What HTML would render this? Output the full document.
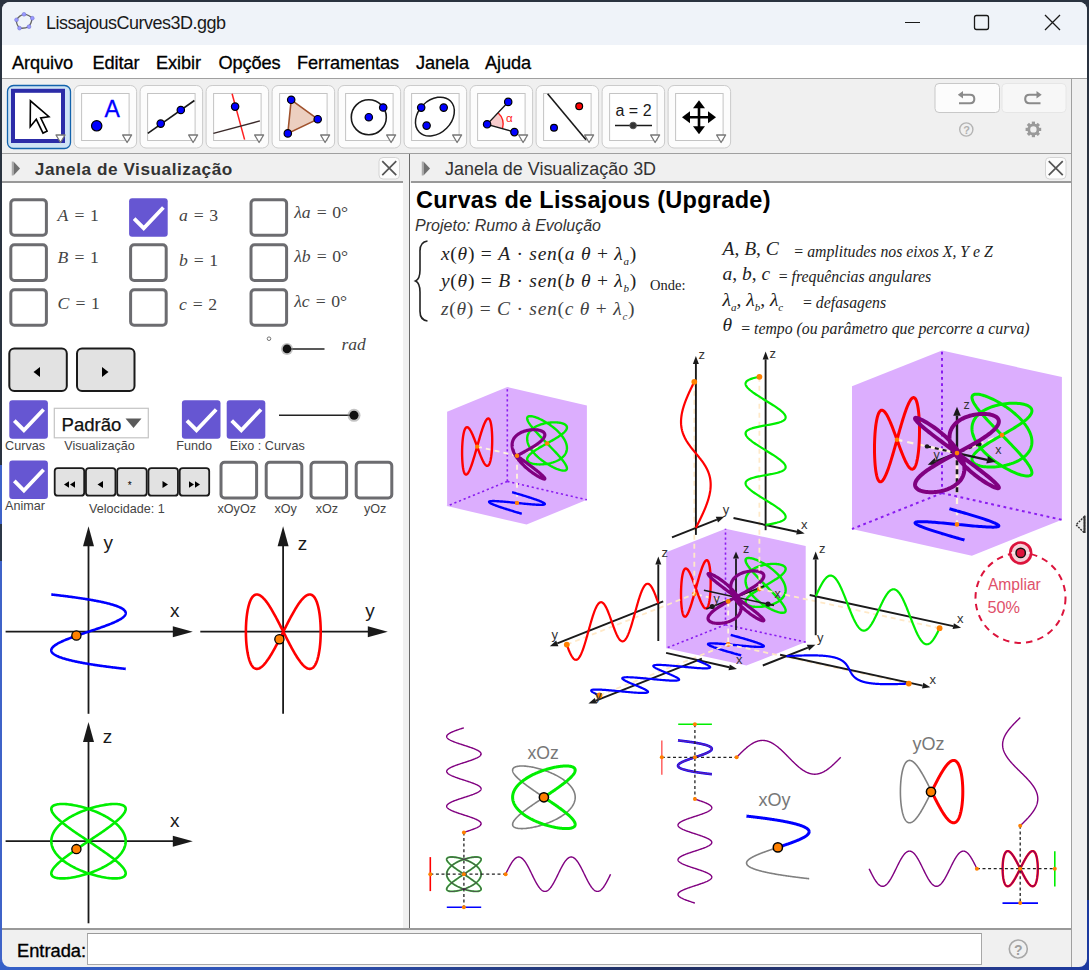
<!DOCTYPE html><html><head><meta charset="utf-8"><style>
*{margin:0;padding:0;box-sizing:border-box}
html,body{width:1089px;height:970px;overflow:hidden;background:#2a3340;font-family:"Liberation Sans",sans-serif}
.a{position:absolute}
#win{position:absolute;left:2px;top:2px;width:1085px;height:965px;background:#f0f0f0;border-radius:8px;overflow:hidden}
.t{position:absolute;white-space:nowrap;line-height:1}
</style></head><body>
<div class="a" style="left:0;top:465px;width:3px;height:505px;background:#3f63c8"></div>
<div class="a" style="left:0;top:524px;width:3px;height:37px;background:#2c3848"></div>
<div class="a" style="left:0;top:962px;width:1089px;height:8px;background:linear-gradient(90deg,#3560c8,#2d4fb0 30%,#1f2e60 60%,#2a3a80 85%,#1c3aa0)"></div>
<div class="a" style="left:1080px;top:900px;width:9px;height:70px;background:#1c3aa0"></div>
<div id="win">
<div class="a" style="left:-2px;top:-2px;width:1089px;height:970px">
<div class="a" style="left:0;top:0;width:1089px;height:45px;background:#eff3f9"></div>
<div class="a" style="left:0;top:45px;width:1089px;height:33px;background:#fff"></div>
<div class="a" style="left:0;top:78px;width:1089px;height:1px;background:#a0a0a0"></div>
<div class="a" style="left:0;top:153px;width:1072px;height:1px;background:#a0a0a0"></div>
<div class="a" style="left:1071px;top:79px;width:1px;height:890px;background:#a0a0a0"></div>
<div class="a" style="left:0;top:181px;width:403px;height:2px;background:#999"></div>
<div class="a" style="left:0;top:183px;width:403px;height:745px;background:#fff"></div>
<div class="a" style="left:409px;top:154px;width:1px;height:775px;background:#6a6a6a"></div>
<div class="a" style="left:411px;top:181px;width:660px;height:2px;background:#999"></div>
<div class="a" style="left:410px;top:183px;width:661px;height:745px;background:#fff"></div>
<div class="a" style="left:0;top:928px;width:1071px;height:2px;background:#999"></div>
<svg class="a" style="left:0;top:0" width="1089" height="45">
<path d="M24 14.3 Q29 14.5 32.3 18.2 Q31.5 23 29 26.7 Q24.5 28.8 19.5 28.1 Q16 24 16.5 19.8 Q19.5 15 24 14.3 Z" fill="none" stroke="#666" stroke-width="1.3"/>
<g fill="#9999ff" stroke="#6a6acc" stroke-width="0.5">
<circle cx="24" cy="14.3" r="1.9"/><circle cx="32.3" cy="18.2" r="1.9"/><circle cx="29" cy="26.7" r="1.9"/><circle cx="19.5" cy="28.1" r="1.9"/><circle cx="16.5" cy="19.8" r="1.9"/></g>
<line x1="905" y1="22.5" x2="920" y2="22.5" stroke="#1a1a1a" stroke-width="1.2"/>
<rect x="974.5" y="15.5" width="14" height="14" rx="2" fill="none" stroke="#1a1a1a" stroke-width="1.3"/>
<path d="M1045 15 L1060 30 M1060 15 L1045 30" stroke="#1a1a1a" stroke-width="1.3"/>
</svg>
<div class="t" style="left:46.0px;top:14.1px;font-size:18px;color:#1a1a1a;font-family:'Liberation Sans',sans-serif;letter-spacing:-0.5px">LissajousCurves3D.ggb</div>
<div class="t" style="left:12.0px;top:53.8px;font-size:18.2px;color:#000;font-family:'Liberation Sans',sans-serif;letter-spacing:-0.1px;-webkit-text-stroke:0.3px #000">Arquivo</div>
<div class="t" style="left:92.5px;top:53.8px;font-size:18.2px;color:#000;font-family:'Liberation Sans',sans-serif;letter-spacing:-0.1px;-webkit-text-stroke:0.3px #000">Editar</div>
<div class="t" style="left:156.0px;top:53.8px;font-size:18.2px;color:#000;font-family:'Liberation Sans',sans-serif;letter-spacing:-0.1px;-webkit-text-stroke:0.3px #000">Exibir</div>
<div class="t" style="left:218.5px;top:53.8px;font-size:18.2px;color:#000;font-family:'Liberation Sans',sans-serif;letter-spacing:-0.1px;-webkit-text-stroke:0.3px #000">Opções</div>
<div class="t" style="left:297.0px;top:53.8px;font-size:18.2px;color:#000;font-family:'Liberation Sans',sans-serif;letter-spacing:-0.1px;-webkit-text-stroke:0.3px #000">Ferramentas</div>
<div class="t" style="left:416.0px;top:53.8px;font-size:18.2px;color:#000;font-family:'Liberation Sans',sans-serif;letter-spacing:-0.1px;-webkit-text-stroke:0.3px #000">Janela</div>
<div class="t" style="left:485.0px;top:53.8px;font-size:18.2px;color:#000;font-family:'Liberation Sans',sans-serif;letter-spacing:-0.1px;-webkit-text-stroke:0.3px #000">Ajuda</div>
<svg class="a" style="left:0;top:0" width="1089" height="153"><rect x="7.5" y="85.5" width="63" height="63" rx="6" fill="#cfe3f5" stroke="#1363ac" stroke-width="1.3"/><rect x="13" y="90.8" width="50" height="50.2" fill="#fff" stroke="#2c2ca8" stroke-width="4"/><path d="M56.0 135 L65.0 135 L60.5 142.5 Z" fill="#fff" stroke="#777" stroke-width="1.3" stroke-linejoin="round"/><rect x="74.1" y="85.5" width="62.5" height="62.5" rx="6" fill="#fcfcfc" stroke="#cbcbcb" stroke-width="1"/><rect x="81.6" y="93.5" width="47.5" height="47" fill="#fff" stroke="#c4c4c4" stroke-width="1"/><path d="M122.6 135 L131.6 135 L127.1 142.5 Z" fill="#fff" stroke="#777" stroke-width="1.3" stroke-linejoin="round"/><rect x="140.1" y="85.5" width="62.5" height="62.5" rx="6" fill="#fcfcfc" stroke="#cbcbcb" stroke-width="1"/><rect x="147.6" y="93.5" width="47.5" height="47" fill="#fff" stroke="#c4c4c4" stroke-width="1"/><path d="M188.6 135 L197.6 135 L193.1 142.5 Z" fill="#fff" stroke="#777" stroke-width="1.3" stroke-linejoin="round"/><rect x="206.1" y="85.5" width="62.5" height="62.5" rx="6" fill="#fcfcfc" stroke="#cbcbcb" stroke-width="1"/><rect x="213.6" y="93.5" width="47.5" height="47" fill="#fff" stroke="#c4c4c4" stroke-width="1"/><path d="M254.6 135 L263.6 135 L259.1 142.5 Z" fill="#fff" stroke="#777" stroke-width="1.3" stroke-linejoin="round"/><rect x="272.1" y="85.5" width="62.5" height="62.5" rx="6" fill="#fcfcfc" stroke="#cbcbcb" stroke-width="1"/><rect x="279.6" y="93.5" width="47.5" height="47" fill="#fff" stroke="#c4c4c4" stroke-width="1"/><path d="M320.6 135 L329.6 135 L325.1 142.5 Z" fill="#fff" stroke="#777" stroke-width="1.3" stroke-linejoin="round"/><rect x="338.1" y="85.5" width="62.5" height="62.5" rx="6" fill="#fcfcfc" stroke="#cbcbcb" stroke-width="1"/><rect x="345.6" y="93.5" width="47.5" height="47" fill="#fff" stroke="#c4c4c4" stroke-width="1"/><path d="M386.6 135 L395.6 135 L391.1 142.5 Z" fill="#fff" stroke="#777" stroke-width="1.3" stroke-linejoin="round"/><rect x="404.1" y="85.5" width="62.5" height="62.5" rx="6" fill="#fcfcfc" stroke="#cbcbcb" stroke-width="1"/><rect x="411.6" y="93.5" width="47.5" height="47" fill="#fff" stroke="#c4c4c4" stroke-width="1"/><path d="M452.6 135 L461.6 135 L457.1 142.5 Z" fill="#fff" stroke="#777" stroke-width="1.3" stroke-linejoin="round"/><rect x="470.1" y="85.5" width="62.5" height="62.5" rx="6" fill="#fcfcfc" stroke="#cbcbcb" stroke-width="1"/><rect x="477.6" y="93.5" width="47.5" height="47" fill="#fff" stroke="#c4c4c4" stroke-width="1"/><path d="M518.6 135 L527.6 135 L523.1 142.5 Z" fill="#fff" stroke="#777" stroke-width="1.3" stroke-linejoin="round"/><rect x="536.1" y="85.5" width="62.5" height="62.5" rx="6" fill="#fcfcfc" stroke="#cbcbcb" stroke-width="1"/><rect x="543.6" y="93.5" width="47.5" height="47" fill="#fff" stroke="#c4c4c4" stroke-width="1"/><path d="M584.6 135 L593.6 135 L589.1 142.5 Z" fill="#fff" stroke="#777" stroke-width="1.3" stroke-linejoin="round"/><rect x="602.1" y="85.5" width="62.5" height="62.5" rx="6" fill="#fcfcfc" stroke="#cbcbcb" stroke-width="1"/><rect x="609.6" y="93.5" width="47.5" height="47" fill="#fff" stroke="#c4c4c4" stroke-width="1"/><path d="M650.6 135 L659.6 135 L655.1 142.5 Z" fill="#fff" stroke="#777" stroke-width="1.3" stroke-linejoin="round"/><rect x="668.1" y="85.5" width="62.5" height="62.5" rx="6" fill="#fcfcfc" stroke="#cbcbcb" stroke-width="1"/><rect x="675.6" y="93.5" width="47.5" height="47" fill="#fff" stroke="#c4c4c4" stroke-width="1"/><path d="M716.6 135 L725.6 135 L721.1 142.5 Z" fill="#fff" stroke="#777" stroke-width="1.3" stroke-linejoin="round"/><path d="M30.4 100.8 L30.2 126.8 L36.3 119.3 L43 133.1 L47.1 131.2 L40.7 117.9 L48.9 116.7 Z" fill="#fff" stroke="#000" stroke-width="1.6" stroke-linejoin="miter"/><circle cx="96.7" cy="125.8" r="5.2" fill="#0000ff" stroke="#000" stroke-width="1.2"/><text x="104.6" y="116.9" font-family="Liberation Sans" font-size="23" fill="#0000ff" stroke="#0000ff" stroke-width="0.3">A</text><line x1="147.8" y1="133.4" x2="194.4" y2="100.5" stroke="#1a1a1a" stroke-width="1.6"/><circle cx="160.7" cy="123.6" r="3.7" fill="#0000ff" stroke="#000" stroke-width="1.2"/><circle cx="180.8" cy="110" r="3.7" fill="#0000ff" stroke="#000" stroke-width="1.2"/><line x1="232.1" y1="93.7" x2="244.6" y2="139.6" stroke="#ff2020" stroke-width="1.5"/><line x1="213.4" y1="133.4" x2="259.9" y2="120.9" stroke="#3a2a2a" stroke-width="1.5"/><circle cx="235.1" cy="106.6" r="3.7" fill="#0000ff" stroke="#000" stroke-width="1.2"/><polygon points="291.2,99.8 317.7,119.2 287.8,133.4" fill="#eccfc0" stroke="#a0522d" stroke-width="1.6"/><circle cx="291.2" cy="99.8" r="3.7" fill="#0000ff" stroke="#000" stroke-width="1.2"/><circle cx="317.7" cy="119.2" r="3.7" fill="#0000ff" stroke="#000" stroke-width="1.2"/><circle cx="287.8" cy="133.4" r="3.7" fill="#0000ff" stroke="#000" stroke-width="1.2"/><circle cx="368.8" cy="117.2" r="17.5" fill="none" stroke="#1a1a1a" stroke-width="1.6"/><circle cx="368.8" cy="117.2" r="3.7" fill="#0000ff" stroke="#000" stroke-width="1.2"/><circle cx="383.2" cy="107.5" r="3.7" fill="#0000ff" stroke="#000" stroke-width="1.2"/><ellipse cx="434.9" cy="116.6" rx="22" ry="16.5" transform="rotate(-45 434.9 116.6)" fill="none" stroke="#1a1a1a" stroke-width="1.5"/><circle cx="421.2" cy="107.6" r="3.7" fill="#0000ff" stroke="#000" stroke-width="1.2"/><circle cx="443.7" cy="107.6" r="3.7" fill="#0000ff" stroke="#000" stroke-width="1.2"/><circle cx="426.6" cy="125.6" r="3.7" fill="#0000ff" stroke="#000" stroke-width="1.2"/><path d="M487.1 124.3 L498 112.8 A15.8 15.8 0 0 1 502.5 128.6 Z" fill="#f8cccc" stroke="none"/><path d="M498 112.8 A15.8 15.8 0 0 1 502.5 128.6" fill="none" stroke="#ff2020" stroke-width="1.4"/><polyline points="508.2,101.9 487.1,124.3 514.4,132.1" fill="none" stroke="#1a1a1a" stroke-width="1.4"/><circle cx="508.2" cy="101.9" r="3.7" fill="#0000ff" stroke="#000" stroke-width="1.2"/><circle cx="487.1" cy="124.3" r="3.7" fill="#0000ff" stroke="#000" stroke-width="1.2"/><circle cx="514.4" cy="132.1" r="3.7" fill="#0000ff" stroke="#000" stroke-width="1.2"/><text x="506" y="121.5" font-family="Liberation Sans" font-size="11.5" fill="#ff2020">α</text><line x1="547.6" y1="93.8" x2="586" y2="139.8" stroke="#1a1a1a" stroke-width="1.6"/><circle cx="579.2" cy="106.2" r="3.4" fill="#ff0000" stroke="#000" stroke-width="1.2"/><circle cx="554" cy="127.7" r="3.4" fill="#0000ff" stroke="#000" stroke-width="1.2"/><text x="615.5" y="116" font-family="Liberation Sans" font-size="16" fill="#1a1a1a">a = 2</text><line x1="615" y1="125.5" x2="652" y2="125.5" stroke="#1a1a1a" stroke-width="1.6"/><circle cx="633.1" cy="125.5" r="3.3" fill="#333" stroke="#555" stroke-width="1"/><g fill="#000" stroke="#000" stroke-width="2.6"><line x1="686" y1="117.2" x2="712" y2="117.2"/><line x1="699" y1="104.2" x2="699" y2="130.2"/></g><g fill="#000"><polygon points="699,100.2 693,108.2 705,108.2"/><polygon points="699,134.2 693,126.2 705,126.2"/><polygon points="682,117.2 690,111.2 690,123.2"/><polygon points="716,117.2 708,111.2 708,123.2"/></g><rect x="935" y="83.5" width="64.5" height="29" rx="4" fill="#fcfcfc" stroke="#c8c8c8" stroke-width="1"/><rect x="1002" y="83.5" width="64" height="29" rx="4" fill="#f7f7f7" stroke="#e6e6e6" stroke-width="1"/><path d="M961 94.8 H970 Q974.3 94.8 974.3 99 Q974.3 103.2 970 103.2 H959" fill="none" stroke="#8a8a8a" stroke-width="2.1"/><path d="M957.8 94.8 L963 91 L963 98.6 Z" fill="#8a8a8a"/><path d="M1038.5 94.8 H1029.5 Q1025.2 94.8 1025.2 99 Q1025.2 103.2 1029.5 103.2 H1040.5" fill="none" stroke="#8a8a8a" stroke-width="2.1"/><path d="M1041.7 94.8 L1036.5 91 L1036.5 98.6 Z" fill="#8a8a8a"/><circle cx="966.3" cy="129.5" r="6.6" fill="none" stroke="#b4b4b4" stroke-width="1.4"/><text x="963.2" y="134" font-family="Liberation Sans" font-size="11" font-weight="bold" fill="#b0b0b0">?</text><g transform="translate(1033.4,129.4)" fill="#9a9a9a"><circle r="4.6" fill="none" stroke="#9a9a9a" stroke-width="2.8"/><rect x="-1.6" y="-7.8" width="3.2" height="3.6" transform="rotate(0)"/><rect x="-1.6" y="-7.8" width="3.2" height="3.6" transform="rotate(45)"/><rect x="-1.6" y="-7.8" width="3.2" height="3.6" transform="rotate(90)"/><rect x="-1.6" y="-7.8" width="3.2" height="3.6" transform="rotate(135)"/><rect x="-1.6" y="-7.8" width="3.2" height="3.6" transform="rotate(180)"/><rect x="-1.6" y="-7.8" width="3.2" height="3.6" transform="rotate(225)"/><rect x="-1.6" y="-7.8" width="3.2" height="3.6" transform="rotate(270)"/><rect x="-1.6" y="-7.8" width="3.2" height="3.6" transform="rotate(315)"/></g></svg>
<svg class="a" style="left:0;top:150px" width="1089" height="35"><path d="M12.5 161.5 V175.5" stroke="#aaa" stroke-width="1.5" transform="translate(0,-150)"/><path d="M13.5 161.5 L20 168.5 L13.5 175.5 Z" fill="#707070" transform="translate(0,-150)"/><path d="M422.5 161.5 V175.5" stroke="#aaa" stroke-width="1.5" transform="translate(0,-150)"/><path d="M423.5 161.5 L430 168.5 L423.5 175.5 Z" fill="#707070" transform="translate(0,-150)"/><rect x="379" y="7.5" width="20.5" height="21.5" rx="4" fill="#fcfcfc" stroke="#d4d4d4" stroke-width="1"/><path d="M382.25 11.2 L396.25 25.2 M396.25 11.2 L382.25 25.2" stroke="#555" stroke-width="1.7"/><rect x="1045.5" y="7.5" width="20.5" height="21.5" rx="4" fill="#fcfcfc" stroke="#d4d4d4" stroke-width="1"/><path d="M1048.75 11.2 L1062.75 25.2 M1062.75 11.2 L1048.75 25.2" stroke="#555" stroke-width="1.7"/></svg>
<div class="t" style="left:34.8px;top:161.0px;font-size:17.2px;color:#333;font-family:'Liberation Sans',sans-serif;font-weight:bold;letter-spacing:0.55px">Janela de Visualização</div>
<div class="t" style="left:445.0px;top:160.6px;font-size:17.95px;color:#333;font-family:'Liberation Sans',sans-serif;">Janela de Visualização 3D</div>
<svg class="a" style="left:0;top:0" width="405" height="930"><rect x="10.8" y="199.7" width="35.6" height="35.6" rx="3.5" fill="#fff" stroke="#6c6c70" stroke-width="3"/><rect x="129.1" y="198.2" width="38.6" height="38.6" rx="3" fill="#6656d2"/><polyline points="134.1,218.6 143.7,228.2 163.39999999999998,207.5" fill="none" stroke="#fff" stroke-width="3.8"/><rect x="251.0" y="199.7" width="35.6" height="35.6" rx="3.5" fill="#fff" stroke="#6c6c70" stroke-width="3"/><rect x="10.8" y="244.8" width="35.6" height="35.6" rx="3.5" fill="#fff" stroke="#6c6c70" stroke-width="3"/><rect x="130.6" y="244.8" width="35.6" height="35.6" rx="3.5" fill="#fff" stroke="#6c6c70" stroke-width="3"/><rect x="251.0" y="244.8" width="35.6" height="35.6" rx="3.5" fill="#fff" stroke="#6c6c70" stroke-width="3"/><rect x="10.8" y="289.7" width="35.6" height="35.6" rx="3.5" fill="#fff" stroke="#6c6c70" stroke-width="3"/><rect x="130.6" y="289.7" width="35.6" height="35.6" rx="3.5" fill="#fff" stroke="#6c6c70" stroke-width="3"/><rect x="251.0" y="289.7" width="35.6" height="35.6" rx="3.5" fill="#fff" stroke="#6c6c70" stroke-width="3"/><rect x="9.3" y="348.5" width="57.5" height="42.5" rx="5" fill="#e2e2e2" stroke="#1a1a1a" stroke-width="2"/><rect x="77" y="348.5" width="57.5" height="42.5" rx="5" fill="#e2e2e2" stroke="#1a1a1a" stroke-width="2"/><polygon points="33.5,372 40,367 40,377" fill="#000"/><polygon points="108.5,372 102,367 102,377" fill="#000"/><circle cx="269" cy="338.7" r="1.8" fill="none" stroke="#666" stroke-width="0.9"/><line x1="287" y1="348.9" x2="324.5" y2="348.9" stroke="#222" stroke-width="1.5"/><circle cx="287" cy="348.9" r="6" fill="#888" fill-opacity="0.5"/><circle cx="287" cy="348.9" r="4.3" fill="#111"/><rect x="9.3" y="400.2" width="38.6" height="38.6" rx="3" fill="#6656d2"/><polyline points="14.3,420.59999999999997 23.9,430.2 43.599999999999994,409.5" fill="none" stroke="#fff" stroke-width="3.8"/><rect x="181.9" y="400.2" width="38.6" height="38.6" rx="3" fill="#6656d2"/><polyline points="186.9,420.59999999999997 196.5,430.2 216.2,409.5" fill="none" stroke="#fff" stroke-width="3.8"/><rect x="226.7" y="400.2" width="38.6" height="38.6" rx="3" fill="#6656d2"/><polyline points="231.7,420.59999999999997 241.29999999999998,430.2 261.0,409.5" fill="none" stroke="#fff" stroke-width="3.8"/><rect x="54.3" y="408.3" width="94" height="29.5" fill="#fff" stroke="#c4c4c4" stroke-width="1.2"/><polygon points="125.5,418.5 141.5,418.5 133.5,428" fill="#5a5a5a"/><line x1="279" y1="415.3" x2="354" y2="415.3" stroke="#222" stroke-width="1.5"/><circle cx="354" cy="415.3" r="6.5" fill="#888" fill-opacity="0.5"/><circle cx="354" cy="415.3" r="4.5" fill="#111"/><rect x="9.3" y="460.5" width="38.6" height="38.6" rx="3" fill="#6656d2"/><polyline points="14.3,480.9 23.9,490.5 43.599999999999994,469.8" fill="none" stroke="#fff" stroke-width="3.8"/><rect x="54.699999999999996" y="468.1" width="29.5" height="27.6" rx="3" fill="#e2e2e2" stroke="#1a1a1a" stroke-width="1.8"/><rect x="85.95" y="468.1" width="29.5" height="27.6" rx="3" fill="#e2e2e2" stroke="#1a1a1a" stroke-width="1.8"/><rect x="117.2" y="468.1" width="29.5" height="27.6" rx="3" fill="#e2e2e2" stroke="#1a1a1a" stroke-width="1.8"/><rect x="148.45000000000002" y="468.1" width="29.5" height="27.6" rx="3" fill="#e2e2e2" stroke="#1a1a1a" stroke-width="1.8"/><rect x="179.70000000000002" y="468.1" width="29.5" height="27.6" rx="3" fill="#e2e2e2" stroke="#1a1a1a" stroke-width="1.8"/><polygon points="64,484.5 69,481.2 69,487.8" fill="#000"/><polygon points="70,484.5 75,481.2 75,487.8" fill="#000"/><polygon points="97.5,484.5 103,481.0 103,488.0" fill="#000"/><text x="127.8" y="489.0" font-family="Liberation Sans" font-size="10" fill="#000">*</text><polygon points="168,484.5 162.5,481.0 162.5,488.0" fill="#000"/><polygon points="194,484.5 189,481.2 189,487.8" fill="#000"/><polygon points="200,484.5 195,481.2 195,487.8" fill="#000"/><rect x="221.0" y="462.3" width="35.6" height="35.6" rx="3.5" fill="#fff" stroke="#6c6c70" stroke-width="3"/><rect x="266.2" y="462.3" width="35.6" height="35.6" rx="3.5" fill="#fff" stroke="#6c6c70" stroke-width="3"/><rect x="311.0" y="462.3" width="35.6" height="35.6" rx="3.5" fill="#fff" stroke="#6c6c70" stroke-width="3"/><rect x="356.2" y="462.3" width="35.6" height="35.6" rx="3.5" fill="#fff" stroke="#6c6c70" stroke-width="3"/></svg>
<div class="t" style="left:57.6px;top:206.6px;font-size:17.7px;color:#444;font-family:'Liberation Serif',serif"><i>A</i><span style="margin:0 5.5px 0 6px">=</span>1</div>
<div class="t" style="left:57.6px;top:249.2px;font-size:17.7px;color:#444;font-family:'Liberation Serif',serif"><i>B</i><span style="margin:0 5.5px 0 6px">=</span>1</div>
<div class="t" style="left:57.6px;top:295.4px;font-size:17.7px;color:#444;font-family:'Liberation Serif',serif"><i>C</i><span style="margin:0 5.5px 0 6px">=</span>1</div>
<div class="t" style="left:179px;top:207.2px;font-size:17.7px;color:#444;font-family:'Liberation Serif',serif"><i>a</i><span style="margin:0 5.5px 0 6px">=</span>3</div>
<div class="t" style="left:179px;top:252.2px;font-size:17.7px;color:#444;font-family:'Liberation Serif',serif"><i>b</i><span style="margin:0 5.5px 0 6px">=</span>1</div>
<div class="t" style="left:179px;top:295.7px;font-size:17.7px;color:#444;font-family:'Liberation Serif',serif"><i>c</i><span style="margin:0 5.5px 0 6px">=</span>2</div>
<div class="t" style="left:294.2px;top:203.7px;font-size:17.7px;color:#444;font-family:'Liberation Serif',serif"><i>λa</i><span style="margin:0 5.5px 0 6px">=</span>0°</div>
<div class="t" style="left:294.2px;top:248.4px;font-size:17.7px;color:#444;font-family:'Liberation Serif',serif"><i>λb</i><span style="margin:0 5.5px 0 6px">=</span>0°</div>
<div class="t" style="left:294.2px;top:293.3px;font-size:17.7px;color:#444;font-family:'Liberation Serif',serif"><i>λc</i><span style="margin:0 5.5px 0 6px">=</span>0°</div>
<div class="t" style="left:341.5px;top:336px;font-size:17.5px;color:#444;font-family:'Liberation Serif',serif"><i>rad</i></div>
<div class="t" style="left:5.1px;top:440.2px;font-size:12.6px;color:#444;font-family:'Liberation Sans',sans-serif;">Curvas</div>
<div class="t" style="left:64.3px;top:440.2px;font-size:12.6px;color:#444;font-family:'Liberation Sans',sans-serif;">Visualização</div>
<div class="t" style="left:176.3px;top:440.4px;font-size:12.6px;color:#444;font-family:'Liberation Sans',sans-serif;">Fundo</div>
<div class="t" style="left:229.8px;top:440.4px;font-size:12.6px;color:#444;font-family:'Liberation Sans',sans-serif;">Eixo : Curvas</div>
<div class="t" style="left:5.1px;top:500.3px;font-size:12.6px;color:#444;font-family:'Liberation Sans',sans-serif;">Animar</div>
<div class="t" style="left:89.1px;top:503.0px;font-size:12.6px;color:#444;font-family:'Liberation Sans',sans-serif;">Velocidade: 1</div>
<div class="t" style="left:217.5px;top:503.1px;font-size:12.6px;color:#444;font-family:'Liberation Sans',sans-serif;">xOyOz</div>
<div class="t" style="left:274.5px;top:503.1px;font-size:12.6px;color:#444;font-family:'Liberation Sans',sans-serif;">xOy</div>
<div class="t" style="left:315.7px;top:503.1px;font-size:12.6px;color:#444;font-family:'Liberation Sans',sans-serif;">xOz</div>
<div class="t" style="left:363.9px;top:503.1px;font-size:12.6px;color:#444;font-family:'Liberation Sans',sans-serif;">yOz</div>
<div class="t" style="left:61.5px;top:415.5px;font-size:18.6px;color:#111;font-family:'Liberation Sans',sans-serif;-webkit-text-stroke:0.25px #111">Padrão</div>
<svg class="a" style="left:0;top:0" width="405" height="930"><line x1="5.6" y1="631.7" x2="180.8" y2="631.7" stroke="#1a1a1a" stroke-width="1.8"/><polygon points="192.8,631.7 172.8,626.2 172.8,637.2" fill="#1a1a1a"/><line x1="88.5" y1="538.3" x2="88.5" y2="713.8" stroke="#1a1a1a" stroke-width="1.8"/><polygon points="88.5,526.3 83.0,546.3 94.0,546.3" fill="#1a1a1a"/><path d="M125.70,668.90 L125.69,668.90 L125.66,668.90 L125.61,668.89 L125.53,668.88 L125.44,668.87 L125.33,668.86 L125.20,668.84 L125.04,668.83 L124.87,668.81 L124.67,668.79 L124.46,668.76 L124.22,668.73 L123.97,668.71 L123.69,668.68 L123.40,668.64 L123.09,668.61 L122.76,668.57 L122.40,668.53 L122.03,668.49 L121.65,668.44 L121.24,668.40 L120.81,668.35 L120.37,668.29 L119.91,668.24 L119.43,668.19 L118.94,668.13 L118.42,668.07 L117.89,668.00 L117.35,667.94 L116.79,667.87 L116.21,667.80 L115.62,667.73 L115.01,667.66 L114.39,667.58 L113.75,667.50 L113.10,667.42 L112.44,667.34 L111.76,667.26 L111.07,667.17 L110.37,667.08 L109.65,666.99 L108.92,666.89 L108.19,666.80 L107.44,666.70 L106.68,666.60 L105.91,666.50 L105.13,666.39 L104.34,666.29 L103.54,666.18 L102.74,666.07 L101.92,665.96 L101.10,665.84 L100.27,665.72 L99.44,665.60 L98.60,665.48 L97.75,665.36 L96.90,665.23 L96.04,665.11 L95.18,664.98 L94.32,664.85 L93.45,664.71 L92.58,664.58 L91.71,664.44 L90.84,664.30 L89.96,664.16 L89.08,664.01 L88.21,663.87 L87.33,663.72 L86.46,663.57 L85.58,663.42 L84.71,663.26 L83.84,663.11 L82.97,662.95 L82.10,662.79 L81.24,662.63 L80.39,662.47 L79.53,662.30 L78.68,662.14 L77.84,661.97 L77.00,661.80 L76.17,661.62 L75.35,661.45 L74.53,661.27 L73.73,661.09 L72.93,660.91 L72.13,660.73 L71.35,660.55 L70.58,660.36 L69.82,660.18 L69.06,659.99 L68.32,659.80 L67.59,659.60 L66.87,659.41 L66.16,659.21 L65.47,659.02 L64.79,658.82 L64.12,658.62 L63.46,658.41 L62.82,658.21 L62.20,658.00 L61.58,657.80 L60.99,657.59 L60.40,657.38 L59.84,657.17 L59.29,656.95 L58.75,656.74 L58.23,656.52 L57.73,656.30 L57.25,656.08 L56.78,655.86 L56.33,655.64 L55.90,655.41 L55.49,655.19 L55.09,654.96 L54.72,654.73 L54.36,654.50 L54.02,654.27 L53.70,654.04 L53.40,653.80 L53.12,653.57 L52.86,653.33 L52.62,653.09 L52.40,652.85 L52.20,652.61 L52.01,652.37 L51.85,652.12 L51.71,651.88 L51.59,651.63 L51.49,651.39 L51.41,651.14 L51.36,650.89 L51.32,650.64 L51.30,650.38 L51.30,650.13 L51.33,649.88 L51.37,649.62 L51.44,649.36 L51.52,649.11 L51.63,648.85 L51.76,648.59 L51.91,648.33 L52.07,648.07 L52.26,647.80 L52.47,647.54 L52.70,647.27 L52.94,647.01 L53.21,646.74 L53.50,646.47 L53.81,646.21 L54.13,645.94 L54.48,645.67 L54.84,645.39 L55.22,645.12 L55.62,644.85 L56.04,644.58 L56.48,644.30 L56.94,644.03 L57.41,643.75 L57.90,643.47 L58.40,643.20 L58.93,642.92 L59.47,642.64 L60.02,642.36 L60.60,642.08 L61.18,641.80 L61.79,641.52 L62.40,641.23 L63.03,640.95 L63.68,640.67 L64.34,640.38 L65.01,640.10 L65.70,639.81 L66.40,639.53 L67.11,639.24 L67.83,638.96 L68.57,638.67 L69.31,638.38 L70.07,638.10 L70.84,637.81 L71.61,637.52 L72.40,637.23 L73.19,636.94 L73.99,636.65 L74.81,636.36 L75.62,636.07 L76.45,635.78 L77.28,635.49 L78.12,635.20 L78.97,634.91 L79.82,634.62 L80.67,634.33 L81.53,634.04 L82.39,633.74 L83.26,633.45 L84.13,633.16 L85.00,632.87 L85.87,632.58 L86.75,632.28 L87.62,631.99 L88.50,631.70 L89.38,631.41 L90.25,631.12 L91.13,630.82 L92.00,630.53 L92.87,630.24 L93.74,629.95 L94.61,629.66 L95.47,629.36 L96.33,629.07 L97.18,628.78 L98.03,628.49 L98.88,628.20 L99.72,627.91 L100.55,627.62 L101.38,627.33 L102.19,627.04 L103.01,626.75 L103.81,626.46 L104.60,626.17 L105.39,625.88 L106.16,625.59 L106.93,625.30 L107.69,625.02 L108.43,624.73 L109.17,624.44 L109.89,624.16 L110.60,623.87 L111.30,623.59 L111.99,623.30 L112.66,623.02 L113.32,622.73 L113.97,622.45 L114.60,622.17 L115.21,621.88 L115.82,621.60 L116.40,621.32 L116.98,621.04 L117.53,620.76 L118.07,620.48 L118.60,620.20 L119.10,619.93 L119.59,619.65 L120.06,619.37 L120.52,619.10 L120.96,618.82 L121.38,618.55 L121.78,618.28 L122.16,618.01 L122.52,617.73 L122.87,617.46 L123.19,617.19 L123.50,616.93 L123.79,616.66 L124.06,616.39 L124.30,616.13 L124.53,615.86 L124.74,615.60 L124.93,615.33 L125.09,615.07 L125.24,614.81 L125.37,614.55 L125.48,614.29 L125.56,614.04 L125.63,613.78 L125.67,613.52 L125.70,613.27 L125.70,613.02 L125.68,612.76 L125.64,612.51 L125.59,612.26 L125.51,612.01 L125.41,611.77 L125.29,611.52 L125.15,611.28 L124.99,611.03 L124.80,610.79 L124.60,610.55 L124.38,610.31 L124.14,610.07 L123.88,609.83 L123.60,609.60 L123.30,609.36 L122.98,609.13 L122.64,608.90 L122.28,608.67 L121.91,608.44 L121.51,608.21 L121.10,607.99 L120.67,607.76 L120.22,607.54 L119.75,607.32 L119.27,607.10 L118.77,606.88 L118.25,606.66 L117.71,606.45 L117.16,606.23 L116.60,606.02 L116.01,605.81 L115.42,605.60 L114.80,605.40 L114.18,605.19 L113.54,604.99 L112.88,604.78 L112.21,604.58 L111.53,604.38 L110.84,604.19 L110.13,603.99 L109.41,603.80 L108.68,603.60 L107.94,603.41 L107.18,603.22 L106.42,603.04 L105.65,602.85 L104.87,602.67 L104.07,602.49 L103.27,602.31 L102.47,602.13 L101.65,601.95 L100.83,601.78 L100.00,601.60 L99.16,601.43 L98.32,601.26 L97.47,601.10 L96.61,600.93 L95.76,600.77 L94.90,600.61 L94.03,600.45 L93.16,600.29 L92.29,600.14 L91.42,599.98 L90.54,599.83 L89.67,599.68 L88.79,599.53 L87.92,599.39 L87.04,599.24 L86.16,599.10 L85.29,598.96 L84.42,598.82 L83.55,598.69 L82.68,598.55 L81.82,598.42 L80.96,598.29 L80.10,598.17 L79.25,598.04 L78.40,597.92 L77.56,597.80 L76.73,597.68 L75.90,597.56 L75.08,597.44 L74.26,597.33 L73.46,597.22 L72.66,597.11 L71.87,597.01 L71.09,596.90 L70.32,596.80 L69.56,596.70 L68.81,596.60 L68.08,596.51 L67.35,596.41 L66.63,596.32 L65.93,596.23 L65.24,596.14 L64.56,596.06 L63.90,595.98 L63.25,595.90 L62.61,595.82 L61.99,595.74 L61.38,595.67 L60.79,595.60 L60.21,595.53 L59.65,595.46 L59.11,595.40 L58.58,595.33 L58.06,595.27 L57.57,595.21 L57.09,595.16 L56.63,595.11 L56.19,595.05 L55.76,595.00 L55.35,594.96 L54.97,594.91 L54.60,594.87 L54.24,594.83 L53.91,594.79 L53.60,594.76 L53.31,594.72 L53.03,594.69 L52.78,594.67 L52.54,594.64 L52.33,594.61 L52.13,594.59 L51.96,594.57 L51.80,594.56 L51.67,594.54 L51.56,594.53 L51.47,594.52 L51.39,594.51 L51.34,594.50 L51.31,594.50 L51.30,594.50" fill="none" stroke="#0000ff" stroke-width="2.6"/><circle cx="76.4" cy="635.5" r="4.6" fill="#ff8000" stroke="#000" stroke-width="1.3"/><line x1="200.3" y1="631.7" x2="375.8" y2="631.7" stroke="#1a1a1a" stroke-width="1.8"/><polygon points="387.8,631.7 367.8,626.2 367.8,637.2" fill="#1a1a1a"/><line x1="283.1" y1="538.3" x2="283.1" y2="713.8" stroke="#1a1a1a" stroke-width="1.8"/><polygon points="283.1,526.3 277.6,546.3 288.6,546.3" fill="#1a1a1a"/><path d="M283.30,631.70 L283.89,630.53 L284.47,629.36 L285.06,628.20 L285.65,627.04 L286.23,625.88 L286.82,624.73 L287.40,623.59 L287.99,622.45 L288.57,621.32 L289.15,620.20 L289.73,619.10 L290.31,618.01 L290.88,616.93 L291.46,615.86 L292.03,614.81 L292.60,613.78 L293.17,612.76 L293.73,611.77 L294.30,610.79 L294.86,609.83 L295.41,608.90 L295.97,607.99 L296.52,607.10 L297.07,606.23 L297.61,605.40 L298.15,604.58 L298.69,603.80 L299.22,603.04 L299.75,602.31 L300.28,601.60 L300.80,600.93 L301.32,600.29 L301.83,599.68 L302.34,599.10 L302.84,598.55 L303.34,598.04 L303.83,597.56 L304.32,597.11 L304.81,596.70 L305.28,596.32 L305.76,595.98 L306.22,595.67 L306.68,595.40 L307.14,595.16 L307.59,594.96 L308.03,594.79 L308.47,594.67 L308.90,594.57 L309.33,594.52 L309.75,594.50 L310.16,594.52 L310.56,594.57 L310.96,594.67 L311.35,594.79 L311.74,594.96 L312.12,595.16 L312.49,595.40 L312.85,595.67 L313.21,595.98 L313.56,596.32 L313.90,596.70 L314.23,597.11 L314.56,597.56 L314.88,598.04 L315.19,598.55 L315.49,599.10 L315.79,599.68 L316.07,600.29 L316.35,600.93 L316.62,601.60 L316.89,602.31 L317.14,603.04 L317.39,603.80 L317.62,604.58 L317.85,605.40 L318.07,606.23 L318.29,607.10 L318.49,607.99 L318.68,608.90 L318.87,609.83 L319.05,610.79 L319.21,611.77 L319.37,612.76 L319.53,613.78 L319.67,614.81 L319.80,615.86 L319.92,616.93 L320.04,618.01 L320.14,619.10 L320.24,620.20 L320.33,621.32 L320.41,622.45 L320.47,623.59 L320.53,624.73 L320.58,625.88 L320.63,627.04 L320.66,628.20 L320.68,629.36 L320.70,630.53 L320.70,631.70 L320.70,632.87 L320.68,634.04 L320.66,635.20 L320.63,636.36 L320.58,637.52 L320.53,638.67 L320.47,639.81 L320.41,640.95 L320.33,642.08 L320.24,643.20 L320.14,644.30 L320.04,645.39 L319.92,646.47 L319.80,647.54 L319.67,648.59 L319.53,649.62 L319.37,650.64 L319.21,651.63 L319.05,652.61 L318.87,653.57 L318.68,654.50 L318.49,655.41 L318.29,656.30 L318.07,657.17 L317.85,658.00 L317.62,658.82 L317.39,659.60 L317.14,660.36 L316.89,661.09 L316.62,661.80 L316.35,662.47 L316.07,663.11 L315.79,663.72 L315.49,664.30 L315.19,664.85 L314.88,665.36 L314.56,665.84 L314.23,666.29 L313.90,666.70 L313.56,667.08 L313.21,667.42 L312.85,667.73 L312.49,668.00 L312.12,668.24 L311.74,668.44 L311.35,668.61 L310.96,668.73 L310.56,668.83 L310.16,668.88 L309.75,668.90 L309.33,668.88 L308.90,668.83 L308.47,668.73 L308.03,668.61 L307.59,668.44 L307.14,668.24 L306.68,668.00 L306.22,667.73 L305.76,667.42 L305.28,667.08 L304.81,666.70 L304.32,666.29 L303.83,665.84 L303.34,665.36 L302.84,664.85 L302.34,664.30 L301.83,663.72 L301.32,663.11 L300.80,662.47 L300.28,661.80 L299.75,661.09 L299.22,660.36 L298.69,659.60 L298.15,658.82 L297.61,658.00 L297.07,657.17 L296.52,656.30 L295.97,655.41 L295.41,654.50 L294.86,653.57 L294.30,652.61 L293.73,651.63 L293.17,650.64 L292.60,649.62 L292.03,648.59 L291.46,647.54 L290.88,646.47 L290.31,645.39 L289.73,644.30 L289.15,643.20 L288.57,642.08 L287.99,640.95 L287.40,639.81 L286.82,638.67 L286.23,637.52 L285.65,636.36 L285.06,635.20 L284.47,634.04 L283.89,632.87 L283.30,631.70 L282.71,630.53 L282.13,629.36 L281.54,628.20 L280.95,627.04 L280.37,625.88 L279.78,624.73 L279.20,623.59 L278.61,622.45 L278.03,621.32 L277.45,620.20 L276.87,619.10 L276.29,618.01 L275.72,616.93 L275.14,615.86 L274.57,614.81 L274.00,613.78 L273.43,612.76 L272.87,611.77 L272.30,610.79 L271.74,609.83 L271.19,608.90 L270.63,607.99 L270.08,607.10 L269.53,606.23 L268.99,605.40 L268.45,604.58 L267.91,603.80 L267.38,603.04 L266.85,602.31 L266.32,601.60 L265.80,600.93 L265.28,600.29 L264.77,599.68 L264.26,599.10 L263.76,598.55 L263.26,598.04 L262.77,597.56 L262.28,597.11 L261.79,596.70 L261.32,596.32 L260.84,595.98 L260.38,595.67 L259.92,595.40 L259.46,595.16 L259.01,594.96 L258.57,594.79 L258.13,594.67 L257.70,594.57 L257.27,594.52 L256.85,594.50 L256.44,594.52 L256.04,594.57 L255.64,594.67 L255.25,594.79 L254.86,594.96 L254.48,595.16 L254.11,595.40 L253.75,595.67 L253.39,595.98 L253.04,596.32 L252.70,596.70 L252.37,597.11 L252.04,597.56 L251.72,598.04 L251.41,598.55 L251.11,599.10 L250.81,599.68 L250.53,600.29 L250.25,600.93 L249.98,601.60 L249.71,602.31 L249.46,603.04 L249.21,603.80 L248.98,604.58 L248.75,605.40 L248.53,606.23 L248.31,607.10 L248.11,607.99 L247.92,608.90 L247.73,609.83 L247.55,610.79 L247.39,611.77 L247.23,612.76 L247.07,613.78 L246.93,614.81 L246.80,615.86 L246.68,616.93 L246.56,618.01 L246.46,619.10 L246.36,620.20 L246.27,621.32 L246.19,622.45 L246.13,623.59 L246.07,624.73 L246.02,625.88 L245.97,627.04 L245.94,628.20 L245.92,629.36 L245.90,630.53 L245.90,631.70 L245.90,632.87 L245.92,634.04 L245.94,635.20 L245.97,636.36 L246.02,637.52 L246.07,638.67 L246.13,639.81 L246.19,640.95 L246.27,642.08 L246.36,643.20 L246.46,644.30 L246.56,645.39 L246.68,646.47 L246.80,647.54 L246.93,648.59 L247.07,649.62 L247.23,650.64 L247.39,651.63 L247.55,652.61 L247.73,653.57 L247.92,654.50 L248.11,655.41 L248.31,656.30 L248.53,657.17 L248.75,658.00 L248.98,658.82 L249.21,659.60 L249.46,660.36 L249.71,661.09 L249.98,661.80 L250.25,662.47 L250.53,663.11 L250.81,663.72 L251.11,664.30 L251.41,664.85 L251.72,665.36 L252.04,665.84 L252.37,666.29 L252.70,666.70 L253.04,667.08 L253.39,667.42 L253.75,667.73 L254.11,668.00 L254.48,668.24 L254.86,668.44 L255.25,668.61 L255.64,668.73 L256.04,668.83 L256.44,668.88 L256.85,668.90 L257.27,668.88 L257.70,668.83 L258.13,668.73 L258.57,668.61 L259.01,668.44 L259.46,668.24 L259.92,668.00 L260.38,667.73 L260.84,667.42 L261.32,667.08 L261.79,666.70 L262.28,666.29 L262.77,665.84 L263.26,665.36 L263.76,664.85 L264.26,664.30 L264.77,663.72 L265.28,663.11 L265.80,662.47 L266.32,661.80 L266.85,661.09 L267.38,660.36 L267.91,659.60 L268.45,658.82 L268.99,658.00 L269.53,657.17 L270.08,656.30 L270.63,655.41 L271.19,654.50 L271.74,653.57 L272.30,652.61 L272.87,651.63 L273.43,650.64 L274.00,649.62 L274.57,648.59 L275.14,647.54 L275.72,646.47 L276.29,645.39 L276.87,644.30 L277.45,643.20 L278.03,642.08 L278.61,640.95 L279.20,639.81 L279.78,638.67 L280.37,637.52 L280.95,636.36 L281.54,635.20 L282.13,634.04 L282.71,632.87 L283.30,631.70" fill="none" stroke="#ff0000" stroke-width="2.6"/><circle cx="279.4" cy="639.2" r="4.6" fill="#ff8000" stroke="#000" stroke-width="1.3"/><line x1="5.6" y1="841.2" x2="180.8" y2="841.2" stroke="#1a1a1a" stroke-width="1.8"/><polygon points="192.8,841.2 172.8,835.7 172.8,846.7" fill="#1a1a1a"/><line x1="88.5" y1="734" x2="88.5" y2="923.3" stroke="#1a1a1a" stroke-width="1.8"/><polygon points="88.5,722 83.0,742 94.0,742" fill="#1a1a1a"/><line x1="88.5" y1="841.2" x2="76.4" y2="849.1" stroke="#999" stroke-width="1.5"/><path d="M88.50,841.20 L90.25,840.03 L92.00,838.86 L93.74,837.70 L95.47,836.54 L97.18,835.38 L98.88,834.23 L100.55,833.09 L102.19,831.95 L103.81,830.82 L105.39,829.70 L106.93,828.60 L108.43,827.51 L109.89,826.43 L111.30,825.36 L112.66,824.31 L113.97,823.28 L115.21,822.26 L116.40,821.27 L117.53,820.29 L118.60,819.33 L119.59,818.40 L120.52,817.49 L121.38,816.60 L122.16,815.73 L122.87,814.90 L123.50,814.08 L124.06,813.30 L124.53,812.54 L124.93,811.81 L125.24,811.10 L125.48,810.43 L125.63,809.79 L125.70,809.18 L125.68,808.60 L125.59,808.05 L125.41,807.54 L125.15,807.06 L124.80,806.61 L124.38,806.20 L123.88,805.82 L123.30,805.48 L122.64,805.17 L121.91,804.90 L121.10,804.66 L120.22,804.46 L119.27,804.29 L118.25,804.17 L117.16,804.07 L116.01,804.02 L114.80,804.00 L113.54,804.02 L112.21,804.07 L110.84,804.17 L109.41,804.29 L107.94,804.46 L106.42,804.66 L104.87,804.90 L103.27,805.17 L101.65,805.48 L100.00,805.82 L98.32,806.20 L96.61,806.61 L94.90,807.06 L93.16,807.54 L91.42,808.05 L89.67,808.60 L87.92,809.18 L86.16,809.79 L84.42,810.43 L82.68,811.10 L80.96,811.81 L79.25,812.54 L77.56,813.30 L75.90,814.08 L74.26,814.90 L72.66,815.73 L71.09,816.60 L69.56,817.49 L68.08,818.40 L66.63,819.33 L65.24,820.29 L63.90,821.27 L62.61,822.26 L61.38,823.28 L60.21,824.31 L59.11,825.36 L58.06,826.43 L57.09,827.51 L56.19,828.60 L55.35,829.70 L54.60,830.82 L53.91,831.95 L53.31,833.09 L52.78,834.23 L52.33,835.38 L51.96,836.54 L51.67,837.70 L51.47,838.86 L51.34,840.03 L51.30,841.20 L51.34,842.37 L51.47,843.54 L51.67,844.70 L51.96,845.86 L52.33,847.02 L52.78,848.17 L53.31,849.31 L53.91,850.45 L54.60,851.58 L55.35,852.70 L56.19,853.80 L57.09,854.89 L58.06,855.97 L59.11,857.04 L60.21,858.09 L61.38,859.12 L62.61,860.14 L63.90,861.13 L65.24,862.11 L66.63,863.07 L68.08,864.00 L69.56,864.91 L71.09,865.80 L72.66,866.67 L74.26,867.50 L75.90,868.32 L77.56,869.10 L79.25,869.86 L80.96,870.59 L82.68,871.30 L84.42,871.97 L86.16,872.61 L87.92,873.22 L89.67,873.80 L91.42,874.35 L93.16,874.86 L94.90,875.34 L96.61,875.79 L98.32,876.20 L100.00,876.58 L101.65,876.92 L103.27,877.23 L104.87,877.50 L106.42,877.74 L107.94,877.94 L109.41,878.11 L110.84,878.23 L112.21,878.33 L113.54,878.38 L114.80,878.40 L116.01,878.38 L117.16,878.33 L118.25,878.23 L119.27,878.11 L120.22,877.94 L121.10,877.74 L121.91,877.50 L122.64,877.23 L123.30,876.92 L123.88,876.58 L124.38,876.20 L124.80,875.79 L125.15,875.34 L125.41,874.86 L125.59,874.35 L125.68,873.80 L125.70,873.22 L125.63,872.61 L125.48,871.97 L125.24,871.30 L124.93,870.59 L124.53,869.86 L124.06,869.10 L123.50,868.32 L122.87,867.50 L122.16,866.67 L121.38,865.80 L120.52,864.91 L119.59,864.00 L118.60,863.07 L117.53,862.11 L116.40,861.13 L115.21,860.14 L113.97,859.12 L112.66,858.09 L111.30,857.04 L109.89,855.97 L108.43,854.89 L106.93,853.80 L105.39,852.70 L103.81,851.58 L102.19,850.45 L100.55,849.31 L98.88,848.17 L97.18,847.02 L95.47,845.86 L93.74,844.70 L92.00,843.54 L90.25,842.37 L88.50,841.20 L86.75,840.03 L85.00,838.86 L83.26,837.70 L81.53,836.54 L79.82,835.38 L78.12,834.23 L76.45,833.09 L74.81,831.95 L73.19,830.82 L71.61,829.70 L70.07,828.60 L68.57,827.51 L67.11,826.43 L65.70,825.36 L64.34,824.31 L63.03,823.28 L61.79,822.26 L60.60,821.27 L59.47,820.29 L58.40,819.33 L57.41,818.40 L56.48,817.49 L55.62,816.60 L54.84,815.73 L54.13,814.90 L53.50,814.08 L52.94,813.30 L52.47,812.54 L52.07,811.81 L51.76,811.10 L51.52,810.43 L51.37,809.79 L51.30,809.18 L51.32,808.60 L51.41,808.05 L51.59,807.54 L51.85,807.06 L52.20,806.61 L52.62,806.20 L53.12,805.82 L53.70,805.48 L54.36,805.17 L55.09,804.90 L55.90,804.66 L56.78,804.46 L57.73,804.29 L58.75,804.17 L59.84,804.07 L60.99,804.02 L62.20,804.00 L63.46,804.02 L64.79,804.07 L66.16,804.17 L67.59,804.29 L69.06,804.46 L70.58,804.66 L72.13,804.90 L73.73,805.17 L75.35,805.48 L77.00,805.82 L78.68,806.20 L80.39,806.61 L82.10,807.06 L83.84,807.54 L85.58,808.05 L87.33,808.60 L89.08,809.18 L90.84,809.79 L92.58,810.43 L94.32,811.10 L96.04,811.81 L97.75,812.54 L99.44,813.30 L101.10,814.08 L102.74,814.90 L104.34,815.73 L105.91,816.60 L107.44,817.49 L108.92,818.40 L110.37,819.33 L111.76,820.29 L113.10,821.27 L114.39,822.26 L115.62,823.28 L116.79,824.31 L117.89,825.36 L118.94,826.43 L119.91,827.51 L120.81,828.60 L121.65,829.70 L122.40,830.82 L123.09,831.95 L123.69,833.09 L124.22,834.23 L124.67,835.38 L125.04,836.54 L125.33,837.70 L125.53,838.86 L125.66,840.03 L125.70,841.20 L125.66,842.37 L125.53,843.54 L125.33,844.70 L125.04,845.86 L124.67,847.02 L124.22,848.17 L123.69,849.31 L123.09,850.45 L122.40,851.58 L121.65,852.70 L120.81,853.80 L119.91,854.89 L118.94,855.97 L117.89,857.04 L116.79,858.09 L115.62,859.12 L114.39,860.14 L113.10,861.13 L111.76,862.11 L110.37,863.07 L108.92,864.00 L107.44,864.91 L105.91,865.80 L104.34,866.67 L102.74,867.50 L101.10,868.32 L99.44,869.10 L97.75,869.86 L96.04,870.59 L94.32,871.30 L92.58,871.97 L90.84,872.61 L89.08,873.22 L87.33,873.80 L85.58,874.35 L83.84,874.86 L82.10,875.34 L80.39,875.79 L78.68,876.20 L77.00,876.58 L75.35,876.92 L73.73,877.23 L72.13,877.50 L70.58,877.74 L69.06,877.94 L67.59,878.11 L66.16,878.23 L64.79,878.33 L63.46,878.38 L62.20,878.40 L60.99,878.38 L59.84,878.33 L58.75,878.23 L57.73,878.11 L56.78,877.94 L55.90,877.74 L55.09,877.50 L54.36,877.23 L53.70,876.92 L53.12,876.58 L52.62,876.20 L52.20,875.79 L51.85,875.34 L51.59,874.86 L51.41,874.35 L51.32,873.80 L51.30,873.22 L51.37,872.61 L51.52,871.97 L51.76,871.30 L52.07,870.59 L52.47,869.86 L52.94,869.10 L53.50,868.32 L54.13,867.50 L54.84,866.67 L55.62,865.80 L56.48,864.91 L57.41,864.00 L58.40,863.07 L59.47,862.11 L60.60,861.13 L61.79,860.14 L63.03,859.12 L64.34,858.09 L65.70,857.04 L67.11,855.97 L68.57,854.89 L70.07,853.80 L71.61,852.70 L73.19,851.58 L74.81,850.45 L76.45,849.31 L78.12,848.17 L79.82,847.02 L81.53,845.86 L83.26,844.70 L85.00,843.54 L86.75,842.37 L88.50,841.20" fill="none" stroke="#00ee00" stroke-width="2.6"/><circle cx="76.4" cy="849.1" r="4.6" fill="#ff8000" stroke="#000" stroke-width="1.3"/></svg>
<div class="t" style="left:103.4px;top:533.2px;font-size:19px;color:#1a1a1a;font-family:'Liberation Sans',sans-serif;">y</div>
<div class="t" style="left:170.1px;top:601.2px;font-size:19px;color:#1a1a1a;font-family:'Liberation Sans',sans-serif;">x</div>
<div class="t" style="left:297.8px;top:533.7px;font-size:19px;color:#1a1a1a;font-family:'Liberation Sans',sans-serif;">z</div>
<div class="t" style="left:365.2px;top:601.2px;font-size:19px;color:#1a1a1a;font-family:'Liberation Sans',sans-serif;">y</div>
<div class="t" style="left:102.7px;top:727.2px;font-size:19px;color:#1a1a1a;font-family:'Liberation Sans',sans-serif;">z</div>
<div class="t" style="left:170.1px;top:811.2px;font-size:19px;color:#1a1a1a;font-family:'Liberation Sans',sans-serif;">x</div>
<div class="a" style="left:87px;top:933px;width:895px;height:32px;background:#fff;border:1.5px solid #a8a8a8;border-top-color:#9a9a9a"></div>
<div class="t" style="left:17.0px;top:942.1px;font-size:18.3px;color:#000;font-family:'Liberation Sans',sans-serif;-webkit-text-stroke:0.35px #000">Entrada:</div>
<svg class="a" style="left:1005px;top:936px" width="28" height="28"><circle cx="13.3" cy="13" r="9" fill="none" stroke="#a8a8a8" stroke-width="1.6"/><text x="9" y="19" font-family="Liberation Sans" font-size="14" font-weight="bold" fill="#a0a0a0">?</text></svg>
<svg class="a" style="left:1072px;top:510px" width="16" height="30"><polygon points="12.5,6.5 4,14.8 12.5,23" fill="#eee" stroke="#333" stroke-width="1.4" stroke-dasharray="2 1"/><line x1="12.5" y1="6" x2="12.5" y2="23" stroke="#333" stroke-width="2"/></svg>
<div class="t" style="left:416.1px;top:188.9px;font-size:23.5px;color:#000;font-family:'Liberation Sans',sans-serif;font-weight:bold;letter-spacing:0.3px">Curvas de Lissajous (Upgrade)</div>
<div class="t" style="left:415.1px;top:218.0px;font-size:16px;color:#333;font-family:'Liberation Sans',sans-serif;"><i>Projeto: Rumo à Evolução</i></div>
<div class="t" style="left:440.9px;top:243.5px;font-size:19.5px;color:#222;font-family:'Liberation Serif',serif;letter-spacing:0.75px"><i>x</i>(<i>θ</i>) = <i>A</i> · <i>sen</i>(<i>a θ</i> + <i>λ<sub style="font-size:11px">a</sub></i>)</div>
<div class="t" style="left:440.9px;top:271.3px;font-size:19.5px;color:#222;font-family:'Liberation Serif',serif;letter-spacing:0.75px"><i>y</i>(<i>θ</i>) = <i>B</i> · <i>sen</i>(<i>b θ</i> + <i>λ<sub style="font-size:11px">b</sub></i>)</div>
<div class="t" style="left:440.9px;top:298.7px;font-size:19.5px;color:#222;font-family:'Liberation Serif',serif;letter-spacing:0.75px;opacity:0.85"><i>z</i>(<i>θ</i>) = <i>C</i> · <i>sen</i>(<i>c θ</i> + <i>λ<sub style="font-size:11px">c</sub></i>)</div>
<div class="t" style="left:650.1px;top:277.8px;font-size:14.5px;color:#222;font-family:'Liberation Serif',serif;">Onde:</div>
<div class="t" style="left:722.5px;top:238.7px;font-size:19.5px;color:#222;font-family:'Liberation Serif',serif;"><i>A</i>, <i>B</i>, <i>C</i></div>
<div class="t" style="left:794.3px;top:244.3px;font-size:15.8px;color:#222;font-family:'Liberation Serif',serif;">= <i>amplitudes nos eixos X, Y e Z</i></div>
<div class="t" style="left:722.5px;top:263.7px;font-size:19.5px;color:#222;font-family:'Liberation Serif',serif;"><i>a</i>, <i>b</i>, <i>c</i></div>
<div class="t" style="left:778.7px;top:269.3px;font-size:15.8px;color:#222;font-family:'Liberation Serif',serif;">= <i>frequências angulares</i></div>
<div class="t" style="left:722.5px;top:289.6px;font-size:19.5px;color:#222;font-family:'Liberation Serif',serif;"><i>λ<sub style="font-size:11px">a</sub></i>, <i>λ<sub style="font-size:11px">b</sub></i>, <i>λ<sub style="font-size:11px">c</sub></i></div>
<div class="t" style="left:803.0px;top:294.8px;font-size:15.8px;color:#222;font-family:'Liberation Serif',serif;">= <i>defasagens</i></div>
<div class="t" style="left:722.5px;top:315.2px;font-size:19.5px;color:#222;font-family:'Liberation Serif',serif;"><i>θ</i></div>
<div class="t" style="left:741.2px;top:320.8px;font-size:15.8px;color:#222;font-family:'Liberation Serif',serif;">= <i>tempo (ou parâmetro que percorre a curva)</i></div>
<svg class="a" style="left:0;top:0" width="1089" height="930"><path d="M427.5 241 Q419.5 242 420 252 L420 270 Q420 279 415.5 281 Q420 283 420 292 L420 310 Q419.5 320 427.5 321" fill="none" stroke="#222" stroke-width="1.6"/><polygon points="507.3,387.0 586.9,405.4 586.9,499.8 526.6,524.5 447.1,506.1 447.1,411.7" fill="#dcaefe"/><line x1="507.3" y1="481.4" x2="507.3" y2="387.0" stroke="#8a1cf0" stroke-width="1.60" stroke-dasharray="2.2 2.8"/><line x1="507.3" y1="481.4" x2="586.9" y2="499.8" stroke="#8a1cf0" stroke-width="1.60" stroke-dasharray="2.2 2.8"/><line x1="507.3" y1="481.4" x2="447.1" y2="506.1" stroke="#8a1cf0" stroke-width="1.60" stroke-dasharray="2.2 2.8"/><line x1="517.0" y1="455.8" x2="477.2" y2="446.6" stroke="#fff4dc" stroke-width="1.80" stroke-dasharray="5.0 4.0"/><line x1="517.0" y1="455.8" x2="547.1" y2="443.4" stroke="#fff4dc" stroke-width="1.80" stroke-dasharray="5.0 4.0"/><line x1="517.0" y1="455.8" x2="517.0" y2="502.9" stroke="#fff4dc" stroke-width="1.80" stroke-dasharray="5.0 4.0"/><path d="M477.15,446.55 L477.47,445.43 L477.78,444.32 L478.09,443.20 L478.41,442.10 L478.72,441.00 L479.04,439.91 L479.35,438.83 L479.66,437.76 L479.97,436.70 L480.28,435.67 L480.59,434.65 L480.89,433.64 L481.20,432.66 L481.50,431.70 L481.80,430.77 L482.10,429.86 L482.40,428.98 L482.69,428.12 L482.98,427.29 L483.27,426.50 L483.56,425.73 L483.84,425.00 L484.12,424.31 L484.40,423.65 L484.68,423.02 L484.95,422.43 L485.21,421.88 L485.48,421.37 L485.74,420.90 L486.00,420.47 L486.25,420.08 L486.50,419.73 L486.74,419.43 L486.98,419.17 L487.22,418.94 L487.45,418.77 L487.68,418.63 L487.90,418.54 L488.12,418.49 L488.33,418.49 L488.54,418.52 L488.75,418.61 L488.94,418.73 L489.14,418.90 L489.33,419.11 L489.51,419.36 L489.69,419.65 L489.86,419.98 L490.02,420.35 L490.18,420.76 L490.34,421.21 L490.49,421.69 L490.63,422.22 L490.77,422.77 L490.90,423.37 L491.02,423.99 L491.14,424.65 L491.26,425.34 L491.36,426.05 L491.46,426.80 L491.56,427.57 L491.65,428.37 L491.73,429.19 L491.80,430.04 L491.87,430.91 L491.93,431.79 L491.99,432.70 L492.04,433.62 L492.08,434.55 L492.12,435.50 L492.15,436.46 L492.17,437.42 L492.19,438.40 L492.20,439.38 L492.20,440.37 L492.20,441.36 L492.19,442.35 L492.17,443.34 L492.15,444.33 L492.12,445.31 L492.08,446.29 L492.04,447.26 L491.99,448.22 L491.93,449.17 L491.87,450.10 L491.80,451.03 L491.73,451.93 L491.65,452.82 L491.56,453.69 L491.46,454.54 L491.36,455.37 L491.26,456.18 L491.14,456.96 L491.02,457.71 L490.90,458.44 L490.77,459.14 L490.63,459.81 L490.49,460.45 L490.34,461.06 L490.18,461.64 L490.02,462.18 L489.86,462.69 L489.69,463.16 L489.51,463.60 L489.33,464.00 L489.14,464.36 L488.94,464.68 L488.75,464.97 L488.54,465.22 L488.33,465.43 L488.12,465.60 L487.90,465.73 L487.68,465.82 L487.45,465.87 L487.22,465.89 L486.98,465.86 L486.74,465.79 L486.50,465.69 L486.25,465.54 L486.00,465.36 L485.74,465.14 L485.48,464.89 L485.21,464.59 L484.95,464.26 L484.68,463.90 L484.40,463.50 L484.12,463.07 L483.84,462.60 L483.56,462.10 L483.27,461.57 L482.98,461.02 L482.69,460.43 L482.40,459.82 L482.10,459.18 L481.80,458.51 L481.50,457.82 L481.20,457.11 L480.89,456.38 L480.59,455.63 L480.28,454.86 L479.97,454.08 L479.66,453.28 L479.35,452.47 L479.04,451.64 L478.72,450.81 L478.41,449.97 L478.09,449.12 L477.78,448.27 L477.47,447.41 L477.15,446.55 L476.83,445.69 L476.52,444.83 L476.21,443.98 L475.89,443.13 L475.58,442.29 L475.26,441.46 L474.95,440.63 L474.64,439.82 L474.33,439.02 L474.02,438.24 L473.71,437.47 L473.41,436.72 L473.10,435.99 L472.80,435.28 L472.50,434.59 L472.20,433.92 L471.90,433.28 L471.61,432.67 L471.32,432.08 L471.03,431.53 L470.74,431.00 L470.46,430.50 L470.18,430.03 L469.90,429.60 L469.63,429.20 L469.35,428.84 L469.09,428.51 L468.82,428.21 L468.56,427.96 L468.30,427.74 L468.05,427.56 L467.80,427.41 L467.56,427.31 L467.32,427.24 L467.08,427.21 L466.85,427.23 L466.62,427.28 L466.40,427.37 L466.18,427.50 L465.97,427.67 L465.76,427.88 L465.55,428.13 L465.36,428.42 L465.16,428.74 L464.97,429.10 L464.79,429.50 L464.61,429.94 L464.44,430.41 L464.28,430.92 L464.12,431.46 L463.96,432.04 L463.81,432.65 L463.67,433.29 L463.53,433.96 L463.40,434.66 L463.28,435.39 L463.16,436.14 L463.04,436.92 L462.94,437.73 L462.84,438.56 L462.74,439.41 L462.65,440.28 L462.57,441.17 L462.50,442.07 L462.43,443.00 L462.37,443.93 L462.31,444.88 L462.26,445.84 L462.22,446.81 L462.18,447.79 L462.15,448.77 L462.13,449.76 L462.11,450.75 L462.10,451.74 L462.10,452.73 L462.10,453.72 L462.11,454.70 L462.13,455.68 L462.15,456.64 L462.18,457.60 L462.22,458.55 L462.26,459.48 L462.31,460.40 L462.37,461.31 L462.43,462.19 L462.50,463.06 L462.57,463.91 L462.65,464.73 L462.74,465.53 L462.84,466.30 L462.94,467.05 L463.04,467.76 L463.16,468.45 L463.28,469.11 L463.40,469.73 L463.53,470.33 L463.67,470.88 L463.81,471.41 L463.96,471.89 L464.12,472.34 L464.28,472.75 L464.44,473.12 L464.61,473.45 L464.79,473.74 L464.97,473.99 L465.16,474.20 L465.36,474.37 L465.55,474.49 L465.76,474.58 L465.97,474.61 L466.18,474.61 L466.40,474.56 L466.62,474.47 L466.85,474.33 L467.08,474.16 L467.32,473.93 L467.56,473.67 L467.80,473.37 L468.05,473.02 L468.30,472.63 L468.56,472.20 L468.82,471.73 L469.09,471.22 L469.35,470.67 L469.63,470.08 L469.90,469.45 L470.18,468.79 L470.46,468.10 L470.74,467.37 L471.03,466.60 L471.32,465.81 L471.61,464.98 L471.90,464.12 L472.20,463.24 L472.50,462.33 L472.80,461.40 L473.10,460.44 L473.41,459.46 L473.71,458.45 L474.02,457.43 L474.33,456.40 L474.64,455.34 L474.95,454.27 L475.26,453.19 L475.58,452.10 L475.89,451.00 L476.21,449.90 L476.52,448.78 L476.83,447.67 L477.15,446.55" fill="none" stroke="#ff0000" stroke-width="2.40"/><path d="M547.05,443.39 L548.30,442.69 L549.54,441.99 L550.78,441.29 L552.00,440.60 L553.20,439.90 L554.38,439.21 L555.52,438.53 L556.64,437.84 L557.71,437.17 L558.75,436.49 L559.73,435.83 L560.67,435.17 L561.56,434.52 L562.38,433.87 L563.15,433.24 L563.85,432.61 L564.49,432.00 L565.06,431.40 L565.55,430.81 L565.98,430.23 L566.32,429.66 L566.60,429.11 L566.79,428.57 L566.91,428.05 L566.95,427.55 L566.91,427.07 L566.79,426.60 L566.60,426.15 L566.32,425.73 L565.98,425.32 L565.55,424.94 L565.06,424.58 L564.49,424.24 L563.85,423.93 L563.15,423.64 L562.38,423.38 L561.56,423.15 L560.67,422.94 L559.73,422.77 L558.75,422.62 L557.71,422.51 L556.64,422.42 L555.52,422.37 L554.38,422.35 L553.20,422.37 L552.00,422.41 L550.78,422.50 L549.54,422.61 L548.30,422.76 L547.05,422.95 L545.80,423.18 L544.56,423.43 L543.32,423.73 L542.10,424.06 L540.90,424.43 L539.72,424.84 L538.58,425.28 L537.46,425.75 L536.39,426.27 L535.35,426.81 L534.37,427.40 L533.43,428.02 L532.54,428.67 L531.72,429.35 L530.95,430.07 L530.25,430.82 L529.61,431.60 L529.04,432.41 L528.55,433.24 L528.12,434.11 L527.78,435.00 L527.50,435.91 L527.31,436.85 L527.19,437.81 L527.15,438.79 L527.19,439.79 L527.31,440.80 L527.50,441.83 L527.78,442.87 L528.12,443.92 L528.55,444.98 L529.04,446.05 L529.61,447.12 L530.25,448.19 L530.95,449.27 L531.72,450.34 L532.54,451.41 L533.43,452.47 L534.37,453.52 L535.35,454.56 L536.39,455.58 L537.46,456.59 L538.58,457.59 L539.72,458.56 L540.90,459.51 L542.10,460.43 L543.32,461.33 L544.56,462.19 L545.80,463.03 L547.05,463.83 L548.30,464.59 L549.54,465.32 L550.78,466.01 L552.00,466.65 L553.20,467.26 L554.38,467.81 L555.52,468.33 L556.64,468.79 L557.71,469.20 L558.75,469.56 L559.73,469.88 L560.67,470.13 L561.56,470.34 L562.38,470.49 L563.15,470.58 L563.85,470.62 L564.49,470.60 L565.06,470.53 L565.55,470.40 L565.98,470.21 L566.32,469.97 L566.60,469.66 L566.79,469.31 L566.91,468.90 L566.95,468.43 L566.91,467.91 L566.79,467.33 L566.60,466.71 L566.32,466.03 L565.98,465.30 L565.55,464.53 L565.06,463.71 L564.49,462.84 L563.85,461.93 L563.15,460.98 L562.38,459.99 L561.56,458.97 L560.67,457.91 L559.73,456.82 L558.75,455.69 L557.71,454.54 L556.64,453.37 L555.52,452.17 L554.38,450.95 L553.20,449.72 L552.00,448.47 L550.78,447.21 L549.54,445.94 L548.30,444.67 L547.05,443.39 L545.80,442.11 L544.56,440.84 L543.32,439.57 L542.10,438.31 L540.90,437.06 L539.72,435.83 L538.58,434.61 L537.46,433.41 L536.39,432.24 L535.35,431.09 L534.37,429.96 L533.43,428.87 L532.54,427.81 L531.72,426.79 L530.95,425.80 L530.25,424.85 L529.61,423.94 L529.04,423.07 L528.55,422.25 L528.12,421.48 L527.78,420.75 L527.50,420.07 L527.31,419.45 L527.19,418.87 L527.15,418.35 L527.19,417.88 L527.31,417.47 L527.50,417.12 L527.78,416.81 L528.12,416.57 L528.55,416.38 L529.04,416.25 L529.61,416.18 L530.25,416.16 L530.95,416.20 L531.72,416.29 L532.54,416.44 L533.43,416.65 L534.37,416.90 L535.35,417.22 L536.39,417.58 L537.46,417.99 L538.58,418.45 L539.72,418.97 L540.90,419.52 L542.10,420.13 L543.32,420.77 L544.56,421.46 L545.80,422.19 L547.05,422.95 L548.30,423.75 L549.54,424.59 L550.78,425.45 L552.00,426.35 L553.20,427.27 L554.38,428.22 L555.52,429.19 L556.64,430.19 L557.71,431.20 L558.75,432.22 L559.73,433.26 L560.67,434.31 L561.56,435.37 L562.38,436.44 L563.15,437.51 L563.85,438.59 L564.49,439.66 L565.06,440.73 L565.55,441.80 L565.98,442.86 L566.32,443.91 L566.60,444.95 L566.79,445.98 L566.91,446.99 L566.95,447.99 L566.91,448.97 L566.79,449.93 L566.60,450.87 L566.32,451.78 L565.98,452.67 L565.55,453.54 L565.06,454.37 L564.49,455.18 L563.85,455.96 L563.15,456.71 L562.38,457.43 L561.56,458.11 L560.67,458.76 L559.73,459.38 L558.75,459.97 L557.71,460.51 L556.64,461.03 L555.52,461.50 L554.38,461.94 L553.20,462.35 L552.00,462.72 L550.78,463.05 L549.54,463.35 L548.30,463.60 L547.05,463.83 L545.80,464.02 L544.56,464.17 L543.32,464.28 L542.10,464.37 L540.90,464.41 L539.72,464.43 L538.58,464.41 L537.46,464.36 L536.39,464.27 L535.35,464.16 L534.37,464.01 L533.43,463.84 L532.54,463.63 L531.72,463.40 L530.95,463.14 L530.25,462.85 L529.61,462.54 L529.04,462.20 L528.55,461.84 L528.12,461.46 L527.78,461.05 L527.50,460.63 L527.31,460.18 L527.19,459.71 L527.15,459.23 L527.19,458.73 L527.31,458.21 L527.50,457.67 L527.78,457.12 L528.12,456.55 L528.55,455.97 L529.04,455.38 L529.61,454.78 L530.25,454.17 L530.95,453.54 L531.72,452.91 L532.54,452.26 L533.43,451.61 L534.37,450.95 L535.35,450.29 L536.39,449.61 L537.46,448.94 L538.58,448.25 L539.72,447.57 L540.90,446.88 L542.10,446.18 L543.32,445.49 L544.56,444.79 L545.80,444.09 L547.05,443.39" fill="none" stroke="#00ee00" stroke-width="2.40"/><path d="M516.95,502.95 L518.51,503.11 L520.07,503.27 L521.62,503.42 L523.16,503.58 L524.67,503.73 L526.16,503.87 L527.62,504.01 L529.05,504.14 L530.43,504.26 L531.78,504.37 L533.07,504.47 L534.32,504.56 L535.50,504.64 L536.63,504.71 L537.70,504.76 L538.70,504.80 L539.63,504.83 L540.50,504.84 L541.28,504.83 L542.00,504.81 L542.63,504.77 L543.19,504.72 L543.67,504.65 L544.06,504.56 L544.38,504.46 L544.61,504.34 L544.76,504.20 L544.83,504.05 L544.81,503.88 L544.72,503.69 L544.55,503.49 L544.30,503.27 L543.98,503.04 L543.59,502.80 L543.12,502.54 L542.59,502.26 L541.99,501.98 L541.33,501.68 L540.61,501.38 L539.83,501.06 L539.01,500.74 L538.13,500.40 L537.22,500.07 L536.26,499.72 L535.28,499.37 L534.26,499.02 L533.21,498.66 L532.15,498.31 L531.07,497.95 L529.98,497.60 L528.89,497.25 L527.79,496.90 L526.70,496.55 L525.62,496.21 L524.55,495.88 L523.50,495.56 L522.47,495.25 L521.47,494.94 L520.50,494.65 L519.57,494.37 L518.67,494.10 L517.82,493.85 L517.02,493.61 L516.27,493.39 L515.57,493.18 L514.93,493.00 L514.35,492.83 L513.83,492.67 L513.38,492.54 L512.99,492.43 L512.67,492.34 L512.42,492.26 L512.24,492.21 L512.14,492.18 L512.10,492.17 L512.14,492.18 L512.24,492.21 L512.42,492.26 L512.67,492.34 L512.99,492.43 L513.38,492.54 L513.83,492.67 L514.35,492.83 L514.93,493.00 L515.57,493.18 L516.27,493.39 L517.02,493.61 L517.82,493.85 L518.67,494.10 L519.57,494.37 L520.50,494.65 L521.47,494.94 L522.47,495.25 L523.50,495.56 L524.55,495.88 L525.62,496.21 L526.70,496.55 L527.79,496.90 L528.89,497.25 L529.98,497.60 L531.07,497.95 L532.15,498.31 L533.21,498.66 L534.26,499.02 L535.28,499.37 L536.26,499.72 L537.22,500.07 L538.13,500.40 L539.01,500.74 L539.83,501.06 L540.61,501.38 L541.33,501.68 L541.99,501.98 L542.59,502.26 L543.12,502.54 L543.59,502.80 L543.98,503.04 L544.30,503.27 L544.55,503.49 L544.72,503.69 L544.81,503.88 L544.83,504.05 L544.76,504.20 L544.61,504.34 L544.38,504.46 L544.06,504.56 L543.67,504.65 L543.19,504.72 L542.63,504.77 L542.00,504.81 L541.28,504.83 L540.50,504.84 L539.63,504.83 L538.70,504.80 L537.70,504.76 L536.63,504.71 L535.50,504.64 L534.32,504.56 L533.07,504.47 L531.78,504.37 L530.43,504.26 L529.05,504.14 L527.62,504.01 L526.16,503.87 L524.67,503.73 L523.16,503.58 L521.62,503.42 L520.07,503.27 L518.51,503.11 L516.95,502.95 L515.39,502.79 L513.83,502.63 L512.28,502.48 L510.74,502.32 L509.23,502.17 L507.74,502.03 L506.28,501.89 L504.85,501.76 L503.47,501.64 L502.12,501.53 L500.83,501.43 L499.58,501.34 L498.40,501.26 L497.27,501.19 L496.20,501.14 L495.20,501.10 L494.27,501.07 L493.40,501.06 L492.62,501.07 L491.90,501.09 L491.27,501.13 L490.71,501.18 L490.23,501.25 L489.84,501.34 L489.53,501.44 L489.29,501.56 L489.14,501.70 L489.07,501.85 L489.09,502.02 L489.18,502.21 L489.35,502.41 L489.60,502.63 L489.92,502.86 L490.31,503.10 L490.78,503.36 L491.31,503.64 L491.91,503.92 L492.57,504.22 L493.29,504.52 L494.07,504.84 L494.89,505.16 L495.77,505.50 L496.68,505.83 L497.64,506.18 L498.62,506.53 L499.64,506.88 L500.69,507.24 L501.75,507.59 L502.83,507.95 L503.92,508.30 L505.01,508.65 L506.11,509.00 L507.20,509.35 L508.28,509.69 L509.35,510.02 L510.40,510.34 L511.43,510.65 L512.43,510.96 L513.40,511.25 L514.33,511.53 L515.23,511.80 L516.08,512.05 L516.88,512.29 L517.63,512.51 L518.33,512.72 L518.97,512.90 L519.55,513.07 L520.07,513.23 L520.52,513.36 L520.91,513.47 L521.23,513.56 L521.48,513.64 L521.66,513.69 L521.76,513.72 L521.80,513.73 L521.76,513.72 L521.66,513.69 L521.48,513.64 L521.23,513.56 L520.91,513.47 L520.52,513.36 L520.07,513.23 L519.55,513.07 L518.97,512.90 L518.33,512.72 L517.63,512.51 L516.88,512.29 L516.08,512.05 L515.23,511.80 L514.33,511.53 L513.40,511.25 L512.43,510.96 L511.43,510.65 L510.40,510.34 L509.35,510.02 L508.28,509.69 L507.20,509.35 L506.11,509.00 L505.01,508.65 L503.92,508.30 L502.83,507.95 L501.75,507.59 L500.69,507.24 L499.64,506.88 L498.62,506.53 L497.64,506.18 L496.68,505.83 L495.77,505.50 L494.89,505.16 L494.07,504.84 L493.29,504.52 L492.57,504.22 L491.91,503.92 L491.31,503.64 L490.78,503.36 L490.31,503.10 L489.92,502.86 L489.60,502.63 L489.35,502.41 L489.18,502.21 L489.09,502.02 L489.07,501.85 L489.14,501.70 L489.29,501.56 L489.53,501.44 L489.84,501.34 L490.23,501.25 L490.71,501.18 L491.27,501.13 L491.90,501.09 L492.62,501.07 L493.40,501.06 L494.27,501.07 L495.20,501.10 L496.20,501.14 L497.27,501.19 L498.40,501.26 L499.58,501.34 L500.83,501.43 L502.12,501.53 L503.47,501.64 L504.85,501.76 L506.28,501.89 L507.74,502.03 L509.23,502.17 L510.74,502.32 L512.28,502.48 L513.83,502.63 L515.39,502.79 L516.95,502.95" fill="none" stroke="#0000ff" stroke-width="2.40"/><path d="M516.95,455.75 L517.73,455.34 L518.51,454.92 L519.30,454.51 L520.07,454.09 L520.85,453.68 L521.62,453.27 L522.39,452.85 L523.16,452.44 L523.92,452.03 L524.67,451.62 L525.42,451.21 L526.16,450.80 L526.90,450.39 L527.62,449.98 L528.34,449.58 L529.05,449.17 L529.75,448.77 L530.43,448.37 L531.11,447.97 L531.78,447.57 L532.43,447.17 L533.07,446.78 L533.70,446.38 L534.32,445.99 L534.92,445.60 L535.50,445.22 L536.08,444.83 L536.63,444.45 L537.17,444.07 L537.70,443.69 L538.21,443.31 L538.70,442.94 L539.18,442.57 L539.63,442.21 L540.07,441.84 L540.50,441.48 L540.90,441.12 L541.28,440.77 L541.65,440.42 L542.00,440.07 L542.32,439.73 L542.63,439.39 L542.92,439.05 L543.19,438.72 L543.44,438.39 L543.67,438.07 L543.87,437.75 L544.06,437.44 L544.23,437.13 L544.38,436.82 L544.50,436.52 L544.61,436.23 L544.69,435.93 L544.76,435.65 L544.80,435.37 L544.83,435.09 L544.83,434.82 L544.81,434.56 L544.78,434.30 L544.72,434.05 L544.65,433.80 L544.55,433.56 L544.44,433.33 L544.30,433.10 L544.15,432.88 L543.98,432.66 L543.79,432.45 L543.59,432.25 L543.36,432.05 L543.12,431.87 L542.86,431.68 L542.59,431.51 L542.29,431.34 L541.99,431.18 L541.66,431.03 L541.33,430.89 L540.97,430.75 L540.61,430.62 L540.23,430.50 L539.83,430.39 L539.42,430.29 L539.01,430.19 L538.58,430.10 L538.13,430.02 L537.68,429.95 L537.22,429.89 L536.75,429.84 L536.26,429.79 L535.77,429.75 L535.28,429.73 L534.77,429.71 L534.26,429.70 L533.74,429.70 L533.21,429.71 L532.69,429.73 L532.15,429.75 L531.61,429.79 L531.07,429.84 L530.53,429.89 L529.98,429.96 L529.44,430.03 L528.89,430.12 L528.34,430.21 L527.79,430.32 L527.25,430.43 L526.70,430.55 L526.16,430.69 L525.62,430.83 L525.08,430.98 L524.55,431.14 L524.02,431.32 L523.50,431.50 L522.98,431.69 L522.47,431.89 L521.97,432.10 L521.47,432.32 L520.98,432.55 L520.50,432.79 L520.03,433.04 L519.57,433.30 L519.11,433.56 L518.67,433.84 L518.24,434.13 L517.82,434.42 L517.42,434.73 L517.02,435.04 L516.64,435.36 L516.27,435.70 L515.91,436.04 L515.57,436.38 L515.24,436.74 L514.93,437.11 L514.63,437.48 L514.35,437.86 L514.08,438.25 L513.83,438.65 L513.60,439.06 L513.38,439.47 L513.18,439.89 L512.99,440.32 L512.82,440.76 L512.67,441.20 L512.54,441.65 L512.42,442.11 L512.32,442.57 L512.24,443.04 L512.18,443.51 L512.14,443.99 L512.11,444.48 L512.10,444.97 L512.11,445.47 L512.14,445.97 L512.18,446.48 L512.24,446.99 L512.32,447.50 L512.42,448.02 L512.54,448.54 L512.67,449.07 L512.82,449.60 L512.99,450.14 L513.18,450.67 L513.38,451.21 L513.60,451.75 L513.83,452.30 L514.08,452.84 L514.35,453.39 L514.63,453.93 L514.93,454.48 L515.24,455.03 L515.57,455.58 L515.91,456.13 L516.27,456.68 L516.64,457.23 L517.02,457.78 L517.42,458.33 L517.82,458.87 L518.24,459.42 L518.67,459.96 L519.11,460.50 L519.57,461.04 L520.03,461.58 L520.50,462.11 L520.98,462.64 L521.47,463.16 L521.97,463.68 L522.47,464.20 L522.98,464.71 L523.50,465.22 L524.02,465.72 L524.55,466.22 L525.08,466.71 L525.62,467.20 L526.16,467.68 L526.70,468.15 L527.25,468.62 L527.79,469.08 L528.34,469.53 L528.89,469.97 L529.44,470.41 L529.98,470.84 L530.53,471.26 L531.07,471.67 L531.61,472.07 L532.15,472.46 L532.69,472.85 L533.21,473.22 L533.74,473.58 L534.26,473.94 L534.77,474.28 L535.28,474.62 L535.77,474.94 L536.26,475.25 L536.75,475.55 L537.22,475.84 L537.68,476.12 L538.13,476.39 L538.58,476.64 L539.01,476.88 L539.42,477.11 L539.83,477.33 L540.23,477.54 L540.61,477.73 L540.97,477.91 L541.33,478.08 L541.66,478.23 L541.99,478.37 L542.29,478.50 L542.59,478.62 L542.86,478.72 L543.12,478.81 L543.36,478.88 L543.59,478.94 L543.79,478.99 L543.98,479.02 L544.15,479.04 L544.30,479.05 L544.44,479.04 L544.55,479.02 L544.65,478.99 L544.72,478.94 L544.78,478.87 L544.81,478.80 L544.83,478.71 L544.83,478.60 L544.80,478.49 L544.76,478.36 L544.69,478.21 L544.61,478.05 L544.50,477.88 L544.38,477.70 L544.23,477.50 L544.06,477.29 L543.87,477.07 L543.67,476.83 L543.44,476.58 L543.19,476.32 L542.92,476.04 L542.63,475.76 L542.32,475.46 L542.00,475.15 L541.65,474.83 L541.28,474.49 L540.90,474.15 L540.50,473.79 L540.07,473.43 L539.63,473.05 L539.18,472.66 L538.70,472.26 L538.21,471.85 L537.70,471.43 L537.17,471.01 L536.63,470.57 L536.08,470.12 L535.50,469.67 L534.92,469.20 L534.32,468.73 L533.70,468.25 L533.07,467.76 L532.43,467.27 L531.78,466.77 L531.11,466.26 L530.43,465.74 L529.75,465.22 L529.05,464.70 L528.34,464.16 L527.62,463.63 L526.90,463.08 L526.16,462.54 L525.42,461.99 L524.67,461.43 L523.92,460.87 L523.16,460.31 L522.39,459.75 L521.62,459.18 L520.85,458.61 L520.07,458.04 L519.30,457.47 L518.51,456.90 L517.73,456.32 L516.95,455.75" fill="none" stroke="#800080" stroke-width="3.20"/><circle cx="477.2" cy="446.6" r="2.2" fill="#ff8000"/><circle cx="547.1" cy="443.4" r="2.2" fill="#ff8000"/><circle cx="517.0" cy="502.9" r="2.2" fill="#ff8000"/><circle cx="517.0" cy="455.8" r="2.2" fill="#ff8000"/><polygon points="942.0,350.4 1061.9,377.1 1061.9,519.8 971.9,555.7 852.0,529.0 852.0,386.3" fill="#dcaefe"/><line x1="942.0" y1="493.1" x2="942.0" y2="350.4" stroke="#8a1cf0" stroke-width="2.00" stroke-dasharray="2.8 3.5"/><line x1="942.0" y1="493.1" x2="1061.9" y2="519.8" stroke="#8a1cf0" stroke-width="2.00" stroke-dasharray="2.8 3.5"/><line x1="942.0" y1="493.1" x2="852.0" y2="529.0" stroke="#8a1cf0" stroke-width="2.00" stroke-dasharray="2.8 3.5"/><line x1="957.0" y1="453.1" x2="897.0" y2="439.7" stroke="#fff4dc" stroke-width="2.25" stroke-dasharray="6.2 5.0"/><line x1="957.0" y1="453.1" x2="1002.0" y2="435.1" stroke="#fff4dc" stroke-width="2.25" stroke-dasharray="6.2 5.0"/><line x1="957.0" y1="453.1" x2="957.0" y2="524.4" stroke="#fff4dc" stroke-width="2.25" stroke-dasharray="6.2 5.0"/><path d="M896.99,439.70 L897.46,438.02 L897.93,436.34 L898.40,434.67 L898.87,433.00 L899.34,431.34 L899.81,429.70 L900.28,428.08 L900.74,426.47 L901.21,424.89 L901.67,423.32 L902.13,421.79 L902.59,420.28 L903.04,418.81 L903.49,417.36 L903.94,415.96 L904.39,414.59 L904.83,413.26 L905.27,411.97 L905.71,410.73 L906.14,409.54 L906.57,408.39 L906.99,407.29 L907.41,406.25 L907.83,405.25 L908.24,404.32 L908.65,403.44 L909.05,402.61 L909.44,401.85 L909.83,401.14 L910.22,400.50 L910.59,399.91 L910.97,399.39 L911.33,398.94 L911.69,398.54 L912.05,398.21 L912.39,397.95 L912.73,397.75 L913.07,397.62 L913.39,397.55 L913.71,397.55 L914.02,397.61 L914.33,397.74 L914.62,397.93 L914.91,398.19 L915.19,398.51 L915.47,398.89 L915.73,399.34 L915.99,399.84 L916.24,400.41 L916.48,401.03 L916.71,401.71 L916.93,402.45 L917.14,403.24 L917.35,404.09 L917.54,404.99 L917.73,405.94 L917.91,406.93 L918.08,407.98 L918.24,409.06 L918.39,410.20 L918.53,411.37 L918.66,412.58 L918.78,413.82 L918.90,415.10 L919.00,416.41 L919.09,417.75 L919.17,419.12 L919.25,420.51 L919.31,421.92 L919.37,423.36 L919.41,424.81 L919.45,426.27 L919.47,427.75 L919.49,429.23 L919.49,430.72 L919.49,432.22 L919.47,433.72 L919.45,435.21 L919.41,436.71 L919.37,438.19 L919.31,439.67 L919.25,441.13 L919.17,442.58 L919.09,444.02 L919.00,445.43 L918.90,446.82 L918.78,448.19 L918.66,449.54 L918.53,450.85 L918.39,452.13 L918.24,453.38 L918.08,454.60 L917.91,455.78 L917.73,456.92 L917.54,458.01 L917.35,459.07 L917.14,460.08 L916.93,461.04 L916.71,461.96 L916.48,462.82 L916.24,463.64 L915.99,464.40 L915.73,465.11 L915.47,465.77 L915.19,466.37 L914.91,466.91 L914.62,467.40 L914.33,467.83 L914.02,468.20 L913.71,468.51 L913.39,468.76 L913.07,468.95 L912.73,469.09 L912.39,469.16 L912.05,469.17 L911.69,469.13 L911.33,469.02 L910.97,468.86 L910.59,468.63 L910.22,468.35 L909.83,468.02 L909.44,467.62 L909.05,467.17 L908.65,466.67 L908.24,466.11 L907.83,465.50 L907.41,464.84 L906.99,464.13 L906.57,463.37 L906.14,462.56 L905.71,461.71 L905.27,460.82 L904.83,459.88 L904.39,458.91 L903.94,457.90 L903.49,456.85 L903.04,455.77 L902.59,454.65 L902.13,453.51 L901.67,452.34 L901.21,451.15 L900.74,449.94 L900.28,448.70 L899.81,447.45 L899.34,446.18 L898.87,444.90 L898.40,443.61 L897.93,442.31 L897.46,441.01 L896.99,439.70 L896.52,438.39 L896.05,437.09 L895.58,435.79 L895.11,434.50 L894.64,433.22 L894.17,431.95 L893.70,430.70 L893.24,429.46 L892.77,428.25 L892.31,427.06 L891.85,425.89 L891.39,424.75 L890.94,423.63 L890.49,422.55 L890.04,421.50 L889.59,420.49 L889.15,419.52 L888.71,418.58 L888.27,417.69 L887.84,416.84 L887.41,416.03 L886.99,415.27 L886.57,414.56 L886.15,413.90 L885.74,413.29 L885.33,412.73 L884.93,412.23 L884.54,411.78 L884.15,411.38 L883.76,411.05 L883.39,410.77 L883.01,410.54 L882.65,410.38 L882.29,410.27 L881.93,410.23 L881.59,410.24 L881.25,410.31 L880.91,410.45 L880.59,410.64 L880.27,410.89 L879.96,411.20 L879.65,411.57 L879.36,412.00 L879.07,412.49 L878.79,413.03 L878.51,413.63 L878.25,414.29 L877.99,415.00 L877.74,415.76 L877.50,416.58 L877.27,417.44 L877.05,418.36 L876.84,419.32 L876.63,420.33 L876.44,421.39 L876.25,422.48 L876.07,423.62 L875.90,424.80 L875.74,426.02 L875.59,427.27 L875.45,428.55 L875.32,429.86 L875.20,431.21 L875.08,432.58 L874.98,433.97 L874.89,435.38 L874.81,436.82 L874.73,438.27 L874.67,439.73 L874.61,441.21 L874.57,442.69 L874.53,444.19 L874.51,445.68 L874.49,447.18 L874.49,448.68 L874.49,450.17 L874.51,451.65 L874.53,453.13 L874.57,454.59 L874.61,456.04 L874.67,457.48 L874.73,458.89 L874.81,460.28 L874.89,461.65 L874.98,462.99 L875.08,464.30 L875.20,465.58 L875.32,466.82 L875.45,468.03 L875.59,469.20 L875.74,470.34 L875.90,471.42 L876.07,472.47 L876.25,473.46 L876.44,474.41 L876.63,475.31 L876.84,476.16 L877.05,476.95 L877.27,477.69 L877.50,478.37 L877.74,478.99 L877.99,479.56 L878.25,480.06 L878.51,480.51 L878.79,480.89 L879.07,481.21 L879.36,481.47 L879.65,481.66 L879.96,481.79 L880.27,481.85 L880.59,481.85 L880.91,481.78 L881.25,481.65 L881.59,481.45 L881.93,481.19 L882.29,480.86 L882.65,480.46 L883.01,480.01 L883.39,479.49 L883.76,478.90 L884.15,478.26 L884.54,477.55 L884.93,476.79 L885.33,475.96 L885.74,475.08 L886.15,474.15 L886.57,473.15 L886.99,472.11 L887.41,471.01 L887.84,469.86 L888.27,468.67 L888.71,467.43 L889.15,466.14 L889.59,464.81 L890.04,463.44 L890.49,462.04 L890.94,460.59 L891.39,459.12 L891.85,457.61 L892.31,456.08 L892.77,454.51 L893.24,452.93 L893.70,451.32 L894.17,449.70 L894.64,448.06 L895.11,446.40 L895.58,444.73 L896.05,443.06 L896.52,441.38 L896.99,439.70" fill="none" stroke="#ff0000" stroke-width="3.00"/><path d="M1001.95,435.10 L1003.83,434.03 L1005.71,432.95 L1007.57,431.88 L1009.41,430.81 L1011.21,429.75 L1012.99,428.69 L1014.71,427.63 L1016.39,426.58 L1018.01,425.54 L1019.57,424.51 L1021.06,423.49 L1022.47,422.48 L1023.80,421.49 L1025.05,420.50 L1026.20,419.53 L1027.26,418.58 L1028.22,417.64 L1029.08,416.72 L1029.82,415.82 L1030.46,414.94 L1030.99,414.08 L1031.40,413.24 L1031.69,412.43 L1031.87,411.64 L1031.93,410.88 L1031.87,410.15 L1031.69,409.44 L1031.40,408.77 L1030.99,408.13 L1030.46,407.52 L1029.82,406.95 L1029.08,406.41 L1028.22,405.91 L1027.26,405.44 L1026.20,405.02 L1025.05,404.64 L1023.80,404.30 L1022.47,404.00 L1021.06,403.75 L1019.57,403.54 L1018.01,403.38 L1016.39,403.27 L1014.71,403.21 L1012.99,403.20 L1011.21,403.23 L1009.41,403.32 L1007.57,403.46 L1005.71,403.66 L1003.83,403.90 L1001.95,404.20 L1000.07,404.56 L998.19,404.97 L996.33,405.43 L994.49,405.95 L992.69,406.53 L990.91,407.15 L989.19,407.84 L987.51,408.57 L985.89,409.36 L984.33,410.21 L982.84,411.10 L981.43,412.05 L980.10,413.05 L978.85,414.09 L977.70,415.19 L976.64,416.33 L975.68,417.52 L974.82,418.75 L974.08,420.02 L973.44,421.33 L972.91,422.69 L972.50,424.07 L972.21,425.49 L972.03,426.94 L971.97,428.43 L972.03,429.93 L972.21,431.46 L972.50,433.01 L972.91,434.58 L973.44,436.17 L974.08,437.77 L974.82,439.37 L975.68,440.98 L976.64,442.60 L977.70,444.21 L978.85,445.82 L980.10,447.42 L981.43,449.01 L982.84,450.59 L984.33,452.15 L985.89,453.68 L987.51,455.20 L989.19,456.68 L990.91,458.13 L992.69,459.55 L994.49,460.93 L996.33,462.27 L998.19,463.56 L1000.07,464.80 L1001.95,466.00 L1003.83,467.13 L1005.71,468.22 L1007.57,469.24 L1009.41,470.20 L1011.21,471.09 L1012.99,471.92 L1014.71,472.67 L1016.39,473.36 L1018.01,473.97 L1019.57,474.50 L1021.06,474.96 L1022.47,475.34 L1023.80,475.63 L1025.05,475.85 L1026.20,475.98 L1027.26,476.03 L1028.22,475.99 L1029.08,475.87 L1029.82,475.67 L1030.46,475.38 L1030.99,475.00 L1031.40,474.54 L1031.69,474.00 L1031.87,473.38 L1031.93,472.67 L1031.87,471.88 L1031.69,471.02 L1031.40,470.07 L1030.99,469.05 L1030.46,467.96 L1029.82,466.80 L1029.08,465.56 L1028.22,464.26 L1027.26,462.90 L1026.20,461.47 L1025.05,459.99 L1023.80,458.45 L1022.47,456.86 L1021.06,455.22 L1019.57,453.53 L1018.01,451.81 L1016.39,450.05 L1014.71,448.25 L1012.99,446.43 L1011.21,444.58 L1009.41,442.71 L1007.57,440.82 L1005.71,438.92 L1003.83,437.01 L1001.95,435.10 L1000.07,433.19 L998.19,431.28 L996.33,429.38 L994.49,427.49 L992.69,425.62 L990.91,423.77 L989.19,421.95 L987.51,420.15 L985.89,418.39 L984.33,416.67 L982.84,414.98 L981.43,413.34 L980.10,411.75 L978.85,410.21 L977.70,408.73 L976.64,407.30 L975.68,405.94 L974.82,404.64 L974.08,403.40 L973.44,402.24 L972.91,401.15 L972.50,400.13 L972.21,399.18 L972.03,398.32 L971.97,397.53 L972.03,396.82 L972.21,396.20 L972.50,395.66 L972.91,395.20 L973.44,394.82 L974.08,394.53 L974.82,394.33 L975.68,394.21 L976.64,394.17 L977.70,394.22 L978.85,394.35 L980.10,394.57 L981.43,394.86 L982.84,395.24 L984.33,395.70 L985.89,396.23 L987.51,396.84 L989.19,397.53 L990.91,398.28 L992.69,399.11 L994.49,400.00 L996.33,400.96 L998.19,401.98 L1000.07,403.07 L1001.95,404.20 L1003.83,405.40 L1005.71,406.64 L1007.57,407.93 L1009.41,409.27 L1011.21,410.65 L1012.99,412.07 L1014.71,413.52 L1016.39,415.00 L1018.01,416.52 L1019.57,418.05 L1021.06,419.61 L1022.47,421.19 L1023.80,422.78 L1025.05,424.38 L1026.20,425.99 L1027.26,427.60 L1028.22,429.22 L1029.08,430.83 L1029.82,432.43 L1030.46,434.03 L1030.99,435.62 L1031.40,437.19 L1031.69,438.74 L1031.87,440.27 L1031.93,441.78 L1031.87,443.26 L1031.69,444.71 L1031.40,446.13 L1030.99,447.51 L1030.46,448.87 L1029.82,450.18 L1029.08,451.45 L1028.22,452.68 L1027.26,453.87 L1026.20,455.01 L1025.05,456.11 L1023.80,457.15 L1022.47,458.15 L1021.06,459.10 L1019.57,459.99 L1018.01,460.84 L1016.39,461.63 L1014.71,462.36 L1012.99,463.05 L1011.21,463.67 L1009.41,464.25 L1007.57,464.77 L1005.71,465.23 L1003.83,465.64 L1001.95,466.00 L1000.07,466.30 L998.19,466.54 L996.33,466.74 L994.49,466.88 L992.69,466.97 L990.91,467.00 L989.19,466.99 L987.51,466.93 L985.89,466.82 L984.33,466.66 L982.84,466.45 L981.43,466.20 L980.10,465.90 L978.85,465.56 L977.70,465.18 L976.64,464.76 L975.68,464.29 L974.82,463.79 L974.08,463.25 L973.44,462.68 L972.91,462.07 L972.50,461.43 L972.21,460.76 L972.03,460.05 L971.97,459.32 L972.03,458.56 L972.21,457.77 L972.50,456.96 L972.91,456.12 L973.44,455.26 L974.08,454.38 L974.82,453.48 L975.68,452.56 L976.64,451.62 L977.70,450.67 L978.85,449.70 L980.10,448.71 L981.43,447.72 L982.84,446.71 L984.33,445.69 L985.89,444.66 L987.51,443.62 L989.19,442.57 L990.91,441.51 L992.69,440.45 L994.49,439.39 L996.33,438.32 L998.19,437.25 L1000.07,436.17 L1001.95,435.10" fill="none" stroke="#00ee00" stroke-width="3.00"/><path d="M956.95,524.40 L959.30,524.63 L961.65,524.86 L963.98,525.09 L966.29,525.31 L968.57,525.52 L970.81,525.73 L973.00,525.93 L975.15,526.12 L977.23,526.29 L979.25,526.46 L981.20,526.61 L983.07,526.74 L984.86,526.85 L986.55,526.95 L988.16,527.03 L989.66,527.08 L991.06,527.12 L992.36,527.14 L993.54,527.13 L994.61,527.10 L995.57,527.04 L996.40,526.97 L997.12,526.86 L997.71,526.74 L998.18,526.59 L998.53,526.41 L998.75,526.21 L998.85,525.99 L998.83,525.74 L998.69,525.47 L998.43,525.18 L998.05,524.86 L997.56,524.53 L996.96,524.17 L996.26,523.79 L995.45,523.40 L994.55,522.99 L993.55,522.56 L992.46,522.11 L991.29,521.65 L990.05,521.18 L988.73,520.70 L987.35,520.21 L985.91,519.71 L984.42,519.20 L982.88,518.69 L981.31,518.18 L979.70,517.66 L978.08,517.14 L976.44,516.63 L974.78,516.12 L973.13,515.61 L971.49,515.11 L969.85,514.62 L968.24,514.14 L966.66,513.67 L965.11,513.21 L963.60,512.77 L962.13,512.35 L960.73,511.94 L959.38,511.55 L958.10,511.19 L956.89,510.84 L955.76,510.52 L954.70,510.22 L953.74,509.95 L952.86,509.70 L952.08,509.48 L951.40,509.29 L950.81,509.13 L950.33,508.99 L949.96,508.89 L949.69,508.81 L949.52,508.77 L949.47,508.75 L949.52,508.77 L949.69,508.81 L949.96,508.89 L950.33,508.99 L950.81,509.13 L951.40,509.29 L952.08,509.48 L952.86,509.70 L953.74,509.95 L954.70,510.22 L955.76,510.52 L956.89,510.84 L958.10,511.19 L959.38,511.55 L960.73,511.94 L962.13,512.35 L963.60,512.77 L965.11,513.21 L966.66,513.67 L968.24,514.14 L969.85,514.62 L971.49,515.11 L973.13,515.61 L974.78,516.12 L976.44,516.63 L978.08,517.14 L979.70,517.66 L981.31,518.18 L982.88,518.69 L984.42,519.20 L985.91,519.71 L987.35,520.21 L988.73,520.70 L990.05,521.18 L991.29,521.65 L992.46,522.11 L993.55,522.56 L994.55,522.99 L995.45,523.40 L996.26,523.79 L996.96,524.17 L997.56,524.53 L998.05,524.86 L998.43,525.18 L998.69,525.47 L998.83,525.74 L998.85,525.99 L998.75,526.21 L998.53,526.41 L998.18,526.59 L997.71,526.74 L997.12,526.86 L996.40,526.97 L995.57,527.04 L994.61,527.10 L993.54,527.13 L992.36,527.14 L991.06,527.12 L989.66,527.08 L988.16,527.03 L986.55,526.95 L984.86,526.85 L983.07,526.74 L981.20,526.61 L979.25,526.46 L977.23,526.29 L975.15,526.12 L973.00,525.93 L970.81,525.73 L968.57,525.52 L966.29,525.31 L963.98,525.09 L961.65,524.86 L959.30,524.63 L956.95,524.40 L954.60,524.17 L952.25,523.94 L949.92,523.71 L947.61,523.49 L945.33,523.28 L943.09,523.07 L940.90,522.87 L938.75,522.68 L936.67,522.51 L934.65,522.34 L932.70,522.19 L930.83,522.06 L929.04,521.95 L927.35,521.85 L925.74,521.77 L924.24,521.72 L922.84,521.68 L921.54,521.66 L920.36,521.67 L919.29,521.70 L918.33,521.76 L917.50,521.83 L916.78,521.94 L916.19,522.06 L915.72,522.21 L915.37,522.39 L915.15,522.59 L915.05,522.81 L915.07,523.06 L915.21,523.33 L915.47,523.62 L915.85,523.94 L916.34,524.27 L916.94,524.63 L917.64,525.01 L918.45,525.40 L919.35,525.81 L920.35,526.24 L921.44,526.69 L922.61,527.15 L923.85,527.62 L925.17,528.10 L926.55,528.59 L927.99,529.09 L929.48,529.60 L931.02,530.11 L932.59,530.62 L934.20,531.14 L935.82,531.66 L937.46,532.17 L939.12,532.68 L940.77,533.19 L942.41,533.69 L944.05,534.18 L945.66,534.66 L947.24,535.13 L948.79,535.59 L950.30,536.03 L951.77,536.45 L953.17,536.86 L954.52,537.25 L955.80,537.61 L957.01,537.96 L958.14,538.28 L959.20,538.58 L960.16,538.85 L961.04,539.10 L961.82,539.32 L962.50,539.51 L963.09,539.67 L963.57,539.81 L963.94,539.91 L964.21,539.99 L964.38,540.03 L964.43,540.05 L964.38,540.03 L964.21,539.99 L963.94,539.91 L963.57,539.81 L963.09,539.67 L962.50,539.51 L961.82,539.32 L961.04,539.10 L960.16,538.85 L959.20,538.58 L958.14,538.28 L957.01,537.96 L955.80,537.61 L954.52,537.25 L953.17,536.86 L951.77,536.45 L950.30,536.03 L948.79,535.59 L947.24,535.13 L945.66,534.66 L944.05,534.18 L942.41,533.69 L940.77,533.19 L939.12,532.68 L937.46,532.17 L935.82,531.66 L934.20,531.14 L932.59,530.62 L931.02,530.11 L929.48,529.60 L927.99,529.09 L926.55,528.59 L925.17,528.10 L923.85,527.62 L922.61,527.15 L921.44,526.69 L920.35,526.24 L919.35,525.81 L918.45,525.40 L917.64,525.01 L916.94,524.63 L916.34,524.27 L915.85,523.94 L915.47,523.62 L915.21,523.33 L915.07,523.06 L915.05,522.81 L915.15,522.59 L915.37,522.39 L915.72,522.21 L916.19,522.06 L916.78,521.94 L917.50,521.83 L918.33,521.76 L919.29,521.70 L920.36,521.67 L921.54,521.66 L922.84,521.68 L924.24,521.72 L925.74,521.77 L927.35,521.85 L929.04,521.95 L930.83,522.06 L932.70,522.19 L934.65,522.34 L936.67,522.51 L938.75,522.68 L940.90,522.87 L943.09,523.07 L945.33,523.28 L947.61,523.49 L949.92,523.71 L952.25,523.94 L954.60,524.17 L956.95,524.40" fill="none" stroke="#0000ff" stroke-width="3.00"/><line x1="927.0" y1="446.4" x2="957.0" y2="453.1" stroke="#fff4dc" stroke-width="2.2"/><line x1="927.0" y1="446.4" x2="957.0" y2="453.1" stroke="#1a1a1a" stroke-width="2.2" stroke-dasharray="4 4"/><line x1="979.5" y1="444.1" x2="957.0" y2="453.1" stroke="#fff4dc" stroke-width="2.2"/><line x1="979.5" y1="444.1" x2="957.0" y2="453.1" stroke="#1a1a1a" stroke-width="2.2" stroke-dasharray="4 4"/><line x1="957.0" y1="492.3" x2="957.0" y2="453.1" stroke="#fff4dc" stroke-width="2.6"/><line x1="957.0" y1="492.3" x2="957.0" y2="453.1" stroke="#1a1a1a" stroke-width="2.6" stroke-dasharray="5 4"/><circle cx="927.0" cy="446.4" r="2.2" fill="#1a1a1a"/><circle cx="979.5" cy="444.1" r="2.2" fill="#1a1a1a"/><line x1="957.0" y1="453.1" x2="957.0" y2="415.7" stroke="#1a1a1a" stroke-width="2.4"/><polygon points="957.0,406.7 960.8,415.7 953.2,415.7" fill="#1a1a1a"/><line x1="957.0" y1="453.1" x2="987.1" y2="459.8" stroke="#1a1a1a" stroke-width="2.4"/><polygon points="995.9,461.7 986.3,463.5 988.0,456.1" fill="#1a1a1a"/><line x1="957.0" y1="453.1" x2="936.1" y2="461.4" stroke="#1a1a1a" stroke-width="2.4"/><polygon points="927.7,464.7 934.7,457.9 937.5,464.9" fill="#1a1a1a"/><path d="M956.95,453.05 L959.30,451.79 L961.65,450.53 L963.98,449.27 L966.29,448.01 L968.57,446.76 L970.81,445.51 L973.00,444.27 L975.15,443.04 L977.23,441.81 L979.25,440.60 L981.20,439.39 L983.07,438.20 L984.86,437.02 L986.55,435.86 L988.16,434.71 L989.66,433.57 L991.06,432.46 L992.36,431.36 L993.54,430.29 L994.61,429.24 L995.57,428.21 L996.40,427.20 L997.12,426.22 L997.71,425.27 L998.18,424.34 L998.53,423.45 L998.75,422.58 L998.85,421.75 L998.83,420.96 L998.69,420.19 L998.43,419.47 L998.05,418.78 L997.56,418.14 L996.96,417.53 L996.26,416.97 L995.45,416.44 L994.55,415.97 L993.55,415.54 L992.46,415.16 L991.29,414.82 L990.05,414.54 L988.73,414.31 L987.35,414.13 L985.91,414.00 L984.42,413.92 L982.88,413.90 L981.31,413.94 L979.70,414.03 L978.08,414.18 L976.44,414.38 L974.78,414.64 L973.13,414.97 L971.49,415.34 L969.85,415.78 L968.24,416.28 L966.66,416.83 L965.11,417.44 L963.60,418.11 L962.13,418.84 L960.73,419.62 L959.38,420.46 L958.10,421.36 L956.89,422.30 L955.76,423.31 L954.70,424.36 L953.74,425.47 L952.86,426.62 L952.08,427.82 L951.40,429.07 L950.81,430.36 L950.33,431.69 L949.96,433.06 L949.69,434.48 L949.52,435.92 L949.47,437.40 L949.52,438.91 L949.69,440.45 L949.96,442.01 L950.33,443.59 L950.81,445.19 L951.40,446.81 L952.08,448.44 L952.86,450.08 L953.74,451.73 L954.70,453.38 L955.76,455.03 L956.89,456.68 L958.10,458.32 L959.38,459.95 L960.73,461.56 L962.13,463.16 L963.60,464.73 L965.11,466.28 L966.66,467.81 L968.24,469.30 L969.85,470.76 L971.49,472.18 L973.13,473.55 L974.78,474.89 L976.44,476.17 L978.08,477.41 L979.70,478.59 L981.31,479.71 L982.88,480.78 L984.42,481.78 L985.91,482.72 L987.35,483.59 L988.73,484.39 L990.05,485.12 L991.29,485.78 L992.46,486.37 L993.55,486.87 L994.55,487.30 L995.45,487.65 L996.26,487.92 L996.96,488.11 L997.56,488.22 L998.05,488.25 L998.43,488.19 L998.69,488.05 L998.83,487.83 L998.85,487.53 L998.75,487.14 L998.53,486.68 L998.18,486.13 L997.71,485.51 L997.12,484.81 L996.40,484.03 L995.57,483.18 L994.61,482.26 L993.54,481.27 L992.36,480.21 L991.06,479.08 L989.66,477.89 L988.16,476.65 L986.55,475.34 L984.86,473.98 L983.07,472.57 L981.20,471.12 L979.25,469.62 L977.23,468.08 L975.15,466.50 L973.00,464.89 L970.81,463.25 L968.57,461.59 L966.29,459.91 L963.98,458.21 L961.65,456.50 L959.30,454.78 L956.95,453.05 L954.60,451.32 L952.25,449.60 L949.92,447.89 L947.61,446.19 L945.33,444.51 L943.09,442.85 L940.90,441.21 L938.75,439.60 L936.67,438.02 L934.65,436.48 L932.70,434.98 L930.83,433.53 L929.04,432.12 L927.35,430.76 L925.74,429.45 L924.24,428.21 L922.84,427.02 L921.54,425.89 L920.36,424.83 L919.29,423.84 L918.33,422.92 L917.50,422.07 L916.78,421.29 L916.19,420.59 L915.72,419.97 L915.37,419.42 L915.15,418.96 L915.05,418.57 L915.07,418.27 L915.21,418.05 L915.47,417.91 L915.85,417.85 L916.34,417.88 L916.94,417.99 L917.64,418.18 L918.45,418.45 L919.35,418.80 L920.35,419.23 L921.44,419.73 L922.61,420.32 L923.85,420.98 L925.17,421.71 L926.55,422.51 L927.99,423.38 L929.48,424.32 L931.02,425.32 L932.59,426.39 L934.20,427.51 L935.82,428.69 L937.46,429.93 L939.12,431.21 L940.77,432.55 L942.41,433.92 L944.05,435.34 L945.66,436.80 L947.24,438.29 L948.79,439.82 L950.30,441.37 L951.77,442.94 L953.17,444.54 L954.52,446.15 L955.80,447.78 L957.01,449.42 L958.14,451.07 L959.20,452.72 L960.16,454.37 L961.04,456.02 L961.82,457.66 L962.50,459.29 L963.09,460.91 L963.57,462.51 L963.94,464.09 L964.21,465.65 L964.38,467.19 L964.43,468.70 L964.38,470.18 L964.21,471.62 L963.94,473.04 L963.57,474.41 L963.09,475.74 L962.50,477.03 L961.82,478.28 L961.04,479.48 L960.16,480.63 L959.20,481.74 L958.14,482.79 L957.01,483.80 L955.80,484.74 L954.52,485.64 L953.17,486.48 L951.77,487.26 L950.30,487.99 L948.79,488.66 L947.24,489.27 L945.66,489.82 L944.05,490.32 L942.41,490.76 L940.77,491.13 L939.12,491.46 L937.46,491.72 L935.82,491.92 L934.20,492.07 L932.59,492.16 L931.02,492.20 L929.48,492.18 L927.99,492.10 L926.55,491.97 L925.17,491.79 L923.85,491.56 L922.61,491.28 L921.44,490.94 L920.35,490.56 L919.35,490.13 L918.45,489.66 L917.64,489.13 L916.94,488.57 L916.34,487.96 L915.85,487.32 L915.47,486.63 L915.21,485.91 L915.07,485.14 L915.05,484.35 L915.15,483.52 L915.37,482.65 L915.72,481.76 L916.19,480.83 L916.78,479.88 L917.50,478.90 L918.33,477.89 L919.29,476.86 L920.36,475.81 L921.54,474.74 L922.84,473.64 L924.24,472.53 L925.74,471.39 L927.35,470.24 L929.04,469.08 L930.83,467.90 L932.70,466.71 L934.65,465.50 L936.67,464.29 L938.75,463.06 L940.90,461.83 L943.09,460.59 L945.33,459.34 L947.61,458.09 L949.92,456.83 L952.25,455.57 L954.60,454.31 L956.95,453.05" fill="none" stroke="#800080" stroke-width="4.00"/><circle cx="897.0" cy="439.7" r="2.3" fill="#ff8000"/><circle cx="1002.0" cy="435.1" r="2.3" fill="#ff8000"/><circle cx="957.0" cy="524.4" r="2.3" fill="#ff8000"/><circle cx="957.0" cy="453.1" r="2.3" fill="#ff8000"/><polygon points="725.5,528.7 805.7,546.1 805.7,642.1 746.4,665.6 666.2,648.2 666.2,552.2" fill="#dcaefe"/><line x1="725.5" y1="624.7" x2="725.5" y2="528.7" stroke="#8a1cf0" stroke-width="1.60" stroke-dasharray="2.2 2.8"/><line x1="725.5" y1="624.7" x2="805.7" y2="642.1" stroke="#8a1cf0" stroke-width="1.60" stroke-dasharray="2.2 2.8"/><line x1="725.5" y1="624.7" x2="666.2" y2="648.2" stroke="#8a1cf0" stroke-width="1.60" stroke-dasharray="2.2 2.8"/><line x1="728.2" y1="601.4" x2="694.3" y2="594.1" stroke="#fff4dc" stroke-width="1.80" stroke-dasharray="5.0 4.0"/><line x1="728.2" y1="601.4" x2="759.4" y2="589.1" stroke="#fff4dc" stroke-width="1.80" stroke-dasharray="5.0 4.0"/><line x1="728.2" y1="601.4" x2="728.2" y2="644.4" stroke="#fff4dc" stroke-width="1.80" stroke-dasharray="5.0 4.0"/><path d="M695.85,588.45 L696.16,587.32 L696.47,586.20 L696.78,585.07 L697.09,583.96 L697.40,582.85 L697.71,581.75 L698.02,580.65 L698.32,579.58 L698.63,578.51 L698.93,577.47 L699.24,576.44 L699.54,575.43 L699.84,574.44 L700.13,573.47 L700.43,572.53 L700.73,571.61 L701.02,570.72 L701.31,569.86 L701.59,569.03 L701.88,568.22 L702.16,567.46 L702.44,566.72 L702.72,566.02 L702.99,565.36 L703.26,564.73 L703.53,564.14 L703.79,563.59 L704.05,563.07 L704.31,562.60 L704.56,562.17 L704.81,561.78 L705.06,561.43 L705.30,561.13 L705.54,560.87 L705.77,560.65 L706.00,560.48 L706.22,560.34 L706.44,560.26 L706.66,560.21 L706.87,560.22 L707.07,560.26 L707.27,560.35 L707.47,560.48 L707.66,560.65 L707.84,560.87 L708.02,561.13 L708.20,561.43 L708.37,561.77 L708.53,562.16 L708.69,562.58 L708.84,563.04 L708.99,563.54 L709.13,564.07 L709.26,564.64 L709.39,565.25 L709.52,565.89 L709.63,566.56 L709.75,567.26 L709.85,567.99 L709.95,568.76 L710.04,569.54 L710.13,570.36 L710.21,571.20 L710.28,572.06 L710.35,572.94 L710.41,573.84 L710.47,574.76 L710.52,575.70 L710.56,576.65 L710.59,577.62 L710.62,578.59 L710.65,579.58 L710.66,580.57 L710.67,581.57 L710.68,582.57 L710.67,583.58 L710.66,584.59 L710.65,585.59 L710.62,586.60 L710.59,587.60 L710.56,588.59 L710.52,589.57 L710.47,590.55 L710.41,591.51 L710.35,592.47 L710.28,593.40 L710.21,594.32 L710.13,595.22 L710.04,596.11 L709.95,596.97 L709.85,597.81 L709.75,598.63 L709.63,599.42 L709.52,600.18 L709.39,600.92 L709.26,601.63 L709.13,602.30 L708.99,602.95 L708.84,603.57 L708.69,604.15 L708.53,604.69 L708.37,605.21 L708.20,605.68 L708.02,606.12 L707.84,606.52 L707.66,606.89 L707.47,607.21 L707.27,607.50 L707.07,607.75 L706.87,607.95 L706.66,608.12 L706.44,608.25 L706.22,608.33 L706.00,608.38 L705.77,608.39 L705.54,608.35 L705.30,608.28 L705.06,608.17 L704.81,608.01 L704.56,607.82 L704.31,607.59 L704.05,607.32 L703.79,607.02 L703.53,606.68 L703.26,606.30 L702.99,605.88 L702.72,605.44 L702.44,604.95 L702.16,604.44 L701.88,603.90 L701.59,603.32 L701.31,602.72 L701.02,602.08 L700.73,601.43 L700.43,600.74 L700.13,600.03 L699.84,599.30 L699.54,598.55 L699.24,597.78 L698.93,596.99 L698.63,596.18 L698.32,595.36 L698.02,594.53 L697.71,593.68 L697.40,592.83 L697.09,591.96 L696.78,591.09 L696.47,590.21 L696.16,589.33 L695.85,588.45 L695.54,587.57 L695.23,586.69 L694.92,585.81 L694.61,584.94 L694.30,584.07 L693.99,583.22 L693.68,582.37 L693.38,581.54 L693.07,580.72 L692.77,579.91 L692.46,579.12 L692.16,578.35 L691.86,577.60 L691.57,576.87 L691.27,576.16 L690.97,575.47 L690.68,574.82 L690.39,574.18 L690.11,573.58 L689.82,573.00 L689.54,572.46 L689.26,571.95 L688.98,571.46 L688.71,571.02 L688.44,570.60 L688.17,570.22 L687.91,569.88 L687.65,569.58 L687.39,569.31 L687.14,569.08 L686.89,568.89 L686.64,568.73 L686.40,568.62 L686.16,568.55 L685.93,568.51 L685.70,568.52 L685.48,568.57 L685.26,568.65 L685.04,568.78 L684.83,568.95 L684.63,569.15 L684.43,569.40 L684.23,569.69 L684.04,570.01 L683.86,570.38 L683.68,570.78 L683.50,571.22 L683.33,571.69 L683.17,572.21 L683.01,572.75 L682.86,573.33 L682.71,573.95 L682.57,574.60 L682.44,575.27 L682.31,575.98 L682.18,576.72 L682.07,577.48 L681.95,578.27 L681.85,579.09 L681.75,579.93 L681.66,580.79 L681.57,581.68 L681.49,582.58 L681.42,583.50 L681.35,584.43 L681.29,585.39 L681.23,586.35 L681.18,587.33 L681.14,588.31 L681.11,589.30 L681.08,590.30 L681.05,591.31 L681.04,592.31 L681.03,593.32 L681.02,594.32 L681.03,595.33 L681.04,596.33 L681.05,597.32 L681.08,598.31 L681.11,599.28 L681.14,600.25 L681.18,601.20 L681.23,602.14 L681.29,603.06 L681.35,603.96 L681.42,604.84 L681.49,605.70 L681.57,606.54 L681.66,607.36 L681.75,608.14 L681.85,608.91 L681.95,609.64 L682.07,610.34 L682.18,611.01 L682.31,611.65 L682.44,612.26 L682.57,612.83 L682.71,613.36 L682.86,613.86 L683.01,614.32 L683.17,614.74 L683.33,615.13 L683.50,615.47 L683.68,615.77 L683.86,616.03 L684.04,616.25 L684.23,616.42 L684.43,616.55 L684.63,616.64 L684.83,616.68 L685.04,616.69 L685.26,616.64 L685.48,616.56 L685.70,616.42 L685.93,616.25 L686.16,616.03 L686.40,615.77 L686.64,615.47 L686.89,615.12 L687.14,614.73 L687.39,614.30 L687.65,613.83 L687.91,613.31 L688.17,612.76 L688.44,612.17 L688.71,611.54 L688.98,610.88 L689.26,610.18 L689.54,609.44 L689.82,608.68 L690.11,607.87 L690.39,607.04 L690.68,606.18 L690.97,605.29 L691.27,604.37 L691.57,603.43 L691.86,602.46 L692.16,601.47 L692.46,600.46 L692.77,599.43 L693.07,598.39 L693.38,597.32 L693.68,596.25 L693.99,595.15 L694.30,594.05 L694.61,592.94 L694.92,591.83 L695.23,590.70 L695.54,589.58 L695.85,588.45" fill="none" stroke="#ff0000" stroke-width="2.40"/><path d="M765.60,585.40 L766.86,584.67 L768.11,583.94 L769.36,583.21 L770.59,582.48 L771.80,581.75 L772.98,581.03 L774.14,580.32 L775.26,579.60 L776.34,578.90 L777.39,578.20 L778.38,577.50 L779.33,576.82 L780.22,576.14 L781.05,575.47 L781.82,574.81 L782.53,574.17 L783.17,573.53 L783.74,572.91 L784.24,572.30 L784.67,571.70 L785.02,571.12 L785.29,570.56 L785.49,570.01 L785.61,569.48 L785.65,568.97 L785.61,568.47 L785.49,568.00 L785.29,567.55 L785.02,567.12 L784.67,566.71 L784.24,566.33 L783.74,565.97 L783.17,565.64 L782.53,565.33 L781.82,565.05 L781.05,564.80 L780.22,564.58 L779.33,564.38 L778.38,564.22 L777.39,564.09 L776.34,563.99 L775.26,563.92 L774.14,563.89 L772.98,563.89 L771.80,563.92 L770.59,563.99 L769.36,564.09 L768.11,564.23 L766.86,564.40 L765.60,564.62 L764.34,564.86 L763.09,565.15 L761.84,565.47 L760.61,565.83 L759.40,566.22 L758.22,566.65 L757.06,567.12 L755.94,567.62 L754.86,568.16 L753.81,568.74 L752.82,569.35 L751.87,569.99 L750.98,570.67 L750.15,571.38 L749.38,572.12 L748.67,572.89 L748.03,573.70 L747.46,574.53 L746.96,575.39 L746.53,576.27 L746.18,577.18 L745.91,578.12 L745.71,579.08 L745.59,580.05 L745.55,581.05 L745.59,582.06 L745.71,583.09 L745.91,584.14 L746.18,585.19 L746.53,586.25 L746.96,587.32 L747.46,588.40 L748.03,589.48 L748.67,590.56 L749.38,591.64 L750.15,592.72 L750.98,593.79 L751.87,594.85 L752.82,595.91 L753.81,596.95 L754.86,597.98 L755.94,598.99 L757.06,599.98 L758.22,600.95 L759.40,601.89 L760.61,602.81 L761.84,603.70 L763.09,604.56 L764.34,605.39 L765.60,606.18 L766.86,606.94 L768.11,607.66 L769.36,608.34 L770.59,608.98 L771.80,609.57 L772.98,610.12 L774.14,610.62 L775.26,611.07 L776.34,611.47 L777.39,611.83 L778.38,612.13 L779.33,612.37 L780.22,612.57 L781.05,612.70 L781.82,612.79 L782.53,612.82 L783.17,612.79 L783.74,612.70 L784.24,612.56 L784.67,612.36 L785.02,612.11 L785.29,611.80 L785.49,611.43 L785.61,611.01 L785.65,610.53 L785.61,610.01 L785.49,609.42 L785.29,608.79 L785.02,608.11 L784.67,607.37 L784.24,606.59 L783.74,605.77 L783.17,604.89 L782.53,603.98 L781.82,603.03 L781.05,602.03 L780.22,601.00 L779.33,599.94 L778.38,598.84 L777.39,597.72 L776.34,596.57 L775.26,595.39 L774.14,594.19 L772.98,592.97 L771.80,591.73 L770.59,590.48 L769.36,589.22 L768.11,587.95 L766.86,586.68 L765.60,585.40 L764.34,584.12 L763.09,582.85 L761.84,581.58 L760.61,580.32 L759.40,579.07 L758.22,577.83 L757.06,576.61 L755.94,575.41 L754.86,574.23 L753.81,573.08 L752.82,571.96 L751.87,570.86 L750.98,569.80 L750.15,568.77 L749.38,567.77 L748.67,566.82 L748.03,565.91 L747.46,565.03 L746.96,564.21 L746.53,563.43 L746.18,562.69 L745.91,562.01 L745.71,561.38 L745.59,560.79 L745.55,560.27 L745.59,559.79 L745.71,559.37 L745.91,559.00 L746.18,558.69 L746.53,558.44 L746.96,558.24 L747.46,558.10 L748.03,558.01 L748.67,557.98 L749.38,558.01 L750.15,558.10 L750.98,558.23 L751.87,558.43 L752.82,558.67 L753.81,558.97 L754.86,559.33 L755.94,559.73 L757.06,560.18 L758.22,560.68 L759.40,561.23 L760.61,561.82 L761.84,562.46 L763.09,563.14 L764.34,563.86 L765.60,564.62 L766.86,565.41 L768.11,566.24 L769.36,567.10 L770.59,567.99 L771.80,568.91 L772.98,569.85 L774.14,570.82 L775.26,571.81 L776.34,572.82 L777.39,573.85 L778.38,574.89 L779.33,575.95 L780.22,577.01 L781.05,578.08 L781.82,579.16 L782.53,580.24 L783.17,581.32 L783.74,582.40 L784.24,583.48 L784.67,584.55 L785.02,585.61 L785.29,586.66 L785.49,587.71 L785.61,588.74 L785.65,589.75 L785.61,590.75 L785.49,591.72 L785.29,592.68 L785.02,593.62 L784.67,594.53 L784.24,595.41 L783.74,596.27 L783.17,597.10 L782.53,597.91 L781.82,598.68 L781.05,599.42 L780.22,600.13 L779.33,600.81 L778.38,601.45 L777.39,602.06 L776.34,602.64 L775.26,603.18 L774.14,603.68 L772.98,604.15 L771.80,604.58 L770.59,604.97 L769.36,605.33 L768.11,605.65 L766.86,605.94 L765.60,606.18 L764.34,606.40 L763.09,606.57 L761.84,606.71 L760.61,606.81 L759.40,606.88 L758.22,606.91 L757.06,606.91 L755.94,606.88 L754.86,606.81 L753.81,606.71 L752.82,606.58 L751.87,606.42 L750.98,606.22 L750.15,606.00 L749.38,605.75 L748.67,605.47 L748.03,605.16 L747.46,604.83 L746.96,604.47 L746.53,604.09 L746.18,603.68 L745.91,603.25 L745.71,602.80 L745.59,602.33 L745.55,601.83 L745.59,601.32 L745.71,600.79 L745.91,600.24 L746.18,599.68 L746.53,599.10 L746.96,598.50 L747.46,597.89 L748.03,597.27 L748.67,596.63 L749.38,595.99 L750.15,595.33 L750.98,594.66 L751.87,593.98 L752.82,593.30 L753.81,592.60 L754.86,591.90 L755.94,591.20 L757.06,590.48 L758.22,589.77 L759.40,589.05 L760.61,588.32 L761.84,587.59 L763.09,586.86 L764.34,586.13 L765.60,585.40" fill="none" stroke="#00ee00" stroke-width="2.40"/><path d="M735.95,645.15 L737.52,645.30 L739.08,645.45 L740.64,645.60 L742.18,645.74 L743.70,645.88 L745.19,646.02 L746.65,646.14 L748.08,646.27 L749.47,646.38 L750.82,646.49 L752.12,646.58 L753.36,646.67 L754.55,646.74 L755.68,646.80 L756.75,646.85 L757.75,646.89 L758.69,646.91 L759.55,646.92 L760.34,646.92 L761.05,646.90 L761.68,646.86 L762.24,646.81 L762.71,646.74 L763.10,646.66 L763.41,646.56 L763.64,646.45 L763.79,646.32 L763.85,646.17 L763.83,646.01 L763.73,645.83 L763.56,645.64 L763.30,645.44 L762.97,645.22 L762.57,644.98 L762.09,644.74 L761.55,644.48 L760.94,644.21 L760.27,643.93 L759.54,643.64 L758.75,643.34 L757.92,643.03 L757.03,642.72 L756.11,642.40 L755.14,642.07 L754.14,641.74 L753.11,641.41 L752.06,641.07 L750.98,640.73 L749.89,640.40 L748.79,640.06 L747.68,639.73 L746.58,639.40 L745.47,639.07 L744.38,638.75 L743.30,638.44 L742.24,638.13 L741.20,637.84 L740.19,637.55 L739.21,637.27 L738.26,637.01 L737.36,636.75 L736.50,636.51 L735.69,636.29 L734.93,636.08 L734.23,635.88 L733.58,635.71 L733.00,635.55 L732.47,635.40 L732.02,635.28 L731.63,635.17 L731.30,635.08 L731.05,635.01 L730.87,634.96 L730.76,634.93 L730.73,634.92 L730.76,634.93 L730.87,634.96 L731.05,635.01 L731.30,635.08 L731.63,635.17 L732.02,635.28 L732.47,635.40 L733.00,635.55 L733.58,635.71 L734.23,635.88 L734.93,636.08 L735.69,636.29 L736.50,636.51 L737.36,636.75 L738.26,637.01 L739.21,637.27 L740.19,637.55 L741.20,637.84 L742.24,638.13 L743.30,638.44 L744.38,638.75 L745.47,639.07 L746.58,639.40 L747.68,639.73 L748.79,640.06 L749.89,640.40 L750.98,640.73 L752.06,641.07 L753.11,641.41 L754.14,641.74 L755.14,642.07 L756.11,642.40 L757.03,642.72 L757.92,643.03 L758.75,643.34 L759.54,643.64 L760.27,643.93 L760.94,644.21 L761.55,644.48 L762.09,644.74 L762.57,644.98 L762.97,645.22 L763.30,645.44 L763.56,645.64 L763.73,645.83 L763.83,646.01 L763.85,646.17 L763.79,646.32 L763.64,646.45 L763.41,646.56 L763.10,646.66 L762.71,646.74 L762.24,646.81 L761.68,646.86 L761.05,646.90 L760.34,646.92 L759.55,646.92 L758.69,646.91 L757.75,646.89 L756.75,646.85 L755.68,646.80 L754.55,646.74 L753.36,646.67 L752.12,646.58 L750.82,646.49 L749.47,646.38 L748.08,646.27 L746.65,646.14 L745.19,646.02 L743.70,645.88 L742.18,645.74 L740.64,645.60 L739.08,645.45 L737.52,645.30 L735.95,645.15 L734.38,645.00 L732.82,644.85 L731.26,644.70 L729.72,644.56 L728.20,644.42 L726.71,644.28 L725.25,644.16 L723.82,644.03 L722.43,643.92 L721.08,643.81 L719.78,643.72 L718.54,643.63 L717.35,643.56 L716.22,643.50 L715.15,643.45 L714.15,643.41 L713.21,643.39 L712.35,643.38 L711.56,643.38 L710.85,643.40 L710.22,643.44 L709.66,643.49 L709.19,643.56 L708.80,643.64 L708.49,643.74 L708.26,643.85 L708.11,643.98 L708.05,644.13 L708.07,644.29 L708.17,644.47 L708.34,644.66 L708.60,644.86 L708.93,645.08 L709.33,645.32 L709.81,645.56 L710.35,645.82 L710.96,646.09 L711.63,646.37 L712.36,646.66 L713.15,646.96 L713.98,647.27 L714.87,647.58 L715.79,647.90 L716.76,648.23 L717.76,648.56 L718.79,648.89 L719.84,649.23 L720.92,649.57 L722.01,649.90 L723.11,650.24 L724.22,650.57 L725.32,650.90 L726.43,651.23 L727.52,651.55 L728.60,651.86 L729.66,652.17 L730.70,652.46 L731.71,652.75 L732.69,653.03 L733.64,653.29 L734.54,653.55 L735.40,653.79 L736.21,654.01 L736.97,654.22 L737.67,654.42 L738.32,654.59 L738.90,654.75 L739.43,654.90 L739.88,655.02 L740.27,655.13 L740.60,655.22 L740.85,655.29 L741.03,655.34 L741.14,655.37 L741.17,655.38 L741.14,655.37 L741.03,655.34 L740.85,655.29 L740.60,655.22 L740.27,655.13 L739.88,655.02 L739.43,654.90 L738.90,654.75 L738.32,654.59 L737.67,654.42 L736.97,654.22 L736.21,654.01 L735.40,653.79 L734.54,653.55 L733.64,653.29 L732.69,653.03 L731.71,652.75 L730.70,652.46 L729.66,652.17 L728.60,651.86 L727.52,651.55 L726.43,651.23 L725.32,650.90 L724.22,650.57 L723.11,650.24 L722.01,649.90 L720.92,649.57 L719.84,649.23 L718.79,648.89 L717.76,648.56 L716.76,648.23 L715.79,647.90 L714.87,647.58 L713.98,647.27 L713.15,646.96 L712.36,646.66 L711.63,646.37 L710.96,646.09 L710.35,645.82 L709.81,645.56 L709.33,645.32 L708.93,645.08 L708.60,644.86 L708.34,644.66 L708.17,644.47 L708.07,644.29 L708.05,644.13 L708.11,643.98 L708.26,643.85 L708.49,643.74 L708.80,643.64 L709.19,643.56 L709.66,643.49 L710.22,643.44 L710.85,643.40 L711.56,643.38 L712.35,643.38 L713.21,643.39 L714.15,643.41 L715.15,643.45 L716.22,643.50 L717.35,643.56 L718.54,643.63 L719.78,643.72 L721.08,643.81 L722.43,643.92 L723.82,644.03 L725.25,644.16 L726.71,644.28 L728.20,644.42 L729.72,644.56 L731.26,644.70 L732.82,644.85 L734.38,645.00 L735.95,645.15" fill="none" stroke="#0000ff" stroke-width="2.40"/><line x1="736.0" y1="630.0" x2="736.0" y2="558.5" stroke="#1a1a1a" stroke-width="1.8"/><polygon points="736.0,551.5 739.0,558.5 733.0,558.5" fill="#1a1a1a"/><line x1="703.9" y1="590.2" x2="774.0" y2="605.4" stroke="#1a1a1a" stroke-width="1.6"/><circle cx="768.0" cy="604.1" r="2.6" fill="#1a1a1a"/><line x1="706.3" y1="608.9" x2="764.1" y2="586.0" stroke="#1a1a1a" stroke-width="1.6"/><circle cx="712.2" cy="606.5" r="2.6" fill="#1a1a1a"/><path d="M735.95,597.15 L737.52,596.30 L739.08,595.44 L740.64,594.59 L742.18,593.74 L743.70,592.89 L745.19,592.05 L746.65,591.21 L748.08,590.37 L749.47,589.54 L750.82,588.72 L752.12,587.91 L753.36,587.10 L754.55,586.31 L755.68,585.52 L756.75,584.75 L757.75,583.98 L758.69,583.23 L759.55,582.49 L760.34,581.77 L761.05,581.06 L761.68,580.37 L762.24,579.69 L762.71,579.04 L763.10,578.40 L763.41,577.78 L763.64,577.18 L763.79,576.60 L763.85,576.05 L763.83,575.52 L763.73,575.01 L763.56,574.53 L763.30,574.07 L762.97,573.64 L762.57,573.24 L762.09,572.87 L761.55,572.53 L760.94,572.22 L760.27,571.94 L759.54,571.69 L758.75,571.47 L757.92,571.29 L757.03,571.14 L756.11,571.03 L755.14,570.96 L754.14,570.92 L753.11,570.91 L752.06,570.95 L750.98,571.02 L749.89,571.13 L748.79,571.28 L747.68,571.46 L746.58,571.69 L745.47,571.96 L744.38,572.26 L743.30,572.60 L742.24,572.99 L741.20,573.41 L740.19,573.87 L739.21,574.36 L738.26,574.90 L737.36,575.47 L736.50,576.08 L735.69,576.73 L734.93,577.41 L734.23,578.12 L733.58,578.87 L733.00,579.65 L732.47,580.47 L732.02,581.31 L731.63,582.18 L731.30,583.08 L731.05,584.01 L730.87,584.96 L730.76,585.93 L730.73,586.92 L730.76,587.94 L730.87,588.97 L731.05,590.02 L731.30,591.08 L731.63,592.16 L732.02,593.25 L732.47,594.34 L733.00,595.44 L733.58,596.54 L734.23,597.65 L734.93,598.75 L735.69,599.85 L736.50,600.95 L737.36,602.03 L738.26,603.11 L739.21,604.18 L740.19,605.23 L741.20,606.26 L742.24,607.28 L743.30,608.27 L744.38,609.24 L745.47,610.19 L746.58,611.11 L747.68,611.99 L748.79,612.85 L749.89,613.67 L750.98,614.45 L752.06,615.20 L753.11,615.90 L754.14,616.57 L755.14,617.19 L756.11,617.76 L757.03,618.29 L757.92,618.78 L758.75,619.21 L759.54,619.59 L760.27,619.92 L760.94,620.21 L761.55,620.43 L762.09,620.61 L762.57,620.73 L762.97,620.79 L763.30,620.80 L763.56,620.76 L763.73,620.66 L763.83,620.51 L763.85,620.30 L763.79,620.03 L763.64,619.72 L763.41,619.35 L763.10,618.92 L762.71,618.45 L762.24,617.93 L761.68,617.35 L761.05,616.73 L760.34,616.07 L759.55,615.35 L758.69,614.60 L757.75,613.80 L756.75,612.96 L755.68,612.09 L754.55,611.17 L753.36,610.23 L752.12,609.25 L750.82,608.25 L749.47,607.21 L748.08,606.16 L746.65,605.08 L745.19,603.98 L743.70,602.87 L742.18,601.74 L740.64,600.60 L739.08,599.46 L737.52,598.31 L735.95,597.15 L734.38,595.99 L732.82,594.84 L731.26,593.70 L729.72,592.56 L728.20,591.43 L726.71,590.32 L725.25,589.22 L723.82,588.14 L722.43,587.09 L721.08,586.05 L719.78,585.05 L718.54,584.07 L717.35,583.13 L716.22,582.21 L715.15,581.34 L714.15,580.50 L713.21,579.70 L712.35,578.95 L711.56,578.23 L710.85,577.57 L710.22,576.95 L709.66,576.37 L709.19,575.85 L708.80,575.38 L708.49,574.95 L708.26,574.58 L708.11,574.27 L708.05,574.00 L708.07,573.79 L708.17,573.64 L708.34,573.54 L708.60,573.50 L708.93,573.51 L709.33,573.57 L709.81,573.69 L710.35,573.87 L710.96,574.09 L711.63,574.38 L712.36,574.71 L713.15,575.09 L713.98,575.52 L714.87,576.01 L715.79,576.54 L716.76,577.11 L717.76,577.73 L718.79,578.40 L719.84,579.10 L720.92,579.85 L722.01,580.63 L723.11,581.45 L724.22,582.31 L725.32,583.19 L726.43,584.11 L727.52,585.06 L728.60,586.03 L729.66,587.02 L730.70,588.04 L731.71,589.07 L732.69,590.12 L733.64,591.19 L734.54,592.27 L735.40,593.35 L736.21,594.45 L736.97,595.55 L737.67,596.65 L738.32,597.76 L738.90,598.86 L739.43,599.96 L739.88,601.05 L740.27,602.14 L740.60,603.22 L740.85,604.28 L741.03,605.33 L741.14,606.36 L741.17,607.38 L741.14,608.37 L741.03,609.34 L740.85,610.29 L740.60,611.22 L740.27,612.12 L739.88,612.99 L739.43,613.83 L738.90,614.65 L738.32,615.43 L737.67,616.18 L736.97,616.89 L736.21,617.57 L735.40,618.22 L734.54,618.83 L733.64,619.40 L732.69,619.94 L731.71,620.43 L730.70,620.89 L729.66,621.31 L728.60,621.70 L727.52,622.04 L726.43,622.34 L725.32,622.61 L724.22,622.84 L723.11,623.02 L722.01,623.17 L720.92,623.28 L719.84,623.35 L718.79,623.39 L717.76,623.38 L716.76,623.34 L715.79,623.27 L714.87,623.16 L713.98,623.01 L713.15,622.83 L712.36,622.61 L711.63,622.36 L710.96,622.08 L710.35,621.77 L709.81,621.43 L709.33,621.06 L708.93,620.66 L708.60,620.23 L708.34,619.77 L708.17,619.29 L708.07,618.78 L708.05,618.25 L708.11,617.70 L708.26,617.12 L708.49,616.52 L708.80,615.90 L709.19,615.26 L709.66,614.61 L710.22,613.93 L710.85,613.24 L711.56,612.53 L712.35,611.81 L713.21,611.07 L714.15,610.32 L715.15,609.55 L716.22,608.78 L717.35,607.99 L718.54,607.20 L719.78,606.39 L721.08,605.58 L722.43,604.76 L723.82,603.93 L725.25,603.09 L726.71,602.25 L728.20,601.41 L729.72,600.56 L731.26,599.71 L732.82,598.86 L734.38,598.00 L735.95,597.15" fill="none" stroke="#800080" stroke-width="3.20"/><circle cx="694.3" cy="594.1" r="2.4" fill="#ff8000"/><circle cx="759.4" cy="589.1" r="2.4" fill="#ff8000"/><circle cx="728.2" cy="644.4" r="2.4" fill="#ff8000"/><circle cx="728.2" cy="601.4" r="2.4" fill="#ff8000"/><line x1="694.3" y1="381.8" x2="694.3" y2="594.1" stroke="#ffe9c8" stroke-width="1.8" stroke-dasharray="5 4"/><line x1="695.9" y1="534.9" x2="695.9" y2="363.9" stroke="#1a1a1a" stroke-width="1.9"/><polygon points="695.9,355.9 698.9,363.9 692.9,363.9" fill="#1a1a1a"/><line x1="672.0" y1="537.4" x2="716.9" y2="519.6" stroke="#1a1a1a" stroke-width="1.9"/><polygon points="724.3,516.7 718.0,522.4 715.8,516.8" fill="#1a1a1a"/><path d="M695.85,527.97 L696.16,527.36 L696.46,526.75 L696.77,526.14 L697.07,525.53 L697.37,524.92 L697.68,524.31 L697.98,523.70 L698.28,523.09 L698.58,522.48 L698.88,521.88 L699.18,521.27 L699.48,520.66 L699.77,520.05 L700.07,519.45 L700.36,518.84 L700.65,518.24 L700.93,517.64 L701.22,517.03 L701.50,516.43 L701.78,515.83 L702.06,515.23 L702.34,514.63 L702.61,514.04 L702.88,513.44 L703.15,512.84 L703.41,512.25 L703.67,511.66 L703.93,511.07 L704.19,510.48 L704.44,509.89 L704.68,509.30 L704.93,508.71 L705.17,508.13 L705.40,507.55 L705.63,506.97 L705.86,506.39 L706.08,505.81 L706.30,505.23 L706.52,504.66 L706.73,504.09 L706.93,503.52 L707.13,502.95 L707.33,502.38 L707.52,501.82 L707.70,501.25 L707.89,500.69 L708.06,500.13 L708.23,499.58 L708.40,499.02 L708.56,498.47 L708.71,497.92 L708.86,497.37 L709.00,496.82 L709.14,496.28 L709.27,495.74 L709.40,495.20 L709.52,494.66 L709.64,494.13 L709.75,493.59 L709.85,493.06 L709.95,492.54 L710.04,492.01 L710.12,491.49 L710.20,490.97 L710.28,490.45 L710.34,489.93 L710.41,489.42 L710.46,488.91 L710.51,488.40 L710.55,487.89 L710.59,487.39 L710.62,486.89 L710.64,486.39 L710.66,485.89 L710.67,485.40 L710.67,484.91 L710.67,484.42 L710.67,483.93 L710.65,483.45 L710.63,482.97 L710.60,482.49 L710.57,482.01 L710.53,481.54 L710.49,481.07 L710.44,480.60 L710.38,480.13 L710.31,479.67 L710.24,479.21 L710.17,478.75 L710.09,478.29 L710.00,477.84 L709.90,477.38 L709.80,476.93 L709.70,476.49 L709.59,476.04 L709.47,475.60 L709.35,475.16 L709.22,474.72 L709.08,474.28 L708.94,473.85 L708.79,473.42 L708.64,472.99 L708.49,472.56 L708.32,472.14 L708.16,471.72 L707.98,471.29 L707.80,470.88 L707.62,470.46 L707.43,470.04 L707.24,469.63 L707.04,469.22 L706.84,468.81 L706.63,468.40 L706.42,468.00 L706.21,467.60 L705.98,467.19 L705.76,466.79 L705.53,466.39 L705.30,466.00 L705.06,465.60 L704.82,465.21 L704.57,464.82 L704.32,464.43 L704.07,464.04 L703.82,463.65 L703.56,463.26 L703.30,462.88 L703.03,462.49 L702.76,462.11 L702.49,461.73 L702.22,461.35 L701.94,460.97 L701.66,460.59 L701.38,460.21 L701.09,459.84 L700.81,459.46 L700.52,459.08 L700.23,458.71 L699.93,458.34 L699.64,457.96 L699.34,457.59 L699.05,457.22 L698.75,456.85 L698.45,456.48 L698.15,456.11 L697.84,455.74 L697.54,455.37 L697.24,455.00 L696.93,454.63 L696.63,454.26 L696.32,453.90 L696.02,453.53 L695.71,453.16 L695.41,452.79 L695.10,452.42 L694.80,452.05 L694.49,451.69 L694.19,451.32 L693.89,450.95 L693.58,450.58 L693.28,450.21 L692.98,449.84 L692.68,449.47 L692.39,449.10 L692.09,448.72 L691.80,448.35 L691.50,447.98 L691.21,447.60 L690.92,447.23 L690.64,446.85 L690.35,446.48 L690.07,446.10 L689.79,445.72 L689.51,445.34 L689.24,444.96 L688.97,444.58 L688.70,444.20 L688.43,443.81 L688.17,443.43 L687.91,443.04 L687.65,442.65 L687.40,442.26 L687.15,441.87 L686.91,441.48 L686.66,441.09 L686.43,440.69 L686.19,440.30 L685.96,439.90 L685.74,439.50 L685.52,439.10 L685.30,438.69 L685.09,438.29 L684.88,437.88 L684.68,437.47 L684.48,437.06 L684.29,436.65 L684.10,436.23 L683.91,435.82 L683.73,435.40 L683.56,434.98 L683.39,434.55 L683.23,434.13 L683.07,433.70 L682.92,433.27 L682.77,432.84 L682.63,432.41 L682.50,431.97 L682.37,431.54 L682.24,431.10 L682.13,430.65 L682.01,430.21 L681.91,429.76 L681.81,429.31 L681.71,428.86 L681.62,428.41 L681.54,427.95 L681.46,427.49 L681.39,427.03 L681.33,426.57 L681.27,426.10 L681.22,425.63 L681.17,425.16 L681.13,424.69 L681.10,424.21 L681.07,423.73 L681.05,423.25 L681.04,422.77 L681.03,422.28 L681.03,421.79 L681.03,421.30 L681.04,420.81 L681.06,420.31 L681.08,419.81 L681.11,419.31 L681.14,418.81 L681.19,418.30 L681.23,417.79 L681.29,417.28 L681.35,416.77 L681.42,416.26 L681.49,415.74 L681.57,415.22 L681.65,414.69 L681.74,414.17 L681.84,413.64 L681.94,413.11 L682.05,412.58 L682.17,412.04 L682.29,411.51 L682.41,410.97 L682.54,410.43 L682.68,409.88 L682.82,409.34 L682.97,408.79 L683.13,408.24 L683.29,407.68 L683.45,407.13 L683.62,406.57 L683.80,406.01 L683.98,405.45 L684.16,404.89 L684.35,404.33 L684.55,403.76 L684.75,403.19 L684.95,402.62 L685.16,402.05 L685.38,401.47 L685.59,400.90 L685.82,400.32 L686.04,399.74 L686.27,399.16 L686.51,398.58 L686.75,397.99 L686.99,397.41 L687.24,396.82 L687.49,396.23 L687.74,395.64 L688.00,395.05 L688.26,394.46 L688.52,393.87 L688.79,393.27 L689.06,392.67 L689.33,392.08 L689.61,391.48 L689.89,390.88 L690.17,390.28 L690.45,389.68 L690.74,389.07 L691.02,388.47 L691.31,387.87 L691.61,387.26 L691.90,386.66 L692.19,386.05 L692.49,385.44 L692.79,384.84 L693.09,384.23 L693.39,383.62 L693.69,383.01 L693.99,382.40 L694.30,381.79" fill="none" stroke="#ff0000" stroke-width="2.2"/><circle cx="694.3" cy="381.8" r="2.9" fill="#ff8000"/><line x1="759.4" y1="376.8" x2="759.4" y2="589.1" stroke="#ffe9c8" stroke-width="1.8" stroke-dasharray="5 4"/><line x1="765.6" y1="530.2" x2="765.6" y2="359.4" stroke="#1a1a1a" stroke-width="1.9"/><polygon points="765.6,351.4 768.6,359.4 762.6,359.4" fill="#1a1a1a"/><line x1="733.5" y1="518.0" x2="796.9" y2="531.7" stroke="#1a1a1a" stroke-width="1.9"/><polygon points="804.7,533.4 796.2,534.6 797.5,528.8" fill="#1a1a1a"/><path d="M765.60,524.92 L766.84,524.70 L768.07,524.48 L769.29,524.25 L770.50,524.03 L771.70,523.80 L772.86,523.56 L774.00,523.32 L775.11,523.07 L776.18,522.81 L777.21,522.55 L778.20,522.27 L779.14,521.99 L780.03,521.69 L780.86,521.38 L781.63,521.06 L782.35,520.72 L782.99,520.38 L783.58,520.01 L784.09,519.63 L784.53,519.24 L784.91,518.83 L785.20,518.41 L785.43,517.97 L785.57,517.51 L785.64,517.04 L785.64,516.55 L785.56,516.04 L785.40,515.51 L785.16,514.97 L784.85,514.42 L784.47,513.85 L784.02,513.26 L783.49,512.65 L782.90,512.04 L782.24,511.40 L781.52,510.76 L780.74,510.10 L779.90,509.43 L779.00,508.74 L778.06,508.05 L777.06,507.34 L776.02,506.63 L774.95,505.91 L773.83,505.18 L772.69,504.44 L771.52,503.70 L770.32,502.95 L769.11,502.19 L767.89,501.44 L766.65,500.68 L765.41,499.92 L764.18,499.17 L762.94,498.41 L761.72,497.66 L760.52,496.90 L759.33,496.16 L758.16,495.42 L757.03,494.68 L755.93,493.95 L754.86,493.23 L753.83,492.52 L752.85,491.82 L751.92,491.13 L751.04,490.45 L750.22,489.78 L749.46,489.12 L748.75,488.48 L748.11,487.85 L747.54,487.24 L747.04,486.64 L746.61,486.06 L746.25,485.49 L745.96,484.94 L745.75,484.40 L745.61,483.89 L745.55,483.38 L745.57,482.90 L745.66,482.43 L745.83,481.98 L746.08,481.54 L746.40,481.12 L746.79,480.72 L747.26,480.33 L747.79,479.95 L748.39,479.60 L749.06,479.25 L749.79,478.92 L750.58,478.60 L751.43,478.30 L752.34,478.00 L753.29,477.72 L754.29,477.45 L755.34,477.19 L756.42,476.93 L757.54,476.69 L758.68,476.45 L759.86,476.21 L761.06,475.98 L762.27,475.76 L763.50,475.53 L764.73,475.31 L765.97,475.09 L767.21,474.87 L768.44,474.65 L769.66,474.42 L770.86,474.20 L772.05,473.96 L773.21,473.73 L774.34,473.48 L775.44,473.23 L776.50,472.97 L777.52,472.70 L778.49,472.42 L779.41,472.14 L780.28,471.83 L781.10,471.52 L781.85,471.20 L782.55,470.86 L783.18,470.51 L783.74,470.14 L784.23,469.76 L784.65,469.36 L785.00,468.94 L785.28,468.51 L785.48,468.07 L785.60,467.61 L785.65,467.13 L785.62,466.63 L785.52,466.12 L785.33,465.59 L785.08,465.05 L784.75,464.48 L784.34,463.91 L783.87,463.32 L783.32,462.71 L782.71,462.09 L782.03,461.45 L781.29,460.80 L780.49,460.14 L779.63,459.46 L778.72,458.77 L777.76,458.08 L776.75,457.37 L775.70,456.65 L774.62,455.93 L773.49,455.19 L772.34,454.45 L771.16,453.71 L769.96,452.96 L768.74,452.21 L767.52,451.45 L766.28,450.69 L765.04,449.93 L763.81,449.18 L762.58,448.42 L761.36,447.67 L760.16,446.92 L758.97,446.17 L757.82,445.43 L756.69,444.70 L755.60,443.97 L754.55,443.25 L753.54,442.54 L752.57,441.85 L751.65,441.16 L750.79,440.48 L749.98,439.82 L749.24,439.17 L748.55,438.53 L747.93,437.90 L747.38,437.30 L746.90,436.70 L746.49,436.12 L746.15,435.56 L745.89,435.01 L745.70,434.48 L745.59,433.97 L745.55,433.47 L745.59,432.99 L745.71,432.53 L745.90,432.08 L746.17,431.65 L746.51,431.23 L746.92,430.83 L747.41,430.45 L747.96,430.08 L748.59,429.73 L749.27,429.39 L750.02,429.06 L750.83,428.75 L751.70,428.45 L752.62,428.16 L753.59,427.88 L754.60,427.61 L755.66,427.35 L756.75,427.09 L757.88,426.85 L759.04,426.61 L760.22,426.38 L761.42,426.15 L762.64,425.93 L763.87,425.70 L765.11,425.48 L766.34,425.26 L767.58,425.04 L768.81,424.82 L770.02,424.59 L771.22,424.36 L772.40,424.13 L773.55,423.89 L774.67,423.64 L775.76,423.39 L776.81,423.13 L777.81,422.86 L778.77,422.58 L779.68,422.28 L780.53,421.98 L781.33,421.66 L782.07,421.33 L782.74,420.99 L783.35,420.63 L783.89,420.26 L784.37,419.87 L784.77,419.47 L785.09,419.05 L785.35,418.62 L785.52,418.17 L785.62,417.70 L785.65,417.22 L785.60,416.72 L785.47,416.20 L785.27,415.67 L784.99,415.12 L784.63,414.55 L784.21,413.97 L783.71,413.37 L783.15,412.76 L782.51,412.13 L781.82,411.49 L781.06,410.84 L780.24,410.17 L779.37,409.49 L778.44,408.80 L777.46,408.10 L776.44,407.39 L775.38,406.67 L774.28,405.94 L773.15,405.21 L771.99,404.47 L770.80,403.72 L769.60,402.97 L768.38,402.22 L767.15,401.46 L765.91,400.70 L764.67,399.94 L763.43,399.19 L762.21,398.43 L760.99,397.68 L759.80,396.93 L758.62,396.19 L757.48,395.45 L756.36,394.72 L755.28,393.99 L754.24,393.28 L753.24,392.57 L752.29,391.88 L751.39,391.19 L750.54,390.52 L749.75,389.86 L749.03,389.21 L748.36,388.58 L747.76,387.96 L747.23,387.35 L746.77,386.76 L746.38,386.19 L746.06,385.63 L745.82,385.09 L745.66,384.56 L745.57,384.06 L745.55,383.56 L745.62,383.09 L745.76,382.63 L745.97,382.19 L746.26,381.76 L746.63,381.35 L747.06,380.95 L747.57,380.58 L748.14,380.21 L748.79,379.86 L749.49,379.53 L750.26,379.20 L751.09,378.89 L751.97,378.59 L752.90,378.31 L753.89,378.03 L754.91,377.77 L755.98,377.51 L757.09,377.26 L758.22,377.02 L759.39,376.78" fill="none" stroke="#00ee00" stroke-width="2.2"/><circle cx="759.4" cy="376.8" r="2.9" fill="#ff8000"/><line x1="566.8" y1="644.6" x2="694.3" y2="594.1" stroke="#ffe9c8" stroke-width="1.8" stroke-dasharray="5 4"/><line x1="658.3" y1="641.0" x2="658.3" y2="564.5" stroke="#1a1a1a" stroke-width="1.9"/><polygon points="658.3,556.5 661.3,564.5 655.3,564.5" fill="#1a1a1a"/><line x1="663.2" y1="601.4" x2="557.3" y2="643.4" stroke="#1a1a1a" stroke-width="1.9"/><polygon points="549.8,646.3 556.2,640.6 558.4,646.2" fill="#1a1a1a"/><path d="M658.34,603.31 L658.04,602.45 L657.73,601.58 L657.43,600.72 L657.12,599.86 L656.82,599.01 L656.51,598.17 L656.21,597.34 L655.90,596.52 L655.60,595.71 L655.29,594.92 L654.98,594.14 L654.68,593.38 L654.37,592.64 L654.07,591.92 L653.76,591.23 L653.46,590.55 L653.15,589.91 L652.85,589.28 L652.54,588.69 L652.24,588.12 L651.93,587.59 L651.63,587.08 L651.32,586.61 L651.02,586.17 L650.71,585.77 L650.40,585.40 L650.10,585.06 L649.79,584.76 L649.49,584.50 L649.18,584.28 L648.88,584.09 L648.57,583.95 L648.27,583.84 L647.96,583.78 L647.66,583.75 L647.35,583.76 L647.05,583.82 L646.74,583.91 L646.44,584.05 L646.13,584.22 L645.83,584.44 L645.52,584.70 L645.21,585.00 L644.91,585.33 L644.60,585.71 L644.30,586.13 L643.99,586.58 L643.69,587.07 L643.38,587.60 L643.08,588.17 L642.77,588.77 L642.47,589.41 L642.16,590.08 L641.86,590.79 L641.55,591.53 L641.25,592.30 L640.94,593.10 L640.64,593.92 L640.33,594.78 L640.02,595.66 L639.72,596.57 L639.41,597.50 L639.11,598.46 L638.80,599.43 L638.50,600.43 L638.19,601.44 L637.89,602.47 L637.58,603.52 L637.28,604.58 L636.97,605.65 L636.67,606.73 L636.36,607.82 L636.06,608.92 L635.75,610.02 L635.44,611.13 L635.14,612.24 L634.83,613.35 L634.53,614.46 L634.22,615.56 L633.92,616.66 L633.61,617.76 L633.31,618.84 L633.00,619.92 L632.70,620.99 L632.39,622.04 L632.09,623.08 L631.78,624.10 L631.48,625.11 L631.17,626.09 L630.87,627.06 L630.56,628.00 L630.25,628.93 L629.95,629.82 L629.64,630.69 L629.34,631.54 L629.03,632.35 L628.73,633.14 L628.42,633.89 L628.12,634.62 L627.81,635.31 L627.51,635.96 L627.20,636.59 L626.90,637.17 L626.59,637.72 L626.29,638.24 L625.98,638.71 L625.68,639.15 L625.37,639.55 L625.06,639.91 L624.76,640.23 L624.45,640.51 L624.15,640.75 L623.84,640.94 L623.54,641.10 L623.23,641.22 L622.93,641.30 L622.62,641.33 L622.32,641.33 L622.01,641.28 L621.71,641.20 L621.40,641.08 L621.10,640.91 L620.79,640.71 L620.48,640.47 L620.18,640.19 L619.87,639.88 L619.57,639.53 L619.26,639.14 L618.96,638.72 L618.65,638.26 L618.35,637.78 L618.04,637.26 L617.74,636.71 L617.43,636.13 L617.13,635.52 L616.82,634.89 L616.52,634.23 L616.21,633.55 L615.91,632.84 L615.60,632.11 L615.29,631.36 L614.99,630.60 L614.68,629.81 L614.38,629.01 L614.07,628.20 L613.77,627.37 L613.46,626.54 L613.16,625.69 L612.85,624.84 L612.55,623.98 L612.24,623.11 L611.94,622.25 L611.63,621.38 L611.33,620.51 L611.02,619.65 L610.72,618.79 L610.41,617.93 L610.10,617.09 L609.80,616.25 L609.49,615.42 L609.19,614.61 L608.88,613.81 L608.58,613.02 L608.27,612.25 L607.97,611.50 L607.66,610.77 L607.36,610.06 L607.05,609.38 L606.75,608.72 L606.44,608.08 L606.14,607.47 L605.83,606.89 L605.52,606.34 L605.22,605.81 L604.91,605.32 L604.61,604.87 L604.30,604.44 L604.00,604.05 L603.69,603.70 L603.39,603.38 L603.08,603.10 L602.78,602.85 L602.47,602.65 L602.17,602.48 L601.86,602.35 L601.56,602.26 L601.25,602.21 L600.95,602.21 L600.64,602.24 L600.33,602.31 L600.03,602.42 L599.72,602.58 L599.42,602.77 L599.11,603.01 L598.81,603.28 L598.50,603.60 L598.20,603.96 L597.89,604.35 L597.59,604.78 L597.28,605.26 L596.98,605.77 L596.67,606.31 L596.37,606.90 L596.06,607.51 L595.76,608.17 L595.45,608.86 L595.14,609.58 L594.84,610.33 L594.53,611.11 L594.23,611.92 L593.92,612.76 L593.62,613.63 L593.31,614.53 L593.01,615.45 L592.70,616.39 L592.40,617.35 L592.09,618.34 L591.79,619.34 L591.48,620.36 L591.18,621.40 L590.87,622.45 L590.56,623.52 L590.26,624.59 L589.95,625.68 L589.65,626.77 L589.34,627.87 L589.04,628.98 L588.73,630.09 L588.43,631.19 L588.12,632.30 L587.82,633.41 L587.51,634.51 L587.21,635.61 L586.90,636.70 L586.60,637.79 L586.29,638.86 L585.99,639.92 L585.68,640.97 L585.37,642.00 L585.07,643.01 L584.76,644.01 L584.46,644.99 L584.15,645.94 L583.85,646.88 L583.54,647.79 L583.24,648.67 L582.93,649.53 L582.63,650.36 L582.32,651.17 L582.02,651.94 L581.71,652.68 L581.41,653.39 L581.10,654.06 L580.80,654.71 L580.49,655.31 L580.18,655.88 L579.88,656.42 L579.57,656.91 L579.27,657.37 L578.96,657.79 L578.66,658.17 L578.35,658.51 L578.05,658.82 L577.74,659.08 L577.44,659.30 L577.13,659.48 L576.83,659.62 L576.52,659.72 L576.22,659.78 L575.91,659.79 L575.61,659.77 L575.30,659.71 L574.99,659.61 L574.69,659.46 L574.38,659.28 L574.08,659.06 L573.77,658.81 L573.47,658.51 L573.16,658.18 L572.86,657.81 L572.55,657.41 L572.25,656.97 L571.94,656.50 L571.64,656.00 L571.33,655.47 L571.03,654.91 L570.72,654.32 L570.41,653.70 L570.11,653.05 L569.80,652.38 L569.50,651.69 L569.19,650.97 L568.89,650.23 L568.58,649.48 L568.28,648.70 L567.97,647.91 L567.67,647.11 L567.36,646.29 L567.06,645.45 L566.75,644.61" fill="none" stroke="#ff0000" stroke-width="2.2"/><circle cx="566.8" cy="644.6" r="2.9" fill="#ff8000"/><line x1="939.6" y1="628.2" x2="759.4" y2="589.1" stroke="#ffe9c8" stroke-width="1.8" stroke-dasharray="5 4"/><line x1="815.7" y1="635.2" x2="815.7" y2="559.4" stroke="#1a1a1a" stroke-width="1.9"/><polygon points="815.7,551.4 818.7,559.4 812.7,559.4" fill="#1a1a1a"/><line x1="809.7" y1="595.0" x2="953.3" y2="626.1" stroke="#1a1a1a" stroke-width="1.9"/><polygon points="961.1,627.8 952.6,629.0 953.9,623.2" fill="#1a1a1a"/><path d="M815.73,596.27 L816.14,595.38 L816.55,594.48 L816.96,593.59 L817.38,592.70 L817.79,591.82 L818.20,590.94 L818.62,590.08 L819.03,589.23 L819.44,588.39 L819.85,587.56 L820.27,586.76 L820.68,585.96 L821.09,585.19 L821.51,584.44 L821.92,583.72 L822.33,583.01 L822.74,582.33 L823.16,581.68 L823.57,581.05 L823.98,580.46 L824.40,579.89 L824.81,579.35 L825.22,578.85 L825.63,578.38 L826.05,577.94 L826.46,577.54 L826.87,577.17 L827.29,576.85 L827.70,576.55 L828.11,576.30 L828.53,576.08 L828.94,575.90 L829.35,575.77 L829.76,575.67 L830.18,575.61 L830.59,575.59 L831.00,575.62 L831.42,575.68 L831.83,575.78 L832.24,575.93 L832.65,576.11 L833.07,576.34 L833.48,576.61 L833.89,576.91 L834.31,577.26 L834.72,577.64 L835.13,578.07 L835.54,578.53 L835.96,579.03 L836.37,579.56 L836.78,580.13 L837.20,580.74 L837.61,581.38 L838.02,582.06 L838.43,582.76 L838.85,583.50 L839.26,584.27 L839.67,585.06 L840.09,585.89 L840.50,586.74 L840.91,587.62 L841.33,588.52 L841.74,589.44 L842.15,590.39 L842.56,591.35 L842.98,592.33 L843.39,593.33 L843.80,594.34 L844.22,595.37 L844.63,596.41 L845.04,597.46 L845.45,598.52 L845.87,599.59 L846.28,600.66 L846.69,601.73 L847.11,602.81 L847.52,603.89 L847.93,604.97 L848.34,606.04 L848.76,607.11 L849.17,608.17 L849.58,609.23 L850.00,610.27 L850.41,611.31 L850.82,612.33 L851.24,613.34 L851.65,614.33 L852.06,615.30 L852.47,616.26 L852.89,617.19 L853.30,618.11 L853.71,619.00 L854.13,619.86 L854.54,620.70 L854.95,621.51 L855.36,622.30 L855.78,623.05 L856.19,623.78 L856.60,624.47 L857.02,625.13 L857.43,625.75 L857.84,626.34 L858.25,626.90 L858.67,627.42 L859.08,627.90 L859.49,628.34 L859.91,628.75 L860.32,629.12 L860.73,629.45 L861.14,629.73 L861.56,629.98 L861.97,630.19 L862.38,630.36 L862.80,630.48 L863.21,630.57 L863.62,630.62 L864.04,630.62 L864.45,630.58 L864.86,630.51 L865.27,630.39 L865.69,630.24 L866.10,630.04 L866.51,629.81 L866.93,629.54 L867.34,629.23 L867.75,628.88 L868.16,628.50 L868.58,628.08 L868.99,627.63 L869.40,627.14 L869.82,626.62 L870.23,626.07 L870.64,625.49 L871.05,624.88 L871.47,624.24 L871.88,623.58 L872.29,622.89 L872.71,622.17 L873.12,621.44 L873.53,620.68 L873.95,619.90 L874.36,619.10 L874.77,618.28 L875.18,617.45 L875.60,616.61 L876.01,615.75 L876.42,614.88 L876.84,614.00 L877.25,613.12 L877.66,612.23 L878.07,611.33 L878.49,610.43 L878.90,609.54 L879.31,608.64 L879.73,607.74 L880.14,606.85 L880.55,605.96 L880.96,605.09 L881.38,604.22 L881.79,603.36 L882.20,602.51 L882.62,601.68 L883.03,600.86 L883.44,600.06 L883.85,599.28 L884.27,598.52 L884.68,597.78 L885.09,597.06 L885.51,596.37 L885.92,595.70 L886.33,595.06 L886.75,594.45 L887.16,593.86 L887.57,593.31 L887.98,592.79 L888.40,592.30 L888.81,591.84 L889.22,591.42 L889.64,591.04 L890.05,590.69 L890.46,590.37 L890.87,590.10 L891.29,589.86 L891.70,589.66 L892.11,589.50 L892.53,589.38 L892.94,589.30 L893.35,589.26 L893.76,589.26 L894.18,589.31 L894.59,589.39 L895.00,589.51 L895.42,589.67 L895.83,589.88 L896.24,590.12 L896.66,590.41 L897.07,590.73 L897.48,591.09 L897.89,591.50 L898.31,591.94 L898.72,592.41 L899.13,592.93 L899.55,593.48 L899.96,594.07 L900.37,594.69 L900.78,595.35 L901.20,596.04 L901.61,596.76 L902.02,597.51 L902.44,598.29 L902.85,599.10 L903.26,599.94 L903.67,600.80 L904.09,601.69 L904.50,602.60 L904.91,603.53 L905.33,604.48 L905.74,605.46 L906.15,606.45 L906.56,607.45 L906.98,608.47 L907.39,609.51 L907.80,610.55 L908.22,611.60 L908.63,612.67 L909.04,613.74 L909.46,614.81 L909.87,615.89 L910.28,616.96 L910.69,618.04 L911.11,619.12 L911.52,620.19 L911.93,621.26 L912.35,622.32 L912.76,623.37 L913.17,624.41 L913.58,625.44 L914.00,626.45 L914.41,627.45 L914.82,628.44 L915.24,629.40 L915.65,630.35 L916.06,631.27 L916.47,632.18 L916.89,633.06 L917.30,633.91 L917.71,634.74 L918.13,635.54 L918.54,636.31 L918.95,637.05 L919.37,637.76 L919.78,638.44 L920.19,639.08 L920.60,639.69 L921.02,640.26 L921.43,640.80 L921.84,641.31 L922.26,641.77 L922.67,642.20 L923.08,642.59 L923.49,642.94 L923.91,643.25 L924.32,643.52 L924.73,643.75 L925.15,643.94 L925.56,644.09 L925.97,644.19 L926.38,644.26 L926.80,644.29 L927.21,644.27 L927.62,644.22 L928.04,644.13 L928.45,643.99 L928.86,643.82 L929.27,643.61 L929.69,643.36 L930.10,643.07 L930.51,642.74 L930.93,642.38 L931.34,641.98 L931.75,641.55 L932.17,641.08 L932.58,640.58 L932.99,640.05 L933.40,639.48 L933.82,638.89 L934.23,638.26 L934.64,637.61 L935.06,636.94 L935.47,636.24 L935.88,635.51 L936.29,634.76 L936.71,633.99 L937.12,633.21 L937.53,632.40 L937.95,631.58 L938.36,630.74 L938.77,629.89 L939.18,629.03 L939.60,628.15" fill="none" stroke="#00ee00" stroke-width="2.2"/><circle cx="939.6" cy="628.2" r="2.9" fill="#ff8000"/><line x1="599.5" y1="695.4" x2="728.2" y2="644.4" stroke="#ffe9c8" stroke-width="1.8" stroke-dasharray="5 4"/><line x1="666.1" y1="652.9" x2="729.2" y2="667.3" stroke="#1a1a1a" stroke-width="1.9"/><polygon points="737.0,669.1 728.5,670.2 729.8,664.4" fill="#1a1a1a"/><line x1="701.9" y1="658.7" x2="595.9" y2="700.7" stroke="#1a1a1a" stroke-width="1.9"/><polygon points="588.4,703.6 594.8,697.9 597.0,703.4" fill="#1a1a1a"/><path d="M697.26,660.48 L698.19,660.87 L699.12,661.26 L700.04,661.65 L700.94,662.03 L701.83,662.41 L702.69,662.79 L703.52,663.15 L704.33,663.52 L705.09,663.87 L705.82,664.21 L706.50,664.55 L707.13,664.87 L707.71,665.19 L708.24,665.49 L708.71,665.78 L709.12,666.05 L709.46,666.31 L709.74,666.56 L709.95,666.79 L710.09,667.01 L710.15,667.21 L710.14,667.40 L710.06,667.57 L709.90,667.72 L709.67,667.86 L709.36,667.98 L708.97,668.08 L708.50,668.17 L707.97,668.24 L707.35,668.29 L706.66,668.33 L705.91,668.35 L705.08,668.36 L704.18,668.35 L703.21,668.33 L702.19,668.29 L701.10,668.24 L699.95,668.18 L698.75,668.11 L697.50,668.03 L696.20,667.93 L694.86,667.83 L693.48,667.71 L692.06,667.59 L690.61,667.47 L689.13,667.33 L687.63,667.20 L686.11,667.05 L684.58,666.91 L683.04,666.76 L681.50,666.61 L679.96,666.47 L678.42,666.32 L676.89,666.18 L675.38,666.03 L673.89,665.90 L672.42,665.77 L670.98,665.64 L669.57,665.52 L668.20,665.41 L666.87,665.31 L665.58,665.22 L664.35,665.14 L663.16,665.07 L662.03,665.01 L660.96,664.97 L659.95,664.93 L659.01,664.92 L658.13,664.91 L657.32,664.93 L656.59,664.95 L655.92,665.00 L655.33,665.05 L654.81,665.13 L654.37,665.22 L654.01,665.33 L653.72,665.45 L653.51,665.60 L653.37,665.75 L653.31,665.93 L653.33,666.12 L653.41,666.32 L653.57,666.55 L653.80,666.78 L654.10,667.03 L654.46,667.30 L654.89,667.58 L655.37,667.87 L655.92,668.18 L656.52,668.50 L657.16,668.82 L657.86,669.16 L658.60,669.51 L659.38,669.86 L660.19,670.23 L661.03,670.60 L661.90,670.97 L662.79,671.36 L663.70,671.74 L664.62,672.13 L665.55,672.52 L666.49,672.91 L667.42,673.29 L668.35,673.68 L669.26,674.07 L670.16,674.45 L671.04,674.83 L671.89,675.20 L672.72,675.57 L673.51,675.93 L674.27,676.28 L674.98,676.62 L675.65,676.95 L676.26,677.27 L676.83,677.58 L677.34,677.88 L677.79,678.17 L678.18,678.44 L678.50,678.69 L678.76,678.94 L678.95,679.17 L679.06,679.38 L679.11,679.57 L679.08,679.76 L678.97,679.92 L678.79,680.07 L678.53,680.20 L678.20,680.31 L677.79,680.41 L677.30,680.49 L676.74,680.56 L676.10,680.61 L675.39,680.64 L674.61,680.66 L673.76,680.66 L672.85,680.65 L671.86,680.62 L670.82,680.58 L669.71,680.53 L668.55,680.47 L667.33,680.39 L666.07,680.30 L664.75,680.21 L663.40,680.10 L662.00,679.98 L660.58,679.86 L659.12,679.73 L657.63,679.60 L656.13,679.46 L654.61,679.31 L653.07,679.17 L651.53,679.02 L649.99,678.87 L648.45,678.73 L646.91,678.58 L645.39,678.44 L643.88,678.30 L642.39,678.16 L640.93,678.03 L639.50,677.91 L638.10,677.79 L636.74,677.69 L635.43,677.59 L634.16,677.50 L632.93,677.42 L631.77,677.36 L630.66,677.30 L629.60,677.26 L628.61,677.23 L627.69,677.22 L626.83,677.22 L626.04,677.24 L625.33,677.27 L624.68,677.32 L624.12,677.38 L623.62,677.46 L623.20,677.56 L622.86,677.67 L622.60,677.80 L622.41,677.95 L622.30,678.11 L622.26,678.29 L622.29,678.48 L622.40,678.69 L622.58,678.92 L622.83,679.16 L623.15,679.42 L623.53,679.69 L623.98,679.97 L624.48,680.27 L625.04,680.58 L625.66,680.90 L626.32,681.23 L627.03,681.57 L627.78,681.92 L628.57,682.28 L629.39,682.64 L630.24,683.02 L631.12,683.39 L632.02,683.77 L632.93,684.16 L633.85,684.55 L634.79,684.94 L635.72,685.33 L636.65,685.72 L637.57,686.10 L638.48,686.49 L639.38,686.87 L640.25,687.25 L641.09,687.62 L641.91,687.98 L642.69,688.34 L643.43,688.69 L644.13,689.03 L644.79,689.35 L645.39,689.67 L645.94,689.98 L646.43,690.27 L646.86,690.55 L647.23,690.82 L647.54,691.07 L647.77,691.31 L647.94,691.54 L648.03,691.74 L648.06,691.94 L648.00,692.11 L647.88,692.27 L647.67,692.41 L647.39,692.54 L647.03,692.65 L646.60,692.74 L646.09,692.82 L645.51,692.88 L644.85,692.92 L644.12,692.95 L643.32,692.97 L642.45,692.96 L641.51,692.95 L640.51,692.92 L639.44,692.87 L638.32,692.82 L637.14,692.75 L635.91,692.67 L634.63,692.58 L633.30,692.48 L631.93,692.37 L630.53,692.25 L629.09,692.13 L627.62,692.00 L626.13,691.86 L624.62,691.72 L623.10,691.58 L621.56,691.43 L620.02,691.28 L618.47,691.13 L616.93,690.99 L615.40,690.84 L613.88,690.70 L612.38,690.56 L610.90,690.43 L609.45,690.30 L608.03,690.18 L606.64,690.07 L605.29,689.96 L603.99,689.86 L602.73,689.78 L601.53,689.70 L600.38,689.64 L599.28,689.59 L598.25,689.55 L597.28,689.53 L596.38,689.52 L595.54,689.53 L594.77,689.55 L594.08,689.59 L593.46,689.64 L592.91,689.71 L592.44,689.79 L592.04,689.89 L591.73,690.01 L591.48,690.15 L591.32,690.30 L591.23,690.47 L591.21,690.65 L591.27,690.85 L591.40,691.06 L591.60,691.30 L591.87,691.54 L592.21,691.80 L592.61,692.08 L593.07,692.36 L593.60,692.66 L594.17,692.98 L594.80,693.30 L595.48,693.63 L596.20,693.98 L596.96,694.33 L597.76,694.69 L598.59,695.06 L599.45,695.43" fill="none" stroke="#0000ff" stroke-width="2.2"/><circle cx="599.5" cy="695.4" r="2.9" fill="#ff8000"/><line x1="908.8" y1="683.6" x2="728.2" y2="644.4" stroke="#ffe9c8" stroke-width="1.8" stroke-dasharray="5 4"/><line x1="762.8" y1="665.5" x2="807.9" y2="647.6" stroke="#1a1a1a" stroke-width="1.9"/><polygon points="815.4,644.7 809.1,650.4 806.8,644.8" fill="#1a1a1a"/><line x1="780.1" y1="654.7" x2="922.6" y2="685.6" stroke="#1a1a1a" stroke-width="1.9"/><polygon points="930.4,687.3 922.0,688.6 923.3,682.7" fill="#1a1a1a"/><path d="M786.48,656.11 L787.19,656.08 L787.91,656.05 L788.63,656.02 L789.35,655.99 L790.06,655.96 L790.78,655.93 L791.50,655.90 L792.21,655.87 L792.92,655.84 L793.64,655.81 L794.35,655.78 L795.06,655.75 L795.77,655.72 L796.47,655.70 L797.18,655.67 L797.88,655.64 L798.58,655.62 L799.28,655.60 L799.98,655.57 L800.67,655.55 L801.36,655.53 L802.05,655.51 L802.74,655.49 L803.42,655.48 L804.10,655.46 L804.78,655.44 L805.45,655.43 L806.12,655.42 L806.79,655.41 L807.45,655.40 L808.11,655.39 L808.77,655.38 L809.42,655.38 L810.07,655.37 L810.71,655.37 L811.35,655.37 L811.99,655.37 L812.62,655.37 L813.25,655.38 L813.87,655.38 L814.49,655.39 L815.10,655.40 L815.71,655.42 L816.31,655.43 L816.91,655.45 L817.51,655.46 L818.09,655.48 L818.68,655.51 L819.26,655.53 L819.83,655.56 L820.40,655.58 L820.96,655.61 L821.51,655.65 L822.07,655.68 L822.61,655.72 L823.15,655.76 L823.68,655.80 L824.21,655.84 L824.73,655.89 L825.25,655.94 L825.76,655.99 L826.27,656.04 L826.76,656.10 L827.26,656.16 L827.74,656.22 L828.22,656.28 L828.70,656.35 L829.16,656.41 L829.63,656.48 L830.08,656.56 L830.53,656.63 L830.97,656.71 L831.41,656.79 L831.84,656.87 L832.26,656.96 L832.68,657.05 L833.09,657.14 L833.50,657.23 L833.90,657.32 L834.29,657.42 L834.68,657.52 L835.06,657.62 L835.43,657.73 L835.80,657.84 L836.16,657.95 L836.51,658.06 L836.86,658.17 L837.21,658.29 L837.54,658.41 L837.87,658.53 L838.20,658.66 L838.52,658.78 L838.83,658.91 L839.14,659.04 L839.44,659.18 L839.73,659.32 L840.02,659.45 L840.31,659.59 L840.58,659.74 L840.86,659.88 L841.12,660.03 L841.39,660.18 L841.64,660.33 L841.89,660.49 L842.14,660.64 L842.38,660.80 L842.61,660.96 L842.84,661.12 L843.07,661.29 L843.29,661.45 L843.50,661.62 L843.71,661.79 L843.92,661.96 L844.12,662.14 L844.32,662.31 L844.51,662.49 L844.70,662.67 L844.88,662.85 L845.06,663.03 L845.23,663.21 L845.41,663.40 L845.57,663.58 L845.74,663.77 L845.90,663.96 L846.06,664.15 L846.21,664.35 L846.36,664.54 L846.51,664.73 L846.65,664.93 L846.79,665.13 L846.93,665.32 L847.07,665.52 L847.20,665.72 L847.33,665.93 L847.46,666.13 L847.59,666.33 L847.71,666.54 L847.83,666.74 L847.95,666.95 L848.07,667.15 L848.19,667.36 L848.30,667.57 L848.42,667.77 L848.53,667.98 L848.64,668.19 L848.75,668.40 L848.86,668.61 L848.97,668.82 L849.08,669.03 L849.19,669.24 L849.30,669.45 L849.41,669.66 L849.51,669.87 L849.62,670.08 L849.73,670.29 L849.84,670.50 L849.95,670.71 L850.05,670.92 L850.16,671.13 L850.28,671.34 L850.39,671.55 L850.50,671.76 L850.61,671.97 L850.73,672.18 L850.85,672.38 L850.96,672.59 L851.08,672.80 L851.21,673.00 L851.33,673.20 L851.46,673.41 L851.58,673.61 L851.72,673.81 L851.85,674.01 L851.98,674.21 L852.12,674.41 L852.26,674.61 L852.41,674.80 L852.55,675.00 L852.70,675.19 L852.86,675.38 L853.01,675.58 L853.18,675.76 L853.34,675.95 L853.51,676.14 L853.68,676.33 L853.85,676.51 L854.03,676.69 L854.22,676.87 L854.40,677.05 L854.60,677.23 L854.79,677.40 L854.99,677.58 L855.20,677.75 L855.41,677.92 L855.62,678.09 L855.84,678.25 L856.07,678.42 L856.29,678.58 L856.53,678.74 L856.77,678.90 L857.01,679.05 L857.26,679.21 L857.52,679.36 L857.78,679.51 L858.05,679.66 L858.32,679.80 L858.60,679.95 L858.88,680.09 L859.17,680.23 L859.46,680.36 L859.76,680.50 L860.07,680.63 L860.38,680.76 L860.70,680.89 L861.02,681.01 L861.35,681.13 L861.69,681.25 L862.03,681.37 L862.38,681.49 L862.74,681.60 L863.10,681.71 L863.46,681.82 L863.84,681.92 L864.22,682.02 L864.60,682.13 L864.99,682.22 L865.39,682.32 L865.80,682.41 L866.21,682.50 L866.62,682.59 L867.05,682.67 L867.48,682.76 L867.91,682.84 L868.36,682.92 L868.80,682.99 L869.26,683.06 L869.72,683.14 L870.19,683.20 L870.66,683.27 L871.14,683.33 L871.63,683.39 L872.12,683.45 L872.62,683.51 L873.12,683.56 L873.63,683.61 L874.14,683.66 L874.67,683.71 L875.19,683.75 L875.73,683.79 L876.27,683.83 L876.81,683.87 L877.36,683.91 L877.92,683.94 L878.48,683.97 L879.05,684.00 L879.62,684.02 L880.20,684.05 L880.78,684.07 L881.37,684.09 L881.96,684.11 L882.56,684.13 L883.16,684.14 L883.77,684.15 L884.38,684.16 L885.00,684.17 L885.62,684.18 L886.25,684.18 L886.88,684.18 L887.51,684.19 L888.15,684.19 L888.80,684.18 L889.45,684.18 L890.10,684.18 L890.75,684.17 L891.41,684.16 L892.08,684.15 L892.74,684.14 L893.41,684.13 L894.09,684.11 L894.76,684.10 L895.44,684.08 L896.13,684.07 L896.81,684.05 L897.50,684.03 L898.19,684.01 L898.89,683.98 L899.58,683.96 L900.28,683.94 L900.98,683.91 L901.68,683.89 L902.39,683.86 L903.09,683.84 L903.80,683.81 L904.51,683.78 L905.22,683.75 L905.94,683.72 L906.65,683.69 L907.36,683.66 L908.08,683.63 L908.79,683.60" fill="none" stroke="#0000ff" stroke-width="2.2"/><circle cx="908.8" cy="683.6" r="2.9" fill="#ff8000"/><circle cx="1020.5" cy="597.9" r="45" fill="none" stroke="#dc143c" stroke-width="2" stroke-dasharray="6.5 5.2"/><circle cx="1020.7" cy="552.9" r="10.4" fill="#f6d2da" stroke="#dc143c" stroke-width="2.7"/><line x1="1011" y1="552.9" x2="1030" y2="552.9" stroke="#ffffff" stroke-width="1.2" opacity="0.8"/><circle cx="1020.7" cy="552.9" r="4.7" fill="#dc143c" stroke="#111" stroke-width="1.5"/><path d="M463.90,874.20 L464.98,873.48 L466.06,872.76 L467.12,872.04 L468.18,871.33 L469.22,870.62 L470.23,869.92 L471.22,869.23 L472.19,868.54 L473.12,867.87 L474.01,867.20 L474.86,866.55 L475.67,865.91 L476.44,865.29 L477.15,864.68 L477.82,864.09 L478.42,863.52 L478.97,862.96 L479.46,862.43 L479.89,861.91 L480.26,861.42 L480.56,860.95 L480.80,860.50 L480.96,860.08 L481.07,859.68 L481.10,859.30 L481.07,858.96 L480.96,858.64 L480.80,858.34 L480.56,858.08 L480.26,857.84 L479.89,857.63 L479.46,857.45 L478.97,857.30 L478.42,857.18 L477.82,857.09 L477.15,857.03 L476.44,857.00 L475.67,857.00 L474.86,857.03 L474.01,857.09 L473.12,857.18 L472.19,857.30 L471.22,857.45 L470.23,857.63 L469.22,857.84 L468.18,858.08 L467.12,858.34 L466.06,858.64 L464.98,858.96 L463.90,859.30 L462.82,859.68 L461.74,860.08 L460.68,860.50 L459.62,860.95 L458.58,861.42 L457.57,861.91 L456.58,862.43 L455.61,862.96 L454.68,863.52 L453.79,864.09 L452.94,864.68 L452.13,865.29 L451.36,865.91 L450.65,866.55 L449.98,867.20 L449.38,867.87 L448.83,868.54 L448.34,869.23 L447.91,869.92 L447.54,870.62 L447.24,871.33 L447.00,872.04 L446.84,872.76 L446.73,873.48 L446.70,874.20 L446.73,874.92 L446.84,875.64 L447.00,876.36 L447.24,877.07 L447.54,877.78 L447.91,878.48 L448.34,879.17 L448.83,879.86 L449.38,880.53 L449.98,881.20 L450.65,881.85 L451.36,882.49 L452.13,883.11 L452.94,883.72 L453.79,884.31 L454.68,884.88 L455.61,885.44 L456.58,885.97 L457.57,886.49 L458.58,886.98 L459.62,887.45 L460.68,887.90 L461.74,888.32 L462.82,888.72 L463.90,889.10 L464.98,889.44 L466.06,889.76 L467.12,890.06 L468.18,890.32 L469.22,890.56 L470.23,890.77 L471.22,890.95 L472.19,891.10 L473.12,891.22 L474.01,891.31 L474.86,891.37 L475.67,891.40 L476.44,891.40 L477.15,891.37 L477.82,891.31 L478.42,891.22 L478.97,891.10 L479.46,890.95 L479.89,890.77 L480.26,890.56 L480.56,890.32 L480.80,890.06 L480.96,889.76 L481.07,889.44 L481.10,889.10 L481.07,888.72 L480.96,888.32 L480.80,887.90 L480.56,887.45 L480.26,886.98 L479.89,886.49 L479.46,885.97 L478.97,885.44 L478.42,884.88 L477.82,884.31 L477.15,883.72 L476.44,883.11 L475.67,882.49 L474.86,881.85 L474.01,881.20 L473.12,880.53 L472.19,879.86 L471.22,879.17 L470.23,878.48 L469.22,877.78 L468.18,877.07 L467.12,876.36 L466.06,875.64 L464.98,874.92 L463.90,874.20 L462.82,873.48 L461.74,872.76 L460.68,872.04 L459.62,871.33 L458.58,870.62 L457.57,869.92 L456.58,869.23 L455.61,868.54 L454.68,867.87 L453.79,867.20 L452.94,866.55 L452.13,865.91 L451.36,865.29 L450.65,864.68 L449.98,864.09 L449.38,863.52 L448.83,862.96 L448.34,862.43 L447.91,861.91 L447.54,861.42 L447.24,860.95 L447.00,860.50 L446.84,860.08 L446.73,859.68 L446.70,859.30 L446.73,858.96 L446.84,858.64 L447.00,858.34 L447.24,858.08 L447.54,857.84 L447.91,857.63 L448.34,857.45 L448.83,857.30 L449.38,857.18 L449.98,857.09 L450.65,857.03 L451.36,857.00 L452.13,857.00 L452.94,857.03 L453.79,857.09 L454.68,857.18 L455.61,857.30 L456.58,857.45 L457.57,857.63 L458.58,857.84 L459.62,858.08 L460.68,858.34 L461.74,858.64 L462.82,858.96 L463.90,859.30 L464.98,859.68 L466.06,860.08 L467.12,860.50 L468.18,860.95 L469.22,861.42 L470.23,861.91 L471.22,862.43 L472.19,862.96 L473.12,863.52 L474.01,864.09 L474.86,864.68 L475.67,865.29 L476.44,865.91 L477.15,866.55 L477.82,867.20 L478.42,867.87 L478.97,868.54 L479.46,869.23 L479.89,869.92 L480.26,870.62 L480.56,871.33 L480.80,872.04 L480.96,872.76 L481.07,873.48 L481.10,874.20 L481.07,874.92 L480.96,875.64 L480.80,876.36 L480.56,877.07 L480.26,877.78 L479.89,878.48 L479.46,879.17 L478.97,879.86 L478.42,880.53 L477.82,881.20 L477.15,881.85 L476.44,882.49 L475.67,883.11 L474.86,883.72 L474.01,884.31 L473.12,884.88 L472.19,885.44 L471.22,885.97 L470.23,886.49 L469.22,886.98 L468.18,887.45 L467.12,887.90 L466.06,888.32 L464.98,888.72 L463.90,889.10 L462.82,889.44 L461.74,889.76 L460.68,890.06 L459.62,890.32 L458.58,890.56 L457.57,890.77 L456.58,890.95 L455.61,891.10 L454.68,891.22 L453.79,891.31 L452.94,891.37 L452.13,891.40 L451.36,891.40 L450.65,891.37 L449.98,891.31 L449.38,891.22 L448.83,891.10 L448.34,890.95 L447.91,890.77 L447.54,890.56 L447.24,890.32 L447.00,890.06 L446.84,889.76 L446.73,889.44 L446.70,889.10 L446.73,888.72 L446.84,888.32 L447.00,887.90 L447.24,887.45 L447.54,886.98 L447.91,886.49 L448.34,885.97 L448.83,885.44 L449.38,884.88 L449.98,884.31 L450.65,883.72 L451.36,883.11 L452.13,882.49 L452.94,881.85 L453.79,881.20 L454.68,880.53 L455.61,879.86 L456.58,879.17 L457.57,878.48 L458.58,877.78 L459.62,877.07 L460.68,876.36 L461.74,875.64 L462.82,874.92 L463.90,874.20" fill="none" stroke="#33cc33" stroke-width="1.9"/><path d="M463.90,874.20 L464.98,873.48 L466.06,872.76 L467.12,872.04 L468.18,871.33 L469.22,870.62 L470.23,869.92 L471.22,869.23 L472.19,868.54 L473.12,867.87 L474.01,867.20 L474.86,866.55 L475.67,865.91 L476.44,865.29 L477.15,864.68 L477.82,864.09 L478.42,863.52 L478.97,862.96 L479.46,862.43 L479.89,861.91 L480.26,861.42 L480.56,860.95 L480.80,860.50 L480.96,860.08 L481.07,859.68 L481.10,859.30 L481.07,858.96 L480.96,858.64 L480.80,858.34 L480.56,858.08 L480.26,857.84 L479.89,857.63 L479.46,857.45 L478.97,857.30 L478.42,857.18 L477.82,857.09 L477.15,857.03 L476.44,857.00 L475.67,857.00 L474.86,857.03 L474.01,857.09 L473.12,857.18 L472.19,857.30 L471.22,857.45 L470.23,857.63 L469.22,857.84 L468.18,858.08 L467.12,858.34 L466.06,858.64 L464.98,858.96 L463.90,859.30 L462.82,859.68 L461.74,860.08 L460.68,860.50 L459.62,860.95 L458.58,861.42 L457.57,861.91 L456.58,862.43 L455.61,862.96 L454.68,863.52 L453.79,864.09 L452.94,864.68 L452.13,865.29 L451.36,865.91 L450.65,866.55 L449.98,867.20 L449.38,867.87 L448.83,868.54 L448.34,869.23 L447.91,869.92 L447.54,870.62 L447.24,871.33 L447.00,872.04 L446.84,872.76 L446.73,873.48 L446.70,874.20 L446.73,874.92 L446.84,875.64 L447.00,876.36 L447.24,877.07 L447.54,877.78 L447.91,878.48 L448.34,879.17 L448.83,879.86 L449.38,880.53 L449.98,881.20 L450.65,881.85 L451.36,882.49 L452.13,883.11 L452.94,883.72 L453.79,884.31 L454.68,884.88 L455.61,885.44 L456.58,885.97 L457.57,886.49 L458.58,886.98 L459.62,887.45 L460.68,887.90 L461.74,888.32 L462.82,888.72 L463.90,889.10 L464.98,889.44 L466.06,889.76 L467.12,890.06 L468.18,890.32 L469.22,890.56 L470.23,890.77 L471.22,890.95 L472.19,891.10 L473.12,891.22 L474.01,891.31 L474.86,891.37 L475.67,891.40 L476.44,891.40 L477.15,891.37 L477.82,891.31 L478.42,891.22 L478.97,891.10 L479.46,890.95 L479.89,890.77 L480.26,890.56 L480.56,890.32 L480.80,890.06 L480.96,889.76 L481.07,889.44 L481.10,889.10 L481.07,888.72 L480.96,888.32 L480.80,887.90 L480.56,887.45 L480.26,886.98 L479.89,886.49 L479.46,885.97 L478.97,885.44 L478.42,884.88 L477.82,884.31 L477.15,883.72 L476.44,883.11 L475.67,882.49 L474.86,881.85 L474.01,881.20 L473.12,880.53 L472.19,879.86 L471.22,879.17 L470.23,878.48 L469.22,877.78 L468.18,877.07 L467.12,876.36 L466.06,875.64 L464.98,874.92 L463.90,874.20 L462.82,873.48 L461.74,872.76 L460.68,872.04 L459.62,871.33 L458.58,870.62 L457.57,869.92 L456.58,869.23 L455.61,868.54 L454.68,867.87 L453.79,867.20 L452.94,866.55 L452.13,865.91 L451.36,865.29 L450.65,864.68 L449.98,864.09 L449.38,863.52 L448.83,862.96 L448.34,862.43 L447.91,861.91 L447.54,861.42 L447.24,860.95 L447.00,860.50 L446.84,860.08 L446.73,859.68 L446.70,859.30 L446.73,858.96 L446.84,858.64 L447.00,858.34 L447.24,858.08 L447.54,857.84 L447.91,857.63 L448.34,857.45 L448.83,857.30 L449.38,857.18 L449.98,857.09 L450.65,857.03 L451.36,857.00 L452.13,857.00 L452.94,857.03 L453.79,857.09 L454.68,857.18 L455.61,857.30 L456.58,857.45 L457.57,857.63 L458.58,857.84 L459.62,858.08 L460.68,858.34 L461.74,858.64 L462.82,858.96 L463.90,859.30 L464.98,859.68 L466.06,860.08 L467.12,860.50 L468.18,860.95 L469.22,861.42 L470.23,861.91 L471.22,862.43 L472.19,862.96 L473.12,863.52 L474.01,864.09 L474.86,864.68 L475.67,865.29 L476.44,865.91 L477.15,866.55 L477.82,867.20 L478.42,867.87 L478.97,868.54 L479.46,869.23 L479.89,869.92 L480.26,870.62 L480.56,871.33 L480.80,872.04 L480.96,872.76 L481.07,873.48 L481.10,874.20 L481.07,874.92 L480.96,875.64 L480.80,876.36 L480.56,877.07 L480.26,877.78 L479.89,878.48 L479.46,879.17 L478.97,879.86 L478.42,880.53 L477.82,881.20 L477.15,881.85 L476.44,882.49 L475.67,883.11 L474.86,883.72 L474.01,884.31 L473.12,884.88 L472.19,885.44 L471.22,885.97 L470.23,886.49 L469.22,886.98 L468.18,887.45 L467.12,887.90 L466.06,888.32 L464.98,888.72 L463.90,889.10 L462.82,889.44 L461.74,889.76 L460.68,890.06 L459.62,890.32 L458.58,890.56 L457.57,890.77 L456.58,890.95 L455.61,891.10 L454.68,891.22 L453.79,891.31 L452.94,891.37 L452.13,891.40 L451.36,891.40 L450.65,891.37 L449.98,891.31 L449.38,891.22 L448.83,891.10 L448.34,890.95 L447.91,890.77 L447.54,890.56 L447.24,890.32 L447.00,890.06 L446.84,889.76 L446.73,889.44 L446.70,889.10 L446.73,888.72 L446.84,888.32 L447.00,887.90 L447.24,887.45 L447.54,886.98 L447.91,886.49 L448.34,885.97 L448.83,885.44 L449.38,884.88 L449.98,884.31 L450.65,883.72 L451.36,883.11 L452.13,882.49 L452.94,881.85 L453.79,881.20 L454.68,880.53 L455.61,879.86 L456.58,879.17 L457.57,878.48 L458.58,877.78 L459.62,877.07 L460.68,876.36 L461.74,875.64 L462.82,874.92 L463.90,874.20" fill="none" stroke="#5a2a5a" stroke-width="1.0"/><line x1="430.3" y1="857.1" x2="430.3" y2="891.1" stroke="#ff0000" stroke-width="1.6"/><line x1="446.8" y1="907.2" x2="481.2" y2="907.2" stroke="#0000ff" stroke-width="1.6"/><line x1="430.3" y1="874.2" x2="505.6" y2="874.2" stroke="#222" stroke-width="1.3" stroke-dasharray="3 2.6"/><line x1="463.9" y1="832.4" x2="463.9" y2="907.2" stroke="#222" stroke-width="1.3" stroke-dasharray="3 2.6"/><path d="M463.90,832.40 L464.98,832.05 L466.06,831.70 L467.12,831.35 L468.18,831.01 L469.22,830.66 L470.23,830.31 L471.22,829.96 L472.19,829.61 L473.12,829.26 L474.01,828.91 L474.86,828.56 L475.67,828.22 L476.44,827.87 L477.15,827.52 L477.82,827.17 L478.42,826.82 L478.97,826.47 L479.46,826.12 L479.89,825.78 L480.26,825.43 L480.56,825.08 L480.80,824.73 L480.96,824.38 L481.07,824.03 L481.10,823.68 L481.07,823.33 L480.96,822.99 L480.80,822.64 L480.56,822.29 L480.26,821.94 L479.89,821.59 L479.46,821.24 L478.97,820.89 L478.42,820.55 L477.82,820.20 L477.15,819.85 L476.44,819.50 L475.67,819.15 L474.86,818.80 L474.01,818.45 L473.12,818.10 L472.19,817.76 L471.22,817.41 L470.23,817.06 L469.22,816.71 L468.18,816.36 L467.12,816.01 L466.06,815.66 L464.98,815.32 L463.90,814.97 L462.82,814.62 L461.74,814.27 L460.68,813.92 L459.62,813.57 L458.58,813.22 L457.57,812.87 L456.58,812.53 L455.61,812.18 L454.68,811.83 L453.79,811.48 L452.94,811.13 L452.13,810.78 L451.36,810.43 L450.65,810.09 L449.98,809.74 L449.38,809.39 L448.83,809.04 L448.34,808.69 L447.91,808.34 L447.54,807.99 L447.24,807.64 L447.00,807.30 L446.84,806.95 L446.73,806.60 L446.70,806.25 L446.73,805.90 L446.84,805.55 L447.00,805.20 L447.24,804.86 L447.54,804.51 L447.91,804.16 L448.34,803.81 L448.83,803.46 L449.38,803.11 L449.98,802.76 L450.65,802.41 L451.36,802.07 L452.13,801.72 L452.94,801.37 L453.79,801.02 L454.68,800.67 L455.61,800.32 L456.58,799.97 L457.57,799.63 L458.58,799.28 L459.62,798.93 L460.68,798.58 L461.74,798.23 L462.82,797.88 L463.90,797.53 L464.98,797.18 L466.06,796.84 L467.12,796.49 L468.18,796.14 L469.22,795.79 L470.23,795.44 L471.22,795.09 L472.19,794.74 L473.12,794.40 L474.01,794.05 L474.86,793.70 L475.67,793.35 L476.44,793.00 L477.15,792.65 L477.82,792.30 L478.42,791.95 L478.97,791.61 L479.46,791.26 L479.89,790.91 L480.26,790.56 L480.56,790.21 L480.80,789.86 L480.96,789.51 L481.07,789.17 L481.10,788.82 L481.07,788.47 L480.96,788.12 L480.80,787.77 L480.56,787.42 L480.26,787.07 L479.89,786.72 L479.46,786.38 L478.97,786.03 L478.42,785.68 L477.82,785.33 L477.15,784.98 L476.44,784.63 L475.67,784.28 L474.86,783.94 L474.01,783.59 L473.12,783.24 L472.19,782.89 L471.22,782.54 L470.23,782.19 L469.22,781.84 L468.18,781.49 L467.12,781.15 L466.06,780.80 L464.98,780.45 L463.90,780.10 L462.82,779.75 L461.74,779.40 L460.68,779.05 L459.62,778.71 L458.58,778.36 L457.57,778.01 L456.58,777.66 L455.61,777.31 L454.68,776.96 L453.79,776.61 L452.94,776.26 L452.13,775.92 L451.36,775.57 L450.65,775.22 L449.98,774.87 L449.38,774.52 L448.83,774.17 L448.34,773.82 L447.91,773.48 L447.54,773.13 L447.24,772.78 L447.00,772.43 L446.84,772.08 L446.73,771.73 L446.70,771.38 L446.73,771.03 L446.84,770.69 L447.00,770.34 L447.24,769.99 L447.54,769.64 L447.91,769.29 L448.34,768.94 L448.83,768.59 L449.38,768.25 L449.98,767.90 L450.65,767.55 L451.36,767.20 L452.13,766.85 L452.94,766.50 L453.79,766.15 L454.68,765.80 L455.61,765.46 L456.58,765.11 L457.57,764.76 L458.58,764.41 L459.62,764.06 L460.68,763.71 L461.74,763.36 L462.82,763.02 L463.90,762.67 L464.98,762.32 L466.06,761.97 L467.12,761.62 L468.18,761.27 L469.22,760.92 L470.23,760.57 L471.22,760.23 L472.19,759.88 L473.12,759.53 L474.01,759.18 L474.86,758.83 L475.67,758.48 L476.44,758.13 L477.15,757.79 L477.82,757.44 L478.42,757.09 L478.97,756.74 L479.46,756.39 L479.89,756.04 L480.26,755.69 L480.56,755.34 L480.80,755.00 L480.96,754.65 L481.07,754.30 L481.10,753.95 L481.07,753.60 L480.96,753.25 L480.80,752.90 L480.56,752.56 L480.26,752.21 L479.89,751.86 L479.46,751.51 L478.97,751.16 L478.42,750.81 L477.82,750.46 L477.15,750.11 L476.44,749.77 L475.67,749.42 L474.86,749.07 L474.01,748.72 L473.12,748.37 L472.19,748.02 L471.22,747.67 L470.23,747.33 L469.22,746.98 L468.18,746.63 L467.12,746.28 L466.06,745.93 L464.98,745.58 L463.90,745.23 L462.82,744.88 L461.74,744.54 L460.68,744.19 L459.62,743.84 L458.58,743.49 L457.57,743.14 L456.58,742.79 L455.61,742.44 L454.68,742.10 L453.79,741.75 L452.94,741.40 L452.13,741.05 L451.36,740.70 L450.65,740.35 L449.98,740.00 L449.38,739.65 L448.83,739.31 L448.34,738.96 L447.91,738.61 L447.54,738.26 L447.24,737.91 L447.00,737.56 L446.84,737.21 L446.73,736.87 L446.70,736.52 L446.73,736.17 L446.84,735.82 L447.00,735.47 L447.24,735.12 L447.54,734.77 L447.91,734.42 L448.34,734.08 L448.83,733.73 L449.38,733.38 L449.98,733.03 L450.65,732.68 L451.36,732.33 L452.13,731.98 L452.94,731.64 L453.79,731.29 L454.68,730.94 L455.61,730.59 L456.58,730.24 L457.57,729.89 L458.58,729.54 L459.62,729.19 L460.68,728.85 L461.74,728.50 L462.82,728.15 L463.90,727.80" fill="none" stroke="#800080" stroke-width="1.4"/><path d="M505.60,874.20 L505.95,873.48 L506.30,872.76 L506.65,872.04 L507.00,871.33 L507.35,870.62 L507.70,869.92 L508.05,869.23 L508.40,868.54 L508.75,867.87 L509.10,867.20 L509.45,866.55 L509.80,865.91 L510.15,865.29 L510.50,864.68 L510.85,864.09 L511.20,863.52 L511.55,862.96 L511.90,862.43 L512.25,861.91 L512.60,861.42 L512.95,860.95 L513.30,860.50 L513.65,860.08 L514.00,859.68 L514.35,859.30 L514.70,858.96 L515.05,858.64 L515.40,858.34 L515.75,858.08 L516.10,857.84 L516.45,857.63 L516.80,857.45 L517.15,857.30 L517.50,857.18 L517.85,857.09 L518.20,857.03 L518.55,857.00 L518.90,857.00 L519.25,857.03 L519.60,857.09 L519.95,857.18 L520.30,857.30 L520.65,857.45 L521.00,857.63 L521.35,857.84 L521.70,858.08 L522.05,858.34 L522.40,858.64 L522.75,858.96 L523.10,859.30 L523.45,859.68 L523.80,860.08 L524.15,860.50 L524.50,860.95 L524.85,861.42 L525.20,861.91 L525.55,862.43 L525.90,862.96 L526.25,863.52 L526.60,864.09 L526.95,864.68 L527.30,865.29 L527.65,865.91 L528.00,866.55 L528.35,867.20 L528.70,867.87 L529.05,868.54 L529.40,869.23 L529.75,869.92 L530.10,870.62 L530.45,871.33 L530.80,872.04 L531.15,872.76 L531.50,873.48 L531.85,874.20 L532.20,874.92 L532.55,875.64 L532.90,876.36 L533.25,877.07 L533.60,877.78 L533.95,878.48 L534.30,879.17 L534.65,879.86 L535.00,880.53 L535.35,881.20 L535.70,881.85 L536.05,882.49 L536.40,883.11 L536.75,883.72 L537.10,884.31 L537.45,884.88 L537.80,885.44 L538.15,885.97 L538.50,886.49 L538.85,886.98 L539.20,887.45 L539.55,887.90 L539.90,888.32 L540.25,888.72 L540.60,889.10 L540.95,889.44 L541.30,889.76 L541.65,890.06 L542.00,890.32 L542.35,890.56 L542.70,890.77 L543.05,890.95 L543.40,891.10 L543.75,891.22 L544.10,891.31 L544.45,891.37 L544.80,891.40 L545.15,891.40 L545.50,891.37 L545.85,891.31 L546.20,891.22 L546.55,891.10 L546.90,890.95 L547.25,890.77 L547.60,890.56 L547.95,890.32 L548.30,890.06 L548.65,889.76 L549.00,889.44 L549.35,889.10 L549.70,888.72 L550.05,888.32 L550.40,887.90 L550.75,887.45 L551.10,886.98 L551.45,886.49 L551.80,885.97 L552.15,885.44 L552.50,884.88 L552.85,884.31 L553.20,883.72 L553.55,883.11 L553.90,882.49 L554.25,881.85 L554.60,881.20 L554.95,880.53 L555.30,879.86 L555.65,879.17 L556.00,878.48 L556.35,877.78 L556.70,877.07 L557.05,876.36 L557.40,875.64 L557.75,874.92 L558.10,874.20 L558.45,873.48 L558.80,872.76 L559.15,872.04 L559.50,871.33 L559.85,870.62 L560.20,869.92 L560.55,869.23 L560.90,868.54 L561.25,867.87 L561.60,867.20 L561.95,866.55 L562.30,865.91 L562.65,865.29 L563.00,864.68 L563.35,864.09 L563.70,863.52 L564.05,862.96 L564.40,862.43 L564.75,861.91 L565.10,861.42 L565.45,860.95 L565.80,860.50 L566.15,860.08 L566.50,859.68 L566.85,859.30 L567.20,858.96 L567.55,858.64 L567.90,858.34 L568.25,858.08 L568.60,857.84 L568.95,857.63 L569.30,857.45 L569.65,857.30 L570.00,857.18 L570.35,857.09 L570.70,857.03 L571.05,857.00 L571.40,857.00 L571.75,857.03 L572.10,857.09 L572.45,857.18 L572.80,857.30 L573.15,857.45 L573.50,857.63 L573.85,857.84 L574.20,858.08 L574.55,858.34 L574.90,858.64 L575.25,858.96 L575.60,859.30 L575.95,859.68 L576.30,860.08 L576.65,860.50 L577.00,860.95 L577.35,861.42 L577.70,861.91 L578.05,862.43 L578.40,862.96 L578.75,863.52 L579.10,864.09 L579.45,864.68 L579.80,865.29 L580.15,865.91 L580.50,866.55 L580.85,867.20 L581.20,867.87 L581.55,868.54 L581.90,869.23 L582.25,869.92 L582.60,870.62 L582.95,871.33 L583.30,872.04 L583.65,872.76 L584.00,873.48 L584.35,874.20 L584.70,874.92 L585.05,875.64 L585.40,876.36 L585.75,877.07 L586.10,877.78 L586.45,878.48 L586.80,879.17 L587.15,879.86 L587.50,880.53 L587.85,881.20 L588.20,881.85 L588.55,882.49 L588.90,883.11 L589.25,883.72 L589.60,884.31 L589.95,884.88 L590.30,885.44 L590.65,885.97 L591.00,886.49 L591.35,886.98 L591.70,887.45 L592.05,887.90 L592.40,888.32 L592.75,888.72 L593.10,889.10 L593.45,889.44 L593.80,889.76 L594.15,890.06 L594.50,890.32 L594.85,890.56 L595.20,890.77 L595.55,890.95 L595.90,891.10 L596.25,891.22 L596.60,891.31 L596.95,891.37 L597.30,891.40 L597.65,891.40 L598.00,891.37 L598.35,891.31 L598.70,891.22 L599.05,891.10 L599.40,890.95 L599.75,890.77 L600.10,890.56 L600.45,890.32 L600.80,890.06 L601.15,889.76 L601.50,889.44 L601.85,889.10 L602.20,888.72 L602.55,888.32 L602.90,887.90 L603.25,887.45 L603.60,886.98 L603.95,886.49 L604.30,885.97 L604.65,885.44 L605.00,884.88 L605.35,884.31 L605.70,883.72 L606.05,883.11 L606.40,882.49 L606.75,881.85 L607.10,881.20 L607.45,880.53 L607.80,879.86 L608.15,879.17 L608.50,878.48 L608.85,877.78 L609.20,877.07 L609.55,876.36 L609.90,875.64 L610.25,874.92 L610.60,874.20" fill="none" stroke="#800080" stroke-width="1.4"/><circle cx="430.3" cy="874.2" r="2.0" fill="#ff8000"/><circle cx="463.9" cy="907.2" r="2.0" fill="#ff8000"/><circle cx="505.6" cy="874.2" r="2.0" fill="#ff8000"/><circle cx="463.9" cy="832.4" r="2.0" fill="#ff8000"/><circle cx="463.9" cy="874.2" r="2.0" fill="#ff8000"/><path d="M543.90,797.30 L542.92,796.64 L541.93,795.99 L540.95,795.33 L539.98,794.68 L539.00,794.03 L538.03,793.38 L537.07,792.73 L536.12,792.08 L535.17,791.43 L534.23,790.79 L533.30,790.15 L532.38,789.52 L531.47,788.88 L530.57,788.25 L529.69,787.63 L528.82,787.01 L527.97,786.39 L527.13,785.78 L526.31,785.17 L525.50,784.57 L524.72,783.97 L523.95,783.38 L523.20,782.80 L522.47,782.22 L521.77,781.65 L521.08,781.09 L520.42,780.53 L519.78,779.98 L519.17,779.44 L518.58,778.90 L518.01,778.38 L517.47,777.86 L516.96,777.35 L516.47,776.85 L516.01,776.36 L515.58,775.87 L515.17,775.40 L514.80,774.94 L514.45,774.48 L514.13,774.04 L513.84,773.61 L513.58,773.18 L513.35,772.77 L513.15,772.37 L512.99,771.98 L512.85,771.60 L512.74,771.23 L512.66,770.87 L512.62,770.53 L512.60,770.19 L512.62,769.87 L512.66,769.56 L512.74,769.26 L512.85,768.98 L512.99,768.71 L513.15,768.45 L513.35,768.20 L513.58,767.96 L513.84,767.74 L514.13,767.53 L514.45,767.34 L514.80,767.15 L515.17,766.98 L515.58,766.83 L516.01,766.68 L516.47,766.55 L516.96,766.44 L517.47,766.34 L518.01,766.25 L518.58,766.17 L519.17,766.11 L519.78,766.06 L520.42,766.03 L521.08,766.01 L521.77,766.00 L522.47,766.01 L523.20,766.03 L523.95,766.06 L524.72,766.11 L525.50,766.17 L526.31,766.25 L527.13,766.34 L527.97,766.44 L528.82,766.55 L529.69,766.68 L530.57,766.83 L531.47,766.98 L532.38,767.15 L533.30,767.34 L534.23,767.53 L535.17,767.74 L536.12,767.96 L537.07,768.20 L538.03,768.45 L539.00,768.71 L539.98,768.98 L540.95,769.26 L541.93,769.56 L542.92,769.87 L543.90,770.19 L544.88,770.53 L545.87,770.87 L546.85,771.23 L547.82,771.60 L548.80,771.98 L549.77,772.37 L550.73,772.77 L551.68,773.18 L552.63,773.61 L553.57,774.04 L554.50,774.48 L555.42,774.94 L556.33,775.40 L557.23,775.87 L558.11,776.36 L558.98,776.85 L559.83,777.35 L560.67,777.86 L561.49,778.38 L562.30,778.90 L563.08,779.44 L563.85,779.98 L564.60,780.53 L565.33,781.09 L566.03,781.65 L566.72,782.22 L567.38,782.80 L568.02,783.38 L568.63,783.97 L569.22,784.57 L569.79,785.17 L570.33,785.78 L570.84,786.39 L571.33,787.01 L571.79,787.63 L572.22,788.25 L572.63,788.88 L573.00,789.52 L573.35,790.15 L573.67,790.79 L573.96,791.43 L574.22,792.08 L574.45,792.73 L574.65,793.38 L574.81,794.03 L574.95,794.68 L575.06,795.33 L575.14,795.99 L575.18,796.64 L575.20,797.30 L575.18,797.96 L575.14,798.61 L575.06,799.27 L574.95,799.92 L574.81,800.57 L574.65,801.22 L574.45,801.87 L574.22,802.52 L573.96,803.17 L573.67,803.81 L573.35,804.45 L573.00,805.08 L572.63,805.72 L572.22,806.35 L571.79,806.97 L571.33,807.59 L570.84,808.21 L570.33,808.82 L569.79,809.43 L569.22,810.03 L568.63,810.63 L568.02,811.22 L567.38,811.80 L566.72,812.38 L566.03,812.95 L565.33,813.51 L564.60,814.07 L563.85,814.62 L563.08,815.16 L562.30,815.70 L561.49,816.22 L560.67,816.74 L559.83,817.25 L558.98,817.75 L558.11,818.24 L557.23,818.73 L556.33,819.20 L555.42,819.66 L554.50,820.12 L553.57,820.56 L552.63,820.99 L551.68,821.42 L550.73,821.83 L549.77,822.23 L548.80,822.62 L547.82,823.00 L546.85,823.37 L545.87,823.73 L544.88,824.07 L543.90,824.41 L542.92,824.73 L541.93,825.04 L540.95,825.34 L539.98,825.62 L539.00,825.89 L538.03,826.15 L537.07,826.40 L536.12,826.64 L535.17,826.86 L534.23,827.07 L533.30,827.26 L532.38,827.45 L531.47,827.62 L530.57,827.77 L529.69,827.92 L528.82,828.05 L527.97,828.16 L527.13,828.26 L526.31,828.35 L525.50,828.43 L524.72,828.49 L523.95,828.54 L523.20,828.57 L522.47,828.59 L521.77,828.60 L521.08,828.59 L520.42,828.57 L519.78,828.54 L519.17,828.49 L518.58,828.43 L518.01,828.35 L517.47,828.26 L516.96,828.16 L516.47,828.05 L516.01,827.92 L515.58,827.77 L515.17,827.62 L514.80,827.45 L514.45,827.26 L514.13,827.07 L513.84,826.86 L513.58,826.64 L513.35,826.40 L513.15,826.15 L512.99,825.89 L512.85,825.62 L512.74,825.34 L512.66,825.04 L512.62,824.73 L512.60,824.41 L512.62,824.07 L512.66,823.73 L512.74,823.37 L512.85,823.00 L512.99,822.62 L513.15,822.23 L513.35,821.83 L513.58,821.42 L513.84,820.99 L514.13,820.56 L514.45,820.12 L514.80,819.66 L515.17,819.20 L515.58,818.73 L516.01,818.24 L516.47,817.75 L516.96,817.25 L517.47,816.74 L518.01,816.22 L518.58,815.70 L519.17,815.16 L519.78,814.62 L520.42,814.07 L521.08,813.51 L521.77,812.95 L522.47,812.38 L523.20,811.80 L523.95,811.22 L524.72,810.63 L525.50,810.03 L526.31,809.43 L527.13,808.82 L527.97,808.21 L528.82,807.59 L529.69,806.97 L530.57,806.35 L531.47,805.72 L532.38,805.08 L533.30,804.45 L534.23,803.81 L535.17,803.17 L536.12,802.52 L537.07,801.87 L538.03,801.22 L539.00,800.57 L539.98,799.92 L540.95,799.27 L541.93,798.61 L542.92,797.96 L543.90,797.30" fill="none" stroke="#808080" stroke-width="1.6"/><path d="M543.90,797.30 L544.88,796.64 L545.87,795.99 L546.85,795.33 L547.82,794.68 L548.80,794.03 L549.77,793.38 L550.73,792.73 L551.68,792.08 L552.63,791.43 L553.57,790.79 L554.50,790.15 L555.42,789.52 L556.33,788.88 L557.23,788.25 L558.11,787.63 L558.98,787.01 L559.83,786.39 L560.67,785.78 L561.49,785.17 L562.30,784.57 L563.08,783.97 L563.85,783.38 L564.60,782.80 L565.33,782.22 L566.03,781.65 L566.72,781.09 L567.38,780.53 L568.02,779.98 L568.63,779.44 L569.22,778.90 L569.79,778.38 L570.33,777.86 L570.84,777.35 L571.33,776.85 L571.79,776.36 L572.22,775.87 L572.63,775.40 L573.00,774.94 L573.35,774.48 L573.67,774.04 L573.96,773.61 L574.22,773.18 L574.45,772.77 L574.65,772.37 L574.81,771.98 L574.95,771.60 L575.06,771.23 L575.14,770.87 L575.18,770.53 L575.20,770.19 L575.18,769.87 L575.14,769.56 L575.06,769.26 L574.95,768.98 L574.81,768.71 L574.65,768.45 L574.45,768.20 L574.22,767.96 L573.96,767.74 L573.67,767.53 L573.35,767.34 L573.00,767.15 L572.63,766.98 L572.22,766.83 L571.79,766.68 L571.33,766.55 L570.84,766.44 L570.33,766.34 L569.79,766.25 L569.22,766.17 L568.63,766.11 L568.02,766.06 L567.38,766.03 L566.72,766.01 L566.03,766.00 L565.33,766.01 L564.60,766.03 L563.85,766.06 L563.08,766.11 L562.30,766.17 L561.49,766.25 L560.67,766.34 L559.83,766.44 L558.98,766.55 L558.11,766.68 L557.23,766.83 L556.33,766.98 L555.42,767.15 L554.50,767.34 L553.57,767.53 L552.63,767.74 L551.68,767.96 L550.73,768.20 L549.77,768.45 L548.80,768.71 L547.82,768.98 L546.85,769.26 L545.87,769.56 L544.88,769.87 L543.90,770.19 L542.92,770.53 L541.93,770.87 L540.95,771.23 L539.98,771.60 L539.00,771.98 L538.03,772.37 L537.07,772.77 L536.12,773.18 L535.17,773.61 L534.23,774.04 L533.30,774.48 L532.38,774.94 L531.47,775.40 L530.57,775.87 L529.69,776.36 L528.82,776.85 L527.97,777.35 L527.13,777.86 L526.31,778.38 L525.50,778.90 L524.72,779.44 L523.95,779.98 L523.20,780.53 L522.47,781.09 L521.77,781.65 L521.08,782.22 L520.42,782.80 L519.78,783.38 L519.17,783.97 L518.58,784.57 L518.01,785.17 L517.47,785.78 L516.96,786.39 L516.47,787.01 L516.01,787.63 L515.58,788.25 L515.17,788.88 L514.80,789.52 L514.45,790.15 L514.13,790.79 L513.84,791.43 L513.58,792.08 L513.35,792.73 L513.15,793.38 L512.99,794.03 L512.85,794.68 L512.74,795.33 L512.66,795.99 L512.62,796.64 L512.60,797.30 L512.62,797.96 L512.66,798.61 L512.74,799.27 L512.85,799.92 L512.99,800.57 L513.15,801.22 L513.35,801.87 L513.58,802.52 L513.84,803.17 L514.13,803.81 L514.45,804.45 L514.80,805.08 L515.17,805.72 L515.58,806.35 L516.01,806.97 L516.47,807.59 L516.96,808.21 L517.47,808.82 L518.01,809.43 L518.58,810.03 L519.17,810.63 L519.78,811.22 L520.42,811.80 L521.08,812.38 L521.77,812.95 L522.47,813.51 L523.20,814.07 L523.95,814.62 L524.72,815.16 L525.50,815.70 L526.31,816.22 L527.13,816.74 L527.97,817.25 L528.82,817.75 L529.69,818.24 L530.57,818.73 L531.47,819.20 L532.38,819.66 L533.30,820.12 L534.23,820.56 L535.17,820.99 L536.12,821.42 L537.07,821.83 L538.03,822.23 L539.00,822.62 L539.98,823.00 L540.95,823.37 L541.93,823.73 L542.92,824.07 L543.90,824.41 L544.88,824.73 L545.87,825.04 L546.85,825.34 L547.82,825.62 L548.80,825.89 L549.77,826.15 L550.73,826.40 L551.68,826.64 L552.63,826.86 L553.57,827.07 L554.50,827.26 L555.42,827.45 L556.33,827.62 L557.23,827.77 L558.11,827.92 L558.98,828.05 L559.83,828.16 L560.67,828.26 L561.49,828.35 L562.30,828.43 L563.08,828.49 L563.85,828.54 L564.60,828.57 L565.33,828.59 L566.03,828.60 L566.72,828.59 L567.38,828.57 L568.02,828.54 L568.63,828.49 L569.22,828.43 L569.79,828.35 L570.33,828.26 L570.84,828.16 L571.33,828.05 L571.79,827.92 L572.22,827.77 L572.63,827.62 L573.00,827.45 L573.35,827.26 L573.67,827.07 L573.96,826.86 L574.22,826.64 L574.45,826.40 L574.65,826.15 L574.81,825.89 L574.95,825.62 L575.06,825.34 L575.14,825.04 L575.18,824.73 L575.20,824.41 L575.18,824.07 L575.14,823.73 L575.06,823.37 L574.95,823.00 L574.81,822.62 L574.65,822.23 L574.45,821.83 L574.22,821.42 L573.96,820.99 L573.67,820.56 L573.35,820.12 L573.00,819.66 L572.63,819.20 L572.22,818.73 L571.79,818.24 L571.33,817.75 L570.84,817.25 L570.33,816.74 L569.79,816.22 L569.22,815.70 L568.63,815.16 L568.02,814.62 L567.38,814.07 L566.72,813.51 L566.03,812.95 L565.33,812.38 L564.60,811.80 L563.85,811.22 L563.08,810.63 L562.30,810.03 L561.49,809.43 L560.67,808.82 L559.83,808.21 L558.98,807.59 L558.11,806.97 L557.23,806.35 L556.33,805.72 L555.42,805.08 L554.50,804.45 L553.57,803.81 L552.63,803.17 L551.68,802.52 L550.73,801.87 L549.77,801.22 L548.80,800.57 L547.82,799.92 L546.85,799.27 L545.87,798.61 L544.88,797.96 L543.90,797.30" fill="none" stroke="#00ee00" stroke-width="3"/><circle cx="543.9" cy="797.3" r="4.6" fill="#ff8000" stroke="#000" stroke-width="1.5"/><path d="M711.80,774.20 L711.79,774.20 L711.77,774.20 L711.72,774.19 L711.67,774.19 L711.59,774.18 L711.50,774.17 L711.39,774.15 L711.27,774.14 L711.13,774.12 L710.97,774.11 L710.80,774.09 L710.61,774.07 L710.41,774.04 L710.19,774.02 L709.96,773.99 L709.71,773.96 L709.45,773.93 L709.17,773.90 L708.88,773.87 L708.57,773.83 L708.25,773.79 L707.92,773.75 L707.58,773.71 L707.22,773.67 L706.85,773.62 L706.47,773.58 L706.08,773.53 L705.67,773.48 L705.26,773.43 L704.83,773.37 L704.40,773.32 L703.96,773.26 L703.50,773.20 L703.04,773.14 L702.57,773.08 L702.10,773.01 L701.61,772.95 L701.12,772.88 L700.62,772.81 L700.12,772.74 L699.61,772.67 L699.10,772.59 L698.59,772.52 L698.07,772.44 L697.54,772.36 L697.02,772.28 L696.49,772.19 L695.96,772.11 L695.43,772.02 L694.90,771.94 L694.37,771.85 L693.84,771.76 L693.31,771.66 L692.78,771.57 L692.26,771.47 L691.73,771.38 L691.21,771.28 L690.70,771.18 L690.19,771.08 L689.68,770.97 L689.18,770.87 L688.68,770.76 L688.19,770.65 L687.70,770.54 L687.23,770.43 L686.76,770.32 L686.30,770.21 L685.84,770.09 L685.40,769.98 L684.97,769.86 L684.54,769.74 L684.13,769.62 L683.72,769.50 L683.33,769.37 L682.95,769.25 L682.58,769.12 L682.22,769.00 L681.88,768.87 L681.55,768.74 L681.23,768.61 L680.92,768.48 L680.63,768.34 L680.35,768.21 L680.09,768.07 L679.84,767.94 L679.61,767.80 L679.39,767.66 L679.19,767.52 L679.00,767.38 L678.83,767.23 L678.67,767.09 L678.53,766.95 L678.41,766.80 L678.30,766.65 L678.21,766.50 L678.13,766.36 L678.08,766.21 L678.03,766.05 L678.01,765.90 L678.00,765.75 L678.01,765.60 L678.03,765.44 L678.08,765.29 L678.13,765.13 L678.21,764.97 L678.30,764.81 L678.41,764.66 L678.53,764.50 L678.67,764.34 L678.83,764.17 L679.00,764.01 L679.19,763.85 L679.39,763.69 L679.61,763.52 L679.84,763.36 L680.09,763.19 L680.35,763.02 L680.63,762.86 L680.92,762.69 L681.23,762.52 L681.55,762.35 L681.88,762.18 L682.22,762.01 L682.58,761.84 L682.95,761.67 L683.33,761.50 L683.72,761.33 L684.13,761.16 L684.54,760.99 L684.97,760.81 L685.40,760.64 L685.84,760.47 L686.30,760.29 L686.76,760.12 L687.23,759.94 L687.70,759.77 L688.19,759.59 L688.68,759.42 L689.18,759.24 L689.68,759.07 L690.19,758.89 L690.70,758.71 L691.21,758.54 L691.73,758.36 L692.26,758.18 L692.78,758.01 L693.31,757.83 L693.84,757.65 L694.37,757.48 L694.90,757.30 L695.43,757.12 L695.96,756.95 L696.49,756.77 L697.02,756.59 L697.54,756.42 L698.07,756.24 L698.59,756.06 L699.10,755.89 L699.61,755.71 L700.12,755.53 L700.62,755.36 L701.12,755.18 L701.61,755.01 L702.10,754.83 L702.57,754.66 L703.04,754.48 L703.50,754.31 L703.96,754.13 L704.40,753.96 L704.83,753.79 L705.26,753.61 L705.67,753.44 L706.08,753.27 L706.47,753.10 L706.85,752.93 L707.22,752.76 L707.58,752.59 L707.92,752.42 L708.25,752.25 L708.57,752.08 L708.88,751.91 L709.17,751.74 L709.45,751.58 L709.71,751.41 L709.96,751.24 L710.19,751.08 L710.41,750.91 L710.61,750.75 L710.80,750.59 L710.97,750.43 L711.13,750.26 L711.27,750.10 L711.39,749.94 L711.50,749.79 L711.59,749.63 L711.67,749.47 L711.72,749.31 L711.77,749.16 L711.79,749.00 L711.80,748.85 L711.79,748.70 L711.77,748.55 L711.72,748.39 L711.67,748.24 L711.59,748.10 L711.50,747.95 L711.39,747.80 L711.27,747.65 L711.13,747.51 L710.97,747.37 L710.80,747.22 L710.61,747.08 L710.41,746.94 L710.19,746.80 L709.96,746.66 L709.71,746.53 L709.45,746.39 L709.17,746.26 L708.88,746.12 L708.57,745.99 L708.25,745.86 L707.92,745.73 L707.58,745.60 L707.22,745.48 L706.85,745.35 L706.47,745.23 L706.08,745.10 L705.67,744.98 L705.26,744.86 L704.83,744.74 L704.40,744.62 L703.96,744.51 L703.50,744.39 L703.04,744.28 L702.57,744.17 L702.10,744.06 L701.61,743.95 L701.12,743.84 L700.62,743.73 L700.12,743.63 L699.61,743.52 L699.10,743.42 L698.59,743.32 L698.07,743.22 L697.54,743.13 L697.02,743.03 L696.49,742.94 L695.96,742.84 L695.43,742.75 L694.90,742.66 L694.37,742.58 L693.84,742.49 L693.31,742.41 L692.78,742.32 L692.26,742.24 L691.73,742.16 L691.21,742.08 L690.70,742.01 L690.19,741.93 L689.68,741.86 L689.18,741.79 L688.68,741.72 L688.19,741.65 L687.70,741.59 L687.23,741.52 L686.76,741.46 L686.30,741.40 L685.84,741.34 L685.40,741.28 L684.97,741.23 L684.54,741.17 L684.13,741.12 L683.72,741.07 L683.33,741.02 L682.95,740.98 L682.58,740.93 L682.22,740.89 L681.88,740.85 L681.55,740.81 L681.23,740.77 L680.92,740.73 L680.63,740.70 L680.35,740.67 L680.09,740.64 L679.84,740.61 L679.61,740.58 L679.39,740.56 L679.19,740.53 L679.00,740.51 L678.83,740.49 L678.67,740.48 L678.53,740.46 L678.41,740.45 L678.30,740.43 L678.21,740.42 L678.13,740.41 L678.08,740.41 L678.03,740.40 L678.01,740.40 L678.00,740.40" fill="none" stroke="#0000ff" stroke-width="2.6"/><path d="M711.80,774.20 L711.79,774.20 L711.77,774.20 L711.72,774.19 L711.67,774.19 L711.59,774.18 L711.50,774.17 L711.39,774.15 L711.27,774.14 L711.13,774.12 L710.97,774.11 L710.80,774.09 L710.61,774.07 L710.41,774.04 L710.19,774.02 L709.96,773.99 L709.71,773.96 L709.45,773.93 L709.17,773.90 L708.88,773.87 L708.57,773.83 L708.25,773.79 L707.92,773.75 L707.58,773.71 L707.22,773.67 L706.85,773.62 L706.47,773.58 L706.08,773.53 L705.67,773.48 L705.26,773.43 L704.83,773.37 L704.40,773.32 L703.96,773.26 L703.50,773.20 L703.04,773.14 L702.57,773.08 L702.10,773.01 L701.61,772.95 L701.12,772.88 L700.62,772.81 L700.12,772.74 L699.61,772.67 L699.10,772.59 L698.59,772.52 L698.07,772.44 L697.54,772.36 L697.02,772.28 L696.49,772.19 L695.96,772.11 L695.43,772.02 L694.90,771.94 L694.37,771.85 L693.84,771.76 L693.31,771.66 L692.78,771.57 L692.26,771.47 L691.73,771.38 L691.21,771.28 L690.70,771.18 L690.19,771.08 L689.68,770.97 L689.18,770.87 L688.68,770.76 L688.19,770.65 L687.70,770.54 L687.23,770.43 L686.76,770.32 L686.30,770.21 L685.84,770.09 L685.40,769.98 L684.97,769.86 L684.54,769.74 L684.13,769.62 L683.72,769.50 L683.33,769.37 L682.95,769.25 L682.58,769.12 L682.22,769.00 L681.88,768.87 L681.55,768.74 L681.23,768.61 L680.92,768.48 L680.63,768.34 L680.35,768.21 L680.09,768.07 L679.84,767.94 L679.61,767.80 L679.39,767.66 L679.19,767.52 L679.00,767.38 L678.83,767.23 L678.67,767.09 L678.53,766.95 L678.41,766.80 L678.30,766.65 L678.21,766.50 L678.13,766.36 L678.08,766.21 L678.03,766.05 L678.01,765.90 L678.00,765.75 L678.01,765.60 L678.03,765.44 L678.08,765.29 L678.13,765.13 L678.21,764.97 L678.30,764.81 L678.41,764.66 L678.53,764.50 L678.67,764.34 L678.83,764.17 L679.00,764.01 L679.19,763.85 L679.39,763.69 L679.61,763.52 L679.84,763.36 L680.09,763.19 L680.35,763.02 L680.63,762.86 L680.92,762.69 L681.23,762.52 L681.55,762.35 L681.88,762.18 L682.22,762.01 L682.58,761.84 L682.95,761.67 L683.33,761.50 L683.72,761.33 L684.13,761.16 L684.54,760.99 L684.97,760.81 L685.40,760.64 L685.84,760.47 L686.30,760.29 L686.76,760.12 L687.23,759.94 L687.70,759.77 L688.19,759.59 L688.68,759.42 L689.18,759.24 L689.68,759.07 L690.19,758.89 L690.70,758.71 L691.21,758.54 L691.73,758.36 L692.26,758.18 L692.78,758.01 L693.31,757.83 L693.84,757.65 L694.37,757.48 L694.90,757.30 L695.43,757.12 L695.96,756.95 L696.49,756.77 L697.02,756.59 L697.54,756.42 L698.07,756.24 L698.59,756.06 L699.10,755.89 L699.61,755.71 L700.12,755.53 L700.62,755.36 L701.12,755.18 L701.61,755.01 L702.10,754.83 L702.57,754.66 L703.04,754.48 L703.50,754.31 L703.96,754.13 L704.40,753.96 L704.83,753.79 L705.26,753.61 L705.67,753.44 L706.08,753.27 L706.47,753.10 L706.85,752.93 L707.22,752.76 L707.58,752.59 L707.92,752.42 L708.25,752.25 L708.57,752.08 L708.88,751.91 L709.17,751.74 L709.45,751.58 L709.71,751.41 L709.96,751.24 L710.19,751.08 L710.41,750.91 L710.61,750.75 L710.80,750.59 L710.97,750.43 L711.13,750.26 L711.27,750.10 L711.39,749.94 L711.50,749.79 L711.59,749.63 L711.67,749.47 L711.72,749.31 L711.77,749.16 L711.79,749.00 L711.80,748.85 L711.79,748.70 L711.77,748.55 L711.72,748.39 L711.67,748.24 L711.59,748.10 L711.50,747.95 L711.39,747.80 L711.27,747.65 L711.13,747.51 L710.97,747.37 L710.80,747.22 L710.61,747.08 L710.41,746.94 L710.19,746.80 L709.96,746.66 L709.71,746.53 L709.45,746.39 L709.17,746.26 L708.88,746.12 L708.57,745.99 L708.25,745.86 L707.92,745.73 L707.58,745.60 L707.22,745.48 L706.85,745.35 L706.47,745.23 L706.08,745.10 L705.67,744.98 L705.26,744.86 L704.83,744.74 L704.40,744.62 L703.96,744.51 L703.50,744.39 L703.04,744.28 L702.57,744.17 L702.10,744.06 L701.61,743.95 L701.12,743.84 L700.62,743.73 L700.12,743.63 L699.61,743.52 L699.10,743.42 L698.59,743.32 L698.07,743.22 L697.54,743.13 L697.02,743.03 L696.49,742.94 L695.96,742.84 L695.43,742.75 L694.90,742.66 L694.37,742.58 L693.84,742.49 L693.31,742.41 L692.78,742.32 L692.26,742.24 L691.73,742.16 L691.21,742.08 L690.70,742.01 L690.19,741.93 L689.68,741.86 L689.18,741.79 L688.68,741.72 L688.19,741.65 L687.70,741.59 L687.23,741.52 L686.76,741.46 L686.30,741.40 L685.84,741.34 L685.40,741.28 L684.97,741.23 L684.54,741.17 L684.13,741.12 L683.72,741.07 L683.33,741.02 L682.95,740.98 L682.58,740.93 L682.22,740.89 L681.88,740.85 L681.55,740.81 L681.23,740.77 L680.92,740.73 L680.63,740.70 L680.35,740.67 L680.09,740.64 L679.84,740.61 L679.61,740.58 L679.39,740.56 L679.19,740.53 L679.00,740.51 L678.83,740.49 L678.67,740.48 L678.53,740.46 L678.41,740.45 L678.30,740.43 L678.21,740.42 L678.13,740.41 L678.08,740.41 L678.03,740.40 L678.01,740.40 L678.00,740.40" fill="none" stroke="#6020b0" stroke-width="1.4"/><line x1="678.2" y1="724.3" x2="711.9" y2="724.3" stroke="#00ee00" stroke-width="1.6"/><line x1="661.8" y1="740.4" x2="661.8" y2="774.8" stroke="#ff6a6a" stroke-width="1.6"/><line x1="661.8" y1="757.3" x2="736.6" y2="757.3" stroke="#222" stroke-width="1.3" stroke-dasharray="3 2.6"/><line x1="694.9" y1="724.3" x2="694.9" y2="799.1" stroke="#222" stroke-width="1.3" stroke-dasharray="3 2.6"/><path d="M694.90,799.10 L695.96,799.45 L697.02,799.79 L698.07,800.14 L699.10,800.49 L700.12,800.83 L701.12,801.18 L702.10,801.53 L703.04,801.87 L703.96,802.22 L704.83,802.57 L705.67,802.91 L706.47,803.26 L707.22,803.61 L707.92,803.95 L708.57,804.30 L709.17,804.65 L709.71,804.99 L710.19,805.34 L710.61,805.69 L710.97,806.03 L711.27,806.38 L711.50,806.73 L711.67,807.07 L711.77,807.42 L711.80,807.77 L711.77,808.11 L711.67,808.46 L711.50,808.81 L711.27,809.15 L710.97,809.50 L710.61,809.85 L710.19,810.19 L709.71,810.54 L709.17,810.89 L708.57,811.23 L707.92,811.58 L707.22,811.93 L706.47,812.27 L705.67,812.62 L704.83,812.97 L703.96,813.31 L703.04,813.66 L702.10,814.01 L701.12,814.35 L700.12,814.70 L699.10,815.05 L698.07,815.39 L697.02,815.74 L695.96,816.09 L694.90,816.43 L693.84,816.78 L692.78,817.13 L691.73,817.47 L690.70,817.82 L689.68,818.17 L688.68,818.51 L687.70,818.86 L686.76,819.21 L685.84,819.55 L684.97,819.90 L684.13,820.25 L683.33,820.59 L682.58,820.94 L681.88,821.29 L681.23,821.63 L680.63,821.98 L680.09,822.33 L679.61,822.67 L679.19,823.02 L678.83,823.37 L678.53,823.71 L678.30,824.06 L678.13,824.41 L678.03,824.75 L678.00,825.10 L678.03,825.45 L678.13,825.79 L678.30,826.14 L678.53,826.49 L678.83,826.83 L679.19,827.18 L679.61,827.53 L680.09,827.87 L680.63,828.22 L681.23,828.57 L681.88,828.91 L682.58,829.26 L683.33,829.61 L684.13,829.95 L684.97,830.30 L685.84,830.65 L686.76,830.99 L687.70,831.34 L688.68,831.69 L689.68,832.03 L690.70,832.38 L691.73,832.73 L692.78,833.07 L693.84,833.42 L694.90,833.77 L695.96,834.11 L697.02,834.46 L698.07,834.81 L699.10,835.15 L700.12,835.50 L701.12,835.85 L702.10,836.19 L703.04,836.54 L703.96,836.89 L704.83,837.23 L705.67,837.58 L706.47,837.93 L707.22,838.27 L707.92,838.62 L708.57,838.97 L709.17,839.31 L709.71,839.66 L710.19,840.01 L710.61,840.35 L710.97,840.70 L711.27,841.05 L711.50,841.39 L711.67,841.74 L711.77,842.09 L711.80,842.43 L711.77,842.78 L711.67,843.13 L711.50,843.47 L711.27,843.82 L710.97,844.17 L710.61,844.51 L710.19,844.86 L709.71,845.21 L709.17,845.55 L708.57,845.90 L707.92,846.25 L707.22,846.59 L706.47,846.94 L705.67,847.29 L704.83,847.63 L703.96,847.98 L703.04,848.33 L702.10,848.67 L701.12,849.02 L700.12,849.37 L699.10,849.71 L698.07,850.06 L697.02,850.41 L695.96,850.75 L694.90,851.10 L693.84,851.45 L692.78,851.79 L691.73,852.14 L690.70,852.49 L689.68,852.83 L688.68,853.18 L687.70,853.53 L686.76,853.87 L685.84,854.22 L684.97,854.57 L684.13,854.91 L683.33,855.26 L682.58,855.61 L681.88,855.95 L681.23,856.30 L680.63,856.65 L680.09,856.99 L679.61,857.34 L679.19,857.69 L678.83,858.03 L678.53,858.38 L678.30,858.73 L678.13,859.07 L678.03,859.42 L678.00,859.77 L678.03,860.11 L678.13,860.46 L678.30,860.81 L678.53,861.15 L678.83,861.50 L679.19,861.85 L679.61,862.19 L680.09,862.54 L680.63,862.89 L681.23,863.23 L681.88,863.58 L682.58,863.93 L683.33,864.27 L684.13,864.62 L684.97,864.97 L685.84,865.31 L686.76,865.66 L687.70,866.01 L688.68,866.35 L689.68,866.70 L690.70,867.05 L691.73,867.39 L692.78,867.74 L693.84,868.09 L694.90,868.43 L695.96,868.78 L697.02,869.13 L698.07,869.47 L699.10,869.82 L700.12,870.17 L701.12,870.51 L702.10,870.86 L703.04,871.21 L703.96,871.55 L704.83,871.90 L705.67,872.25 L706.47,872.59 L707.22,872.94 L707.92,873.29 L708.57,873.63 L709.17,873.98 L709.71,874.33 L710.19,874.67 L710.61,875.02 L710.97,875.37 L711.27,875.71 L711.50,876.06 L711.67,876.41 L711.77,876.75 L711.80,877.10 L711.77,877.45 L711.67,877.79 L711.50,878.14 L711.27,878.49 L710.97,878.83 L710.61,879.18 L710.19,879.53 L709.71,879.87 L709.17,880.22 L708.57,880.57 L707.92,880.91 L707.22,881.26 L706.47,881.61 L705.67,881.95 L704.83,882.30 L703.96,882.65 L703.04,882.99 L702.10,883.34 L701.12,883.69 L700.12,884.03 L699.10,884.38 L698.07,884.73 L697.02,885.07 L695.96,885.42 L694.90,885.77 L693.84,886.11 L692.78,886.46 L691.73,886.81 L690.70,887.15 L689.68,887.50 L688.68,887.85 L687.70,888.19 L686.76,888.54 L685.84,888.89 L684.97,889.23 L684.13,889.58 L683.33,889.93 L682.58,890.27 L681.88,890.62 L681.23,890.97 L680.63,891.31 L680.09,891.66 L679.61,892.01 L679.19,892.35 L678.83,892.70 L678.53,893.05 L678.30,893.39 L678.13,893.74 L678.03,894.09 L678.00,894.43 L678.03,894.78 L678.13,895.13 L678.30,895.47 L678.53,895.82 L678.83,896.17 L679.19,896.51 L679.61,896.86 L680.09,897.21 L680.63,897.55 L681.23,897.90 L681.88,898.25 L682.58,898.59 L683.33,898.94 L684.13,899.29 L684.97,899.63 L685.84,899.98 L686.76,900.33 L687.70,900.67 L688.68,901.02 L689.68,901.37 L690.70,901.71 L691.73,902.06 L692.78,902.41 L693.84,902.75 L694.90,903.10" fill="none" stroke="#800080" stroke-width="1.4"/><path d="M736.60,757.30 L736.95,756.95 L737.29,756.59 L737.64,756.24 L737.99,755.89 L738.34,755.53 L738.68,755.18 L739.03,754.83 L739.38,754.48 L739.72,754.13 L740.07,753.79 L740.42,753.44 L740.76,753.10 L741.11,752.76 L741.46,752.42 L741.81,752.08 L742.15,751.74 L742.50,751.41 L742.85,751.08 L743.19,750.75 L743.54,750.43 L743.89,750.10 L744.23,749.79 L744.58,749.47 L744.93,749.16 L745.27,748.85 L745.62,748.55 L745.97,748.24 L746.32,747.95 L746.66,747.65 L747.01,747.37 L747.36,747.08 L747.70,746.80 L748.05,746.53 L748.40,746.26 L748.75,745.99 L749.09,745.73 L749.44,745.48 L749.79,745.23 L750.13,744.98 L750.48,744.74 L750.83,744.51 L751.17,744.28 L751.52,744.06 L751.87,743.84 L752.22,743.63 L752.56,743.42 L752.91,743.22 L753.26,743.03 L753.60,742.84 L753.95,742.66 L754.30,742.49 L754.64,742.32 L754.99,742.16 L755.34,742.01 L755.69,741.86 L756.03,741.72 L756.38,741.59 L756.73,741.46 L757.07,741.34 L757.42,741.23 L757.77,741.12 L758.11,741.02 L758.46,740.93 L758.81,740.85 L759.15,740.77 L759.50,740.70 L759.85,740.64 L760.20,740.58 L760.54,740.53 L760.89,740.49 L761.24,740.46 L761.58,740.43 L761.93,740.41 L762.28,740.40 L762.62,740.40 L762.97,740.40 L763.32,740.41 L763.67,740.43 L764.01,740.46 L764.36,740.49 L764.71,740.53 L765.05,740.58 L765.40,740.64 L765.75,740.70 L766.10,740.77 L766.44,740.85 L766.79,740.93 L767.14,741.02 L767.48,741.12 L767.83,741.23 L768.18,741.34 L768.52,741.46 L768.87,741.59 L769.22,741.72 L769.57,741.86 L769.91,742.01 L770.26,742.16 L770.61,742.32 L770.95,742.49 L771.30,742.66 L771.65,742.84 L771.99,743.03 L772.34,743.22 L772.69,743.42 L773.03,743.63 L773.38,743.84 L773.73,744.06 L774.08,744.28 L774.42,744.51 L774.77,744.74 L775.12,744.98 L775.46,745.23 L775.81,745.48 L776.16,745.73 L776.50,745.99 L776.85,746.26 L777.20,746.53 L777.55,746.80 L777.89,747.08 L778.24,747.37 L778.59,747.65 L778.93,747.95 L779.28,748.24 L779.63,748.55 L779.98,748.85 L780.32,749.16 L780.67,749.47 L781.02,749.79 L781.36,750.10 L781.71,750.43 L782.06,750.75 L782.40,751.08 L782.75,751.41 L783.10,751.74 L783.45,752.08 L783.79,752.42 L784.14,752.76 L784.49,753.10 L784.83,753.44 L785.18,753.79 L785.53,754.13 L785.87,754.48 L786.22,754.83 L786.57,755.18 L786.91,755.53 L787.26,755.89 L787.61,756.24 L787.96,756.59 L788.30,756.95 L788.65,757.30 L789.00,757.65 L789.34,758.01 L789.69,758.36 L790.04,758.71 L790.38,759.07 L790.73,759.42 L791.08,759.77 L791.43,760.12 L791.77,760.47 L792.12,760.81 L792.47,761.16 L792.81,761.50 L793.16,761.84 L793.51,762.18 L793.86,762.52 L794.20,762.86 L794.55,763.19 L794.90,763.52 L795.24,763.85 L795.59,764.17 L795.94,764.50 L796.28,764.81 L796.63,765.13 L796.98,765.44 L797.33,765.75 L797.67,766.05 L798.02,766.36 L798.37,766.65 L798.71,766.95 L799.06,767.23 L799.41,767.52 L799.75,767.80 L800.10,768.07 L800.45,768.34 L800.80,768.61 L801.14,768.87 L801.49,769.12 L801.84,769.37 L802.18,769.62 L802.53,769.86 L802.88,770.09 L803.22,770.32 L803.57,770.54 L803.92,770.76 L804.26,770.97 L804.61,771.18 L804.96,771.38 L805.31,771.57 L805.65,771.76 L806.00,771.94 L806.35,772.11 L806.69,772.28 L807.04,772.44 L807.39,772.59 L807.74,772.74 L808.08,772.88 L808.43,773.01 L808.78,773.14 L809.12,773.26 L809.47,773.37 L809.82,773.48 L810.16,773.58 L810.51,773.67 L810.86,773.75 L811.21,773.83 L811.55,773.90 L811.90,773.96 L812.25,774.02 L812.59,774.07 L812.94,774.11 L813.29,774.14 L813.63,774.17 L813.98,774.19 L814.33,774.20 L814.67,774.20 L815.02,774.20 L815.37,774.19 L815.72,774.17 L816.06,774.14 L816.41,774.11 L816.76,774.07 L817.10,774.02 L817.45,773.96 L817.80,773.90 L818.14,773.83 L818.49,773.75 L818.84,773.67 L819.19,773.58 L819.53,773.48 L819.88,773.37 L820.23,773.26 L820.57,773.14 L820.92,773.01 L821.27,772.88 L821.62,772.74 L821.96,772.59 L822.31,772.44 L822.66,772.28 L823.00,772.11 L823.35,771.94 L823.70,771.76 L824.04,771.57 L824.39,771.38 L824.74,771.18 L825.09,770.97 L825.43,770.76 L825.78,770.54 L826.13,770.32 L826.47,770.09 L826.82,769.86 L827.17,769.62 L827.51,769.37 L827.86,769.12 L828.21,768.87 L828.56,768.61 L828.90,768.34 L829.25,768.07 L829.60,767.80 L829.94,767.52 L830.29,767.23 L830.64,766.95 L830.98,766.65 L831.33,766.36 L831.68,766.05 L832.03,765.75 L832.37,765.44 L832.72,765.13 L833.07,764.81 L833.41,764.50 L833.76,764.17 L834.11,763.85 L834.45,763.52 L834.80,763.19 L835.15,762.86 L835.50,762.52 L835.84,762.18 L836.19,761.84 L836.54,761.50 L836.88,761.16 L837.23,760.81 L837.58,760.47 L837.92,760.12 L838.27,759.77 L838.62,759.42 L838.97,759.07 L839.31,758.71 L839.66,758.36 L840.01,758.01 L840.35,757.65 L840.70,757.30" fill="none" stroke="#800080" stroke-width="1.4"/><circle cx="661.8" cy="757.3" r="2.0" fill="#ff8000"/><circle cx="694.9" cy="724.3" r="2.0" fill="#ff8000"/><circle cx="736.6" cy="757.3" r="2.0" fill="#ff8000"/><circle cx="694.9" cy="799.1" r="2.0" fill="#ff8000"/><circle cx="694.9" cy="757.3" r="2.0" fill="#ff8000"/><path d="M809.15,878.70 L809.15,878.70 L809.13,878.70 L809.12,878.70 L809.09,878.69 L809.05,878.69 L809.01,878.68 L808.96,878.68 L808.90,878.67 L808.84,878.67 L808.76,878.66 L808.68,878.65 L808.60,878.64 L808.50,878.63 L808.40,878.62 L808.29,878.60 L808.17,878.59 L808.04,878.58 L807.91,878.56 L807.77,878.55 L807.62,878.53 L807.46,878.51 L807.30,878.49 L807.13,878.47 L806.95,878.45 L806.77,878.43 L806.58,878.41 L806.38,878.39 L806.17,878.36 L805.96,878.34 L805.74,878.31 L805.51,878.29 L805.28,878.26 L805.04,878.23 L804.79,878.21 L804.54,878.18 L804.28,878.15 L804.01,878.11 L803.74,878.08 L803.46,878.05 L803.17,878.02 L802.88,877.98 L802.58,877.95 L802.28,877.91 L801.97,877.87 L801.65,877.84 L801.33,877.80 L801.00,877.76 L800.67,877.72 L800.33,877.68 L799.98,877.63 L799.63,877.59 L799.28,877.55 L798.92,877.50 L798.55,877.46 L798.18,877.41 L797.80,877.36 L797.42,877.32 L797.03,877.27 L796.64,877.22 L796.25,877.17 L795.85,877.12 L795.44,877.07 L795.03,877.01 L794.62,876.96 L794.20,876.90 L793.78,876.85 L793.36,876.79 L792.93,876.74 L792.50,876.68 L792.06,876.62 L791.62,876.56 L791.18,876.50 L790.73,876.44 L790.28,876.38 L789.83,876.32 L789.37,876.25 L788.91,876.19 L788.45,876.13 L787.99,876.06 L787.52,875.99 L787.05,875.93 L786.58,875.86 L786.11,875.79 L785.63,875.72 L785.16,875.65 L784.68,875.58 L784.20,875.51 L783.72,875.44 L783.23,875.36 L782.75,875.29 L782.26,875.21 L781.77,875.14 L781.28,875.06 L780.80,874.98 L780.31,874.91 L779.82,874.83 L779.32,874.75 L778.83,874.67 L778.34,874.59 L777.85,874.51 L777.36,874.42 L776.87,874.34 L776.38,874.26 L775.88,874.17 L775.39,874.09 L774.90,874.00 L774.42,873.91 L773.93,873.83 L773.44,873.74 L772.95,873.65 L772.47,873.56 L771.98,873.47 L771.50,873.38 L771.02,873.29 L770.54,873.20 L770.07,873.10 L769.59,873.01 L769.12,872.91 L768.65,872.82 L768.18,872.72 L767.71,872.63 L767.25,872.53 L766.79,872.43 L766.33,872.33 L765.87,872.23 L765.42,872.13 L764.97,872.03 L764.52,871.93 L764.08,871.83 L763.64,871.72 L763.20,871.62 L762.77,871.52 L762.34,871.41 L761.92,871.31 L761.50,871.20 L761.08,871.09 L760.67,870.99 L760.26,870.88 L759.85,870.77 L759.45,870.66 L759.06,870.55 L758.67,870.44 L758.28,870.33 L757.90,870.22 L757.52,870.10 L757.15,869.99 L756.78,869.88 L756.42,869.76 L756.07,869.65 L755.72,869.53 L755.37,869.42 L755.03,869.30 L754.70,869.18 L754.37,869.06 L754.05,868.95 L753.73,868.83 L753.42,868.71 L753.12,868.59 L752.82,868.47 L752.53,868.34 L752.24,868.22 L751.96,868.10 L751.69,867.98 L751.42,867.85 L751.16,867.73 L750.91,867.60 L750.66,867.48 L750.42,867.35 L750.19,867.22 L749.96,867.10 L749.74,866.97 L749.53,866.84 L749.32,866.71 L749.12,866.58 L748.93,866.45 L748.75,866.32 L748.57,866.19 L748.40,866.06 L748.24,865.93 L748.08,865.80 L747.93,865.66 L747.79,865.53 L747.66,865.40 L747.53,865.26 L747.41,865.13 L747.30,864.99 L747.20,864.86 L747.10,864.72 L747.02,864.58 L746.94,864.45 L746.86,864.31 L746.80,864.17 L746.74,864.03 L746.69,863.89 L746.65,863.75 L746.61,863.61 L746.58,863.47 L746.57,863.33 L746.55,863.19 L746.55,863.05 L746.55,862.91 L746.57,862.77 L746.58,862.62 L746.61,862.48 L746.65,862.34 L746.69,862.19 L746.74,862.05 L746.80,861.90 L746.86,861.76 L746.94,861.61 L747.02,861.46 L747.10,861.32 L747.20,861.17 L747.30,861.02 L747.41,860.87 L747.53,860.73 L747.66,860.58 L747.79,860.43 L747.93,860.28 L748.08,860.13 L748.24,859.98 L748.40,859.83 L748.57,859.68 L748.75,859.53 L748.93,859.38 L749.12,859.23 L749.32,859.07 L749.53,858.92 L749.74,858.77 L749.96,858.62 L750.19,858.46 L750.42,858.31 L750.66,858.16 L750.91,858.00 L751.16,857.85 L751.42,857.69 L751.69,857.54 L751.96,857.38 L752.24,857.23 L752.53,857.07 L752.82,856.92 L753.12,856.76 L753.42,856.60 L753.73,856.45 L754.05,856.29 L754.37,856.13 L754.70,855.97 L755.03,855.82 L755.37,855.66 L755.72,855.50 L756.07,855.34 L756.42,855.18 L756.78,855.03 L757.15,854.87 L757.52,854.71 L757.90,854.55 L758.28,854.39 L758.67,854.23 L759.06,854.07 L759.45,853.91 L759.85,853.75 L760.26,853.59 L760.67,853.43 L761.08,853.27 L761.50,853.10 L761.92,852.94 L762.34,852.78 L762.77,852.62 L763.20,852.46 L763.64,852.30 L764.08,852.13 L764.52,851.97 L764.97,851.81 L765.42,851.65 L765.87,851.49 L766.33,851.32 L766.79,851.16 L767.25,851.00 L767.71,850.83 L768.18,850.67 L768.65,850.51 L769.12,850.35 L769.59,850.18 L770.07,850.02 L770.54,849.86 L771.02,849.69 L771.50,849.53 L771.98,849.37 L772.47,849.20 L772.95,849.04 L773.44,848.87 L773.93,848.71 L774.42,848.55 L774.90,848.38 L775.39,848.22 L775.88,848.06 L776.38,847.89 L776.87,847.73 L777.36,847.56 L777.85,847.40" fill="none" stroke="#808080" stroke-width="1.6"/><path d="M777.85,847.40 L778.34,847.24 L778.83,847.07 L779.32,846.91 L779.82,846.74 L780.31,846.58 L780.80,846.42 L781.28,846.25 L781.77,846.09 L782.26,845.93 L782.75,845.76 L783.23,845.60 L783.72,845.43 L784.20,845.27 L784.68,845.11 L785.16,844.94 L785.63,844.78 L786.11,844.62 L786.58,844.45 L787.05,844.29 L787.52,844.13 L787.99,843.97 L788.45,843.80 L788.91,843.64 L789.37,843.48 L789.83,843.31 L790.28,843.15 L790.73,842.99 L791.18,842.83 L791.62,842.67 L792.06,842.50 L792.50,842.34 L792.93,842.18 L793.36,842.02 L793.78,841.86 L794.20,841.70 L794.62,841.53 L795.03,841.37 L795.44,841.21 L795.85,841.05 L796.25,840.89 L796.64,840.73 L797.03,840.57 L797.42,840.41 L797.80,840.25 L798.18,840.09 L798.55,839.93 L798.92,839.77 L799.28,839.62 L799.63,839.46 L799.98,839.30 L800.33,839.14 L800.67,838.98 L801.00,838.83 L801.33,838.67 L801.65,838.51 L801.97,838.35 L802.28,838.20 L802.58,838.04 L802.88,837.88 L803.17,837.73 L803.46,837.57 L803.74,837.42 L804.01,837.26 L804.28,837.11 L804.54,836.95 L804.79,836.80 L805.04,836.64 L805.28,836.49 L805.51,836.34 L805.74,836.18 L805.96,836.03 L806.17,835.88 L806.38,835.73 L806.58,835.57 L806.77,835.42 L806.95,835.27 L807.13,835.12 L807.30,834.97 L807.46,834.82 L807.62,834.67 L807.77,834.52 L807.91,834.37 L808.04,834.22 L808.17,834.07 L808.29,833.93 L808.40,833.78 L808.50,833.63 L808.60,833.48 L808.68,833.34 L808.76,833.19 L808.84,833.04 L808.90,832.90 L808.96,832.75 L809.01,832.61 L809.05,832.46 L809.09,832.32 L809.12,832.18 L809.13,832.03 L809.15,831.89 L809.15,831.75 L809.15,831.61 L809.13,831.47 L809.12,831.33 L809.09,831.19 L809.05,831.05 L809.01,830.91 L808.96,830.77 L808.90,830.63 L808.84,830.49 L808.76,830.35 L808.68,830.22 L808.60,830.08 L808.50,829.94 L808.40,829.81 L808.29,829.67 L808.17,829.54 L808.04,829.40 L807.91,829.27 L807.77,829.14 L807.62,829.00 L807.46,828.87 L807.30,828.74 L807.13,828.61 L806.95,828.48 L806.77,828.35 L806.58,828.22 L806.38,828.09 L806.17,827.96 L805.96,827.83 L805.74,827.70 L805.51,827.58 L805.28,827.45 L805.04,827.32 L804.79,827.20 L804.54,827.07 L804.28,826.95 L804.01,826.82 L803.74,826.70 L803.46,826.58 L803.17,826.46 L802.88,826.33 L802.58,826.21 L802.28,826.09 L801.97,825.97 L801.65,825.85 L801.33,825.74 L801.00,825.62 L800.67,825.50 L800.33,825.38 L799.98,825.27 L799.63,825.15 L799.28,825.04 L798.92,824.92 L798.55,824.81 L798.18,824.70 L797.80,824.58 L797.42,824.47 L797.03,824.36 L796.64,824.25 L796.25,824.14 L795.85,824.03 L795.44,823.92 L795.03,823.81 L794.62,823.71 L794.20,823.60 L793.78,823.49 L793.36,823.39 L792.93,823.28 L792.50,823.18 L792.06,823.08 L791.62,822.97 L791.18,822.87 L790.73,822.77 L790.28,822.67 L789.83,822.57 L789.37,822.47 L788.91,822.37 L788.45,822.27 L787.99,822.17 L787.52,822.08 L787.05,821.98 L786.58,821.89 L786.11,821.79 L785.63,821.70 L785.16,821.60 L784.68,821.51 L784.20,821.42 L783.72,821.33 L783.23,821.24 L782.75,821.15 L782.26,821.06 L781.77,820.97 L781.28,820.89 L780.80,820.80 L780.31,820.71 L779.82,820.63 L779.32,820.54 L778.83,820.46 L778.34,820.38 L777.85,820.29 L777.36,820.21 L776.87,820.13 L776.38,820.05 L775.88,819.97 L775.39,819.89 L774.90,819.82 L774.42,819.74 L773.93,819.66 L773.44,819.59 L772.95,819.51 L772.47,819.44 L771.98,819.36 L771.50,819.29 L771.02,819.22 L770.54,819.15 L770.07,819.08 L769.59,819.01 L769.12,818.94 L768.65,818.87 L768.18,818.81 L767.71,818.74 L767.25,818.67 L766.79,818.61 L766.33,818.55 L765.87,818.48 L765.42,818.42 L764.97,818.36 L764.52,818.30 L764.08,818.24 L763.64,818.18 L763.20,818.12 L762.77,818.06 L762.34,818.01 L761.92,817.95 L761.50,817.90 L761.08,817.84 L760.67,817.79 L760.26,817.73 L759.85,817.68 L759.45,817.63 L759.06,817.58 L758.67,817.53 L758.28,817.48 L757.90,817.44 L757.52,817.39 L757.15,817.34 L756.78,817.30 L756.42,817.25 L756.07,817.21 L755.72,817.17 L755.37,817.12 L755.03,817.08 L754.70,817.04 L754.37,817.00 L754.05,816.96 L753.73,816.93 L753.42,816.89 L753.12,816.85 L752.82,816.82 L752.53,816.78 L752.24,816.75 L751.96,816.72 L751.69,816.69 L751.42,816.65 L751.16,816.62 L750.91,816.59 L750.66,816.57 L750.42,816.54 L750.19,816.51 L749.96,816.49 L749.74,816.46 L749.53,816.44 L749.32,816.41 L749.12,816.39 L748.93,816.37 L748.75,816.35 L748.57,816.33 L748.40,816.31 L748.24,816.29 L748.08,816.27 L747.93,816.25 L747.79,816.24 L747.66,816.22 L747.53,816.21 L747.41,816.20 L747.30,816.18 L747.20,816.17 L747.10,816.16 L747.02,816.15 L746.94,816.14 L746.86,816.13 L746.80,816.13 L746.74,816.12 L746.69,816.12 L746.65,816.11 L746.61,816.11 L746.58,816.10 L746.57,816.10 L746.55,816.10 L746.55,816.10" fill="none" stroke="#0000ff" stroke-width="3"/><circle cx="777.85" cy="847.4" r="4.6" fill="#ff8000" stroke="#000" stroke-width="1.5"/><path d="M1020.20,868.70 L1020.57,867.96 L1020.94,867.23 L1021.31,866.49 L1021.67,865.76 L1022.04,865.04 L1022.41,864.32 L1022.77,863.61 L1023.14,862.91 L1023.50,862.22 L1023.86,861.54 L1024.22,860.87 L1024.58,860.22 L1024.93,859.58 L1025.29,858.96 L1025.64,858.35 L1025.99,857.77 L1026.33,857.20 L1026.68,856.65 L1027.02,856.13 L1027.36,855.62 L1027.69,855.14 L1028.03,854.68 L1028.35,854.25 L1028.68,853.84 L1029.00,853.46 L1029.32,853.10 L1029.63,852.78 L1029.94,852.48 L1030.24,852.20 L1030.55,851.96 L1030.84,851.75 L1031.13,851.57 L1031.42,851.41 L1031.70,851.29 L1031.98,851.20 L1032.25,851.13 L1032.51,851.10 L1032.77,851.10 L1033.03,851.13 L1033.28,851.20 L1033.52,851.29 L1033.76,851.41 L1033.99,851.57 L1034.22,851.75 L1034.44,851.96 L1034.65,852.20 L1034.86,852.48 L1035.06,852.78 L1035.25,853.10 L1035.44,853.46 L1035.62,853.84 L1035.80,854.25 L1035.96,854.68 L1036.12,855.14 L1036.28,855.62 L1036.42,856.13 L1036.56,856.65 L1036.70,857.20 L1036.82,857.77 L1036.94,858.35 L1037.05,858.96 L1037.15,859.58 L1037.25,860.22 L1037.33,860.87 L1037.42,861.54 L1037.49,862.22 L1037.55,862.91 L1037.61,863.61 L1037.66,864.32 L1037.70,865.04 L1037.74,865.76 L1037.77,866.49 L1037.78,867.23 L1037.80,867.96 L1037.80,868.70 L1037.80,869.44 L1037.78,870.17 L1037.77,870.91 L1037.74,871.64 L1037.70,872.36 L1037.66,873.08 L1037.61,873.79 L1037.55,874.49 L1037.49,875.18 L1037.42,875.86 L1037.33,876.53 L1037.25,877.18 L1037.15,877.82 L1037.05,878.44 L1036.94,879.05 L1036.82,879.63 L1036.70,880.20 L1036.56,880.75 L1036.42,881.27 L1036.28,881.78 L1036.12,882.26 L1035.96,882.72 L1035.80,883.15 L1035.62,883.56 L1035.44,883.94 L1035.25,884.30 L1035.06,884.62 L1034.86,884.92 L1034.65,885.20 L1034.44,885.44 L1034.22,885.65 L1033.99,885.83 L1033.76,885.99 L1033.52,886.11 L1033.28,886.20 L1033.03,886.27 L1032.77,886.30 L1032.51,886.30 L1032.25,886.27 L1031.98,886.20 L1031.70,886.11 L1031.42,885.99 L1031.13,885.83 L1030.84,885.65 L1030.55,885.44 L1030.24,885.20 L1029.94,884.92 L1029.63,884.62 L1029.32,884.30 L1029.00,883.94 L1028.68,883.56 L1028.35,883.15 L1028.03,882.72 L1027.69,882.26 L1027.36,881.78 L1027.02,881.27 L1026.68,880.75 L1026.33,880.20 L1025.99,879.63 L1025.64,879.05 L1025.29,878.44 L1024.93,877.82 L1024.58,877.18 L1024.22,876.53 L1023.86,875.86 L1023.50,875.18 L1023.14,874.49 L1022.77,873.79 L1022.41,873.08 L1022.04,872.36 L1021.67,871.64 L1021.31,870.91 L1020.94,870.17 L1020.57,869.44 L1020.20,868.70 L1019.83,867.96 L1019.46,867.23 L1019.09,866.49 L1018.73,865.76 L1018.36,865.04 L1017.99,864.32 L1017.63,863.61 L1017.26,862.91 L1016.90,862.22 L1016.54,861.54 L1016.18,860.87 L1015.82,860.22 L1015.47,859.58 L1015.11,858.96 L1014.76,858.35 L1014.41,857.77 L1014.07,857.20 L1013.72,856.65 L1013.38,856.13 L1013.04,855.62 L1012.71,855.14 L1012.37,854.68 L1012.05,854.25 L1011.72,853.84 L1011.40,853.46 L1011.08,853.10 L1010.77,852.78 L1010.46,852.48 L1010.16,852.20 L1009.85,851.96 L1009.56,851.75 L1009.27,851.57 L1008.98,851.41 L1008.70,851.29 L1008.42,851.20 L1008.15,851.13 L1007.89,851.10 L1007.63,851.10 L1007.37,851.13 L1007.12,851.20 L1006.88,851.29 L1006.64,851.41 L1006.41,851.57 L1006.18,851.75 L1005.96,851.96 L1005.75,852.20 L1005.54,852.48 L1005.34,852.78 L1005.15,853.10 L1004.96,853.46 L1004.78,853.84 L1004.60,854.25 L1004.44,854.68 L1004.28,855.14 L1004.12,855.62 L1003.98,856.13 L1003.84,856.65 L1003.70,857.20 L1003.58,857.77 L1003.46,858.35 L1003.35,858.96 L1003.25,859.58 L1003.15,860.22 L1003.07,860.87 L1002.98,861.54 L1002.91,862.22 L1002.85,862.91 L1002.79,863.61 L1002.74,864.32 L1002.70,865.04 L1002.66,865.76 L1002.63,866.49 L1002.62,867.23 L1002.60,867.96 L1002.60,868.70 L1002.60,869.44 L1002.62,870.17 L1002.63,870.91 L1002.66,871.64 L1002.70,872.36 L1002.74,873.08 L1002.79,873.79 L1002.85,874.49 L1002.91,875.18 L1002.98,875.86 L1003.07,876.53 L1003.15,877.18 L1003.25,877.82 L1003.35,878.44 L1003.46,879.05 L1003.58,879.63 L1003.70,880.20 L1003.84,880.75 L1003.98,881.27 L1004.12,881.78 L1004.28,882.26 L1004.44,882.72 L1004.60,883.15 L1004.78,883.56 L1004.96,883.94 L1005.15,884.30 L1005.34,884.62 L1005.54,884.92 L1005.75,885.20 L1005.96,885.44 L1006.18,885.65 L1006.41,885.83 L1006.64,885.99 L1006.88,886.11 L1007.12,886.20 L1007.37,886.27 L1007.63,886.30 L1007.89,886.30 L1008.15,886.27 L1008.42,886.20 L1008.70,886.11 L1008.98,885.99 L1009.27,885.83 L1009.56,885.65 L1009.85,885.44 L1010.16,885.20 L1010.46,884.92 L1010.77,884.62 L1011.08,884.30 L1011.40,883.94 L1011.72,883.56 L1012.05,883.15 L1012.37,882.72 L1012.71,882.26 L1013.04,881.78 L1013.38,881.27 L1013.72,880.75 L1014.07,880.20 L1014.41,879.63 L1014.76,879.05 L1015.11,878.44 L1015.47,877.82 L1015.82,877.18 L1016.18,876.53 L1016.54,875.86 L1016.90,875.18 L1017.26,874.49 L1017.63,873.79 L1017.99,873.08 L1018.36,872.36 L1018.73,871.64 L1019.09,870.91 L1019.46,870.17 L1019.83,869.44 L1020.20,868.70" fill="none" stroke="#ff0000" stroke-width="2.4"/><path d="M1020.20,868.70 L1020.57,867.96 L1020.94,867.23 L1021.31,866.49 L1021.67,865.76 L1022.04,865.04 L1022.41,864.32 L1022.77,863.61 L1023.14,862.91 L1023.50,862.22 L1023.86,861.54 L1024.22,860.87 L1024.58,860.22 L1024.93,859.58 L1025.29,858.96 L1025.64,858.35 L1025.99,857.77 L1026.33,857.20 L1026.68,856.65 L1027.02,856.13 L1027.36,855.62 L1027.69,855.14 L1028.03,854.68 L1028.35,854.25 L1028.68,853.84 L1029.00,853.46 L1029.32,853.10 L1029.63,852.78 L1029.94,852.48 L1030.24,852.20 L1030.55,851.96 L1030.84,851.75 L1031.13,851.57 L1031.42,851.41 L1031.70,851.29 L1031.98,851.20 L1032.25,851.13 L1032.51,851.10 L1032.77,851.10 L1033.03,851.13 L1033.28,851.20 L1033.52,851.29 L1033.76,851.41 L1033.99,851.57 L1034.22,851.75 L1034.44,851.96 L1034.65,852.20 L1034.86,852.48 L1035.06,852.78 L1035.25,853.10 L1035.44,853.46 L1035.62,853.84 L1035.80,854.25 L1035.96,854.68 L1036.12,855.14 L1036.28,855.62 L1036.42,856.13 L1036.56,856.65 L1036.70,857.20 L1036.82,857.77 L1036.94,858.35 L1037.05,858.96 L1037.15,859.58 L1037.25,860.22 L1037.33,860.87 L1037.42,861.54 L1037.49,862.22 L1037.55,862.91 L1037.61,863.61 L1037.66,864.32 L1037.70,865.04 L1037.74,865.76 L1037.77,866.49 L1037.78,867.23 L1037.80,867.96 L1037.80,868.70 L1037.80,869.44 L1037.78,870.17 L1037.77,870.91 L1037.74,871.64 L1037.70,872.36 L1037.66,873.08 L1037.61,873.79 L1037.55,874.49 L1037.49,875.18 L1037.42,875.86 L1037.33,876.53 L1037.25,877.18 L1037.15,877.82 L1037.05,878.44 L1036.94,879.05 L1036.82,879.63 L1036.70,880.20 L1036.56,880.75 L1036.42,881.27 L1036.28,881.78 L1036.12,882.26 L1035.96,882.72 L1035.80,883.15 L1035.62,883.56 L1035.44,883.94 L1035.25,884.30 L1035.06,884.62 L1034.86,884.92 L1034.65,885.20 L1034.44,885.44 L1034.22,885.65 L1033.99,885.83 L1033.76,885.99 L1033.52,886.11 L1033.28,886.20 L1033.03,886.27 L1032.77,886.30 L1032.51,886.30 L1032.25,886.27 L1031.98,886.20 L1031.70,886.11 L1031.42,885.99 L1031.13,885.83 L1030.84,885.65 L1030.55,885.44 L1030.24,885.20 L1029.94,884.92 L1029.63,884.62 L1029.32,884.30 L1029.00,883.94 L1028.68,883.56 L1028.35,883.15 L1028.03,882.72 L1027.69,882.26 L1027.36,881.78 L1027.02,881.27 L1026.68,880.75 L1026.33,880.20 L1025.99,879.63 L1025.64,879.05 L1025.29,878.44 L1024.93,877.82 L1024.58,877.18 L1024.22,876.53 L1023.86,875.86 L1023.50,875.18 L1023.14,874.49 L1022.77,873.79 L1022.41,873.08 L1022.04,872.36 L1021.67,871.64 L1021.31,870.91 L1020.94,870.17 L1020.57,869.44 L1020.20,868.70 L1019.83,867.96 L1019.46,867.23 L1019.09,866.49 L1018.73,865.76 L1018.36,865.04 L1017.99,864.32 L1017.63,863.61 L1017.26,862.91 L1016.90,862.22 L1016.54,861.54 L1016.18,860.87 L1015.82,860.22 L1015.47,859.58 L1015.11,858.96 L1014.76,858.35 L1014.41,857.77 L1014.07,857.20 L1013.72,856.65 L1013.38,856.13 L1013.04,855.62 L1012.71,855.14 L1012.37,854.68 L1012.05,854.25 L1011.72,853.84 L1011.40,853.46 L1011.08,853.10 L1010.77,852.78 L1010.46,852.48 L1010.16,852.20 L1009.85,851.96 L1009.56,851.75 L1009.27,851.57 L1008.98,851.41 L1008.70,851.29 L1008.42,851.20 L1008.15,851.13 L1007.89,851.10 L1007.63,851.10 L1007.37,851.13 L1007.12,851.20 L1006.88,851.29 L1006.64,851.41 L1006.41,851.57 L1006.18,851.75 L1005.96,851.96 L1005.75,852.20 L1005.54,852.48 L1005.34,852.78 L1005.15,853.10 L1004.96,853.46 L1004.78,853.84 L1004.60,854.25 L1004.44,854.68 L1004.28,855.14 L1004.12,855.62 L1003.98,856.13 L1003.84,856.65 L1003.70,857.20 L1003.58,857.77 L1003.46,858.35 L1003.35,858.96 L1003.25,859.58 L1003.15,860.22 L1003.07,860.87 L1002.98,861.54 L1002.91,862.22 L1002.85,862.91 L1002.79,863.61 L1002.74,864.32 L1002.70,865.04 L1002.66,865.76 L1002.63,866.49 L1002.62,867.23 L1002.60,867.96 L1002.60,868.70 L1002.60,869.44 L1002.62,870.17 L1002.63,870.91 L1002.66,871.64 L1002.70,872.36 L1002.74,873.08 L1002.79,873.79 L1002.85,874.49 L1002.91,875.18 L1002.98,875.86 L1003.07,876.53 L1003.15,877.18 L1003.25,877.82 L1003.35,878.44 L1003.46,879.05 L1003.58,879.63 L1003.70,880.20 L1003.84,880.75 L1003.98,881.27 L1004.12,881.78 L1004.28,882.26 L1004.44,882.72 L1004.60,883.15 L1004.78,883.56 L1004.96,883.94 L1005.15,884.30 L1005.34,884.62 L1005.54,884.92 L1005.75,885.20 L1005.96,885.44 L1006.18,885.65 L1006.41,885.83 L1006.64,885.99 L1006.88,886.11 L1007.12,886.20 L1007.37,886.27 L1007.63,886.30 L1007.89,886.30 L1008.15,886.27 L1008.42,886.20 L1008.70,886.11 L1008.98,885.99 L1009.27,885.83 L1009.56,885.65 L1009.85,885.44 L1010.16,885.20 L1010.46,884.92 L1010.77,884.62 L1011.08,884.30 L1011.40,883.94 L1011.72,883.56 L1012.05,883.15 L1012.37,882.72 L1012.71,882.26 L1013.04,881.78 L1013.38,881.27 L1013.72,880.75 L1014.07,880.20 L1014.41,879.63 L1014.76,879.05 L1015.11,878.44 L1015.47,877.82 L1015.82,877.18 L1016.18,876.53 L1016.54,875.86 L1016.90,875.18 L1017.26,874.49 L1017.63,873.79 L1017.99,873.08 L1018.36,872.36 L1018.73,871.64 L1019.09,870.91 L1019.46,870.17 L1019.83,869.44 L1020.20,868.70" fill="none" stroke="#900060" stroke-width="1.3"/><line x1="1054.8" y1="851.2" x2="1054.8" y2="886.4" stroke="#00ee00" stroke-width="1.6"/><line x1="1002.5" y1="903.1" x2="1038.0" y2="903.1" stroke="#0000ff" stroke-width="1.6"/><line x1="976.9" y1="868.7" x2="1054.8" y2="868.7" stroke="#222" stroke-width="1.3" stroke-dasharray="3 2.6"/><line x1="1020.2" y1="825.8" x2="1020.2" y2="903.1" stroke="#222" stroke-width="1.3" stroke-dasharray="3 2.6"/><path d="M1020.20,825.80 L1020.57,825.44 L1020.94,825.08 L1021.31,824.72 L1021.67,824.36 L1022.04,824.00 L1022.41,823.64 L1022.77,823.28 L1023.14,822.91 L1023.50,822.55 L1023.86,822.19 L1024.22,821.83 L1024.58,821.47 L1024.93,821.11 L1025.29,820.75 L1025.64,820.39 L1025.99,820.03 L1026.33,819.67 L1026.68,819.31 L1027.02,818.95 L1027.36,818.59 L1027.69,818.23 L1028.03,817.87 L1028.35,817.50 L1028.68,817.14 L1029.00,816.78 L1029.32,816.42 L1029.63,816.06 L1029.94,815.70 L1030.24,815.34 L1030.55,814.98 L1030.84,814.62 L1031.13,814.26 L1031.42,813.90 L1031.70,813.54 L1031.98,813.18 L1032.25,812.82 L1032.51,812.46 L1032.77,812.09 L1033.03,811.73 L1033.28,811.37 L1033.52,811.01 L1033.76,810.65 L1033.99,810.29 L1034.22,809.93 L1034.44,809.57 L1034.65,809.21 L1034.86,808.85 L1035.06,808.49 L1035.25,808.13 L1035.44,807.77 L1035.62,807.41 L1035.80,807.05 L1035.96,806.68 L1036.12,806.32 L1036.28,805.96 L1036.42,805.60 L1036.56,805.24 L1036.70,804.88 L1036.82,804.52 L1036.94,804.16 L1037.05,803.80 L1037.15,803.44 L1037.25,803.08 L1037.33,802.72 L1037.42,802.36 L1037.49,802.00 L1037.55,801.64 L1037.61,801.27 L1037.66,800.91 L1037.70,800.55 L1037.74,800.19 L1037.77,799.83 L1037.78,799.47 L1037.80,799.11 L1037.80,798.75 L1037.80,798.39 L1037.78,798.03 L1037.77,797.67 L1037.74,797.31 L1037.70,796.95 L1037.66,796.59 L1037.61,796.23 L1037.55,795.86 L1037.49,795.50 L1037.42,795.14 L1037.33,794.78 L1037.25,794.42 L1037.15,794.06 L1037.05,793.70 L1036.94,793.34 L1036.82,792.98 L1036.70,792.62 L1036.56,792.26 L1036.42,791.90 L1036.28,791.54 L1036.12,791.18 L1035.96,790.82 L1035.80,790.45 L1035.62,790.09 L1035.44,789.73 L1035.25,789.37 L1035.06,789.01 L1034.86,788.65 L1034.65,788.29 L1034.44,787.93 L1034.22,787.57 L1033.99,787.21 L1033.76,786.85 L1033.52,786.49 L1033.28,786.13 L1033.03,785.77 L1032.77,785.41 L1032.51,785.04 L1032.25,784.68 L1031.98,784.32 L1031.70,783.96 L1031.42,783.60 L1031.13,783.24 L1030.84,782.88 L1030.55,782.52 L1030.24,782.16 L1029.94,781.80 L1029.63,781.44 L1029.32,781.08 L1029.00,780.72 L1028.68,780.36 L1028.35,780.00 L1028.03,779.63 L1027.69,779.27 L1027.36,778.91 L1027.02,778.55 L1026.68,778.19 L1026.33,777.83 L1025.99,777.47 L1025.64,777.11 L1025.29,776.75 L1024.93,776.39 L1024.58,776.03 L1024.22,775.67 L1023.86,775.31 L1023.50,774.95 L1023.14,774.59 L1022.77,774.22 L1022.41,773.86 L1022.04,773.50 L1021.67,773.14 L1021.31,772.78 L1020.94,772.42 L1020.57,772.06 L1020.20,771.70 L1019.83,771.34 L1019.46,770.98 L1019.09,770.62 L1018.73,770.26 L1018.36,769.90 L1017.99,769.54 L1017.63,769.18 L1017.26,768.81 L1016.90,768.45 L1016.54,768.09 L1016.18,767.73 L1015.82,767.37 L1015.47,767.01 L1015.11,766.65 L1014.76,766.29 L1014.41,765.93 L1014.07,765.57 L1013.72,765.21 L1013.38,764.85 L1013.04,764.49 L1012.71,764.13 L1012.37,763.77 L1012.05,763.40 L1011.72,763.04 L1011.40,762.68 L1011.08,762.32 L1010.77,761.96 L1010.46,761.60 L1010.16,761.24 L1009.85,760.88 L1009.56,760.52 L1009.27,760.16 L1008.98,759.80 L1008.70,759.44 L1008.42,759.08 L1008.15,758.72 L1007.89,758.36 L1007.63,757.99 L1007.37,757.63 L1007.12,757.27 L1006.88,756.91 L1006.64,756.55 L1006.41,756.19 L1006.18,755.83 L1005.96,755.47 L1005.75,755.11 L1005.54,754.75 L1005.34,754.39 L1005.15,754.03 L1004.96,753.67 L1004.78,753.31 L1004.60,752.95 L1004.44,752.58 L1004.28,752.22 L1004.12,751.86 L1003.98,751.50 L1003.84,751.14 L1003.70,750.78 L1003.58,750.42 L1003.46,750.06 L1003.35,749.70 L1003.25,749.34 L1003.15,748.98 L1003.07,748.62 L1002.98,748.26 L1002.91,747.90 L1002.85,747.54 L1002.79,747.17 L1002.74,746.81 L1002.70,746.45 L1002.66,746.09 L1002.63,745.73 L1002.62,745.37 L1002.60,745.01 L1002.60,744.65 L1002.60,744.29 L1002.62,743.93 L1002.63,743.57 L1002.66,743.21 L1002.70,742.85 L1002.74,742.49 L1002.79,742.13 L1002.85,741.76 L1002.91,741.40 L1002.98,741.04 L1003.07,740.68 L1003.15,740.32 L1003.25,739.96 L1003.35,739.60 L1003.46,739.24 L1003.58,738.88 L1003.70,738.52 L1003.84,738.16 L1003.98,737.80 L1004.12,737.44 L1004.28,737.08 L1004.44,736.72 L1004.60,736.35 L1004.78,735.99 L1004.96,735.63 L1005.15,735.27 L1005.34,734.91 L1005.54,734.55 L1005.75,734.19 L1005.96,733.83 L1006.18,733.47 L1006.41,733.11 L1006.64,732.75 L1006.88,732.39 L1007.12,732.03 L1007.37,731.67 L1007.63,731.31 L1007.89,730.94 L1008.15,730.58 L1008.42,730.22 L1008.70,729.86 L1008.98,729.50 L1009.27,729.14 L1009.56,728.78 L1009.85,728.42 L1010.16,728.06 L1010.46,727.70 L1010.77,727.34 L1011.08,726.98 L1011.40,726.62 L1011.72,726.26 L1012.05,725.90 L1012.37,725.53 L1012.71,725.17 L1013.04,724.81 L1013.38,724.45 L1013.72,724.09 L1014.07,723.73 L1014.41,723.37 L1014.76,723.01 L1015.11,722.65 L1015.47,722.29 L1015.82,721.93 L1016.18,721.57 L1016.54,721.21 L1016.90,720.85 L1017.26,720.49 L1017.63,720.12 L1017.99,719.76 L1018.36,719.40 L1018.73,719.04 L1019.09,718.68 L1019.46,718.32 L1019.83,717.96 L1020.20,717.60" fill="none" stroke="#800080" stroke-width="1.4"/><path d="M976.90,868.70 L976.54,867.96 L976.18,867.23 L975.82,866.49 L975.46,865.76 L975.10,865.04 L974.74,864.32 L974.38,863.61 L974.03,862.91 L973.67,862.22 L973.31,861.54 L972.95,860.87 L972.59,860.22 L972.23,859.58 L971.87,858.96 L971.51,858.35 L971.15,857.77 L970.79,857.20 L970.43,856.65 L970.07,856.13 L969.71,855.62 L969.35,855.14 L968.99,854.68 L968.64,854.25 L968.28,853.84 L967.92,853.46 L967.56,853.10 L967.20,852.78 L966.84,852.48 L966.48,852.20 L966.12,851.96 L965.76,851.75 L965.40,851.57 L965.04,851.41 L964.68,851.29 L964.32,851.20 L963.96,851.13 L963.60,851.10 L963.25,851.10 L962.89,851.13 L962.53,851.20 L962.17,851.29 L961.81,851.41 L961.45,851.57 L961.09,851.75 L960.73,851.96 L960.37,852.20 L960.01,852.48 L959.65,852.78 L959.29,853.10 L958.93,853.46 L958.57,853.84 L958.21,854.25 L957.86,854.68 L957.50,855.14 L957.14,855.62 L956.78,856.13 L956.42,856.65 L956.06,857.20 L955.70,857.77 L955.34,858.35 L954.98,858.96 L954.62,859.58 L954.26,860.22 L953.90,860.87 L953.54,861.54 L953.18,862.22 L952.82,862.91 L952.47,863.61 L952.11,864.32 L951.75,865.04 L951.39,865.76 L951.03,866.49 L950.67,867.23 L950.31,867.96 L949.95,868.70 L949.59,869.44 L949.23,870.17 L948.87,870.91 L948.51,871.64 L948.15,872.36 L947.79,873.08 L947.43,873.79 L947.08,874.49 L946.72,875.18 L946.36,875.86 L946.00,876.53 L945.64,877.18 L945.28,877.82 L944.92,878.44 L944.56,879.05 L944.20,879.63 L943.84,880.20 L943.48,880.75 L943.12,881.27 L942.76,881.78 L942.40,882.26 L942.04,882.72 L941.69,883.15 L941.33,883.56 L940.97,883.94 L940.61,884.30 L940.25,884.62 L939.89,884.92 L939.53,885.20 L939.17,885.44 L938.81,885.65 L938.45,885.83 L938.09,885.99 L937.73,886.11 L937.37,886.20 L937.01,886.27 L936.65,886.30 L936.30,886.30 L935.94,886.27 L935.58,886.20 L935.22,886.11 L934.86,885.99 L934.50,885.83 L934.14,885.65 L933.78,885.44 L933.42,885.20 L933.06,884.92 L932.70,884.62 L932.34,884.30 L931.98,883.94 L931.62,883.56 L931.26,883.15 L930.91,882.72 L930.55,882.26 L930.19,881.78 L929.83,881.27 L929.47,880.75 L929.11,880.20 L928.75,879.63 L928.39,879.05 L928.03,878.44 L927.67,877.82 L927.31,877.18 L926.95,876.53 L926.59,875.86 L926.23,875.18 L925.87,874.49 L925.52,873.79 L925.16,873.08 L924.80,872.36 L924.44,871.64 L924.08,870.91 L923.72,870.17 L923.36,869.44 L923.00,868.70 L922.64,867.96 L922.28,867.23 L921.92,866.49 L921.56,865.76 L921.20,865.04 L920.84,864.32 L920.48,863.61 L920.13,862.91 L919.77,862.22 L919.41,861.54 L919.05,860.87 L918.69,860.22 L918.33,859.58 L917.97,858.96 L917.61,858.35 L917.25,857.77 L916.89,857.20 L916.53,856.65 L916.17,856.13 L915.81,855.62 L915.45,855.14 L915.09,854.68 L914.74,854.25 L914.38,853.84 L914.02,853.46 L913.66,853.10 L913.30,852.78 L912.94,852.48 L912.58,852.20 L912.22,851.96 L911.86,851.75 L911.50,851.57 L911.14,851.41 L910.78,851.29 L910.42,851.20 L910.06,851.13 L909.70,851.10 L909.35,851.10 L908.99,851.13 L908.63,851.20 L908.27,851.29 L907.91,851.41 L907.55,851.57 L907.19,851.75 L906.83,851.96 L906.47,852.20 L906.11,852.48 L905.75,852.78 L905.39,853.10 L905.03,853.46 L904.67,853.84 L904.31,854.25 L903.96,854.68 L903.60,855.14 L903.24,855.62 L902.88,856.13 L902.52,856.65 L902.16,857.20 L901.80,857.77 L901.44,858.35 L901.08,858.96 L900.72,859.58 L900.36,860.22 L900.00,860.87 L899.64,861.54 L899.28,862.22 L898.92,862.91 L898.57,863.61 L898.21,864.32 L897.85,865.04 L897.49,865.76 L897.13,866.49 L896.77,867.23 L896.41,867.96 L896.05,868.70 L895.69,869.44 L895.33,870.17 L894.97,870.91 L894.61,871.64 L894.25,872.36 L893.89,873.08 L893.53,873.79 L893.18,874.49 L892.82,875.18 L892.46,875.86 L892.10,876.53 L891.74,877.18 L891.38,877.82 L891.02,878.44 L890.66,879.05 L890.30,879.63 L889.94,880.20 L889.58,880.75 L889.22,881.27 L888.86,881.78 L888.50,882.26 L888.14,882.72 L887.79,883.15 L887.43,883.56 L887.07,883.94 L886.71,884.30 L886.35,884.62 L885.99,884.92 L885.63,885.20 L885.27,885.44 L884.91,885.65 L884.55,885.83 L884.19,885.99 L883.83,886.11 L883.47,886.20 L883.11,886.27 L882.75,886.30 L882.40,886.30 L882.04,886.27 L881.68,886.20 L881.32,886.11 L880.96,885.99 L880.60,885.83 L880.24,885.65 L879.88,885.44 L879.52,885.20 L879.16,884.92 L878.80,884.62 L878.44,884.30 L878.08,883.94 L877.72,883.56 L877.36,883.15 L877.01,882.72 L876.65,882.26 L876.29,881.78 L875.93,881.27 L875.57,880.75 L875.21,880.20 L874.85,879.63 L874.49,879.05 L874.13,878.44 L873.77,877.82 L873.41,877.18 L873.05,876.53 L872.69,875.86 L872.33,875.18 L871.97,874.49 L871.62,873.79 L871.26,873.08 L870.90,872.36 L870.54,871.64 L870.18,870.91 L869.82,870.17 L869.46,869.44 L869.10,868.70" fill="none" stroke="#800080" stroke-width="1.4"/><circle cx="976.9" cy="868.7" r="2.0" fill="#ff8000"/><circle cx="1020.2" cy="825.8" r="2.0" fill="#ff8000"/><circle cx="1054.8" cy="868.7" r="2.0" fill="#ff8000"/><circle cx="1020.2" cy="903.1" r="2.0" fill="#ff8000"/><circle cx="1020.2" cy="868.7" r="2.0" fill="#ff8000"/><path d="M931.60,791.60 L931.27,790.95 L930.95,790.29 L930.62,789.64 L930.29,788.99 L929.97,788.34 L929.64,787.69 L929.31,787.04 L928.99,786.40 L928.66,785.75 L928.34,785.11 L928.01,784.48 L927.69,783.84 L927.37,783.21 L927.04,782.58 L926.72,781.96 L926.40,781.34 L926.07,780.72 L925.75,780.11 L925.43,779.51 L925.11,778.91 L924.79,778.32 L924.48,777.73 L924.16,777.15 L923.84,776.57 L923.52,776.00 L923.21,775.44 L922.90,774.88 L922.58,774.33 L922.27,773.79 L921.96,773.26 L921.65,772.74 L921.34,772.22 L921.03,771.71 L920.72,771.21 L920.42,770.72 L920.11,770.24 L919.81,769.77 L919.51,769.31 L919.21,768.86 L918.91,768.41 L918.61,767.98 L918.32,767.56 L918.02,767.15 L917.73,766.75 L917.44,766.36 L917.15,765.98 L916.86,765.61 L916.57,765.26 L916.28,764.91 L916.00,764.58 L915.72,764.26 L915.44,763.95 L915.16,763.65 L914.88,763.37 L914.61,763.10 L914.33,762.84 L914.06,762.59 L913.79,762.36 L913.53,762.14 L913.26,761.93 L913.00,761.73 L912.74,761.55 L912.48,761.38 L912.22,761.22 L911.97,761.08 L911.71,760.95 L911.46,760.84 L911.21,760.73 L910.97,760.65 L910.72,760.57 L910.48,760.51 L910.24,760.46 L910.01,760.43 L909.77,760.41 L909.54,760.40 L909.31,760.41 L909.08,760.43 L908.86,760.46 L908.63,760.51 L908.41,760.57 L908.20,760.65 L907.98,760.73 L907.77,760.84 L907.56,760.95 L907.35,761.08 L907.15,761.22 L906.95,761.38 L906.75,761.55 L906.55,761.73 L906.36,761.93 L906.17,762.14 L905.98,762.36 L905.80,762.59 L905.61,762.84 L905.43,763.10 L905.26,763.37 L905.08,763.65 L904.91,763.95 L904.74,764.26 L904.58,764.58 L904.42,764.91 L904.26,765.26 L904.10,765.61 L903.95,765.98 L903.80,766.36 L903.65,766.75 L903.51,767.15 L903.37,767.56 L903.23,767.98 L903.10,768.41 L902.97,768.86 L902.84,769.31 L902.71,769.77 L902.59,770.24 L902.47,770.72 L902.36,771.21 L902.24,771.71 L902.14,772.22 L902.03,772.74 L901.93,773.26 L901.83,773.79 L901.73,774.33 L901.64,774.88 L901.55,775.44 L901.46,776.00 L901.38,776.57 L901.30,777.15 L901.22,777.73 L901.15,778.32 L901.08,778.91 L901.02,779.51 L900.95,780.11 L900.89,780.72 L900.84,781.34 L900.78,781.96 L900.73,782.58 L900.69,783.21 L900.65,783.84 L900.61,784.48 L900.57,785.11 L900.54,785.75 L900.51,786.40 L900.48,787.04 L900.46,787.69 L900.44,788.34 L900.43,788.99 L900.42,789.64 L900.41,790.29 L900.40,790.95 L900.40,791.60 L900.40,792.25 L900.41,792.91 L900.42,793.56 L900.43,794.21 L900.44,794.86 L900.46,795.51 L900.48,796.16 L900.51,796.80 L900.54,797.45 L900.57,798.09 L900.61,798.72 L900.65,799.36 L900.69,799.99 L900.73,800.62 L900.78,801.24 L900.84,801.86 L900.89,802.48 L900.95,803.09 L901.02,803.69 L901.08,804.29 L901.15,804.88 L901.22,805.47 L901.30,806.05 L901.38,806.63 L901.46,807.20 L901.55,807.76 L901.64,808.32 L901.73,808.87 L901.83,809.41 L901.93,809.94 L902.03,810.46 L902.14,810.98 L902.24,811.49 L902.36,811.99 L902.47,812.48 L902.59,812.96 L902.71,813.43 L902.84,813.89 L902.97,814.34 L903.10,814.79 L903.23,815.22 L903.37,815.64 L903.51,816.05 L903.65,816.45 L903.80,816.84 L903.95,817.22 L904.10,817.59 L904.26,817.94 L904.42,818.29 L904.58,818.62 L904.74,818.94 L904.91,819.25 L905.08,819.55 L905.26,819.83 L905.43,820.10 L905.61,820.36 L905.80,820.61 L905.98,820.84 L906.17,821.06 L906.36,821.27 L906.55,821.47 L906.75,821.65 L906.95,821.82 L907.15,821.98 L907.35,822.12 L907.56,822.25 L907.77,822.36 L907.98,822.47 L908.20,822.55 L908.41,822.63 L908.63,822.69 L908.86,822.74 L909.08,822.77 L909.31,822.79 L909.54,822.80 L909.77,822.79 L910.01,822.77 L910.24,822.74 L910.48,822.69 L910.72,822.63 L910.97,822.55 L911.21,822.47 L911.46,822.36 L911.71,822.25 L911.97,822.12 L912.22,821.98 L912.48,821.82 L912.74,821.65 L913.00,821.47 L913.26,821.27 L913.53,821.06 L913.79,820.84 L914.06,820.61 L914.33,820.36 L914.61,820.10 L914.88,819.83 L915.16,819.55 L915.44,819.25 L915.72,818.94 L916.00,818.62 L916.28,818.29 L916.57,817.94 L916.86,817.59 L917.15,817.22 L917.44,816.84 L917.73,816.45 L918.02,816.05 L918.32,815.64 L918.61,815.22 L918.91,814.79 L919.21,814.34 L919.51,813.89 L919.81,813.43 L920.11,812.96 L920.42,812.48 L920.72,811.99 L921.03,811.49 L921.34,810.98 L921.65,810.46 L921.96,809.94 L922.27,809.41 L922.58,808.87 L922.90,808.32 L923.21,807.76 L923.52,807.20 L923.84,806.63 L924.16,806.05 L924.48,805.47 L924.79,804.88 L925.11,804.29 L925.43,803.69 L925.75,803.09 L926.07,802.48 L926.40,801.86 L926.72,801.24 L927.04,800.62 L927.37,799.99 L927.69,799.36 L928.01,798.72 L928.34,798.09 L928.66,797.45 L928.99,796.80 L929.31,796.16 L929.64,795.51 L929.97,794.86 L930.29,794.21 L930.62,793.56 L930.95,792.91 L931.27,792.25 L931.60,791.60" fill="none" stroke="#808080" stroke-width="1.6"/><path d="M931.60,791.60 L931.93,790.95 L932.25,790.29 L932.58,789.64 L932.91,788.99 L933.23,788.34 L933.56,787.69 L933.89,787.04 L934.21,786.40 L934.54,785.75 L934.86,785.11 L935.19,784.48 L935.51,783.84 L935.83,783.21 L936.16,782.58 L936.48,781.96 L936.80,781.34 L937.13,780.72 L937.45,780.11 L937.77,779.51 L938.09,778.91 L938.41,778.32 L938.72,777.73 L939.04,777.15 L939.36,776.57 L939.68,776.00 L939.99,775.44 L940.30,774.88 L940.62,774.33 L940.93,773.79 L941.24,773.26 L941.55,772.74 L941.86,772.22 L942.17,771.71 L942.48,771.21 L942.78,770.72 L943.09,770.24 L943.39,769.77 L943.69,769.31 L943.99,768.86 L944.29,768.41 L944.59,767.98 L944.88,767.56 L945.18,767.15 L945.47,766.75 L945.76,766.36 L946.05,765.98 L946.34,765.61 L946.63,765.26 L946.92,764.91 L947.20,764.58 L947.48,764.26 L947.76,763.95 L948.04,763.65 L948.32,763.37 L948.59,763.10 L948.87,762.84 L949.14,762.59 L949.41,762.36 L949.67,762.14 L949.94,761.93 L950.20,761.73 L950.46,761.55 L950.72,761.38 L950.98,761.22 L951.23,761.08 L951.49,760.95 L951.74,760.84 L951.99,760.73 L952.23,760.65 L952.48,760.57 L952.72,760.51 L952.96,760.46 L953.19,760.43 L953.43,760.41 L953.66,760.40 L953.89,760.41 L954.12,760.43 L954.34,760.46 L954.57,760.51 L954.79,760.57 L955.00,760.65 L955.22,760.73 L955.43,760.84 L955.64,760.95 L955.85,761.08 L956.05,761.22 L956.25,761.38 L956.45,761.55 L956.65,761.73 L956.84,761.93 L957.03,762.14 L957.22,762.36 L957.40,762.59 L957.59,762.84 L957.77,763.10 L957.94,763.37 L958.12,763.65 L958.29,763.95 L958.46,764.26 L958.62,764.58 L958.78,764.91 L958.94,765.26 L959.10,765.61 L959.25,765.98 L959.40,766.36 L959.55,766.75 L959.69,767.15 L959.83,767.56 L959.97,767.98 L960.10,768.41 L960.23,768.86 L960.36,769.31 L960.49,769.77 L960.61,770.24 L960.73,770.72 L960.84,771.21 L960.96,771.71 L961.06,772.22 L961.17,772.74 L961.27,773.26 L961.37,773.79 L961.47,774.33 L961.56,774.88 L961.65,775.44 L961.74,776.00 L961.82,776.57 L961.90,777.15 L961.98,777.73 L962.05,778.32 L962.12,778.91 L962.18,779.51 L962.25,780.11 L962.31,780.72 L962.36,781.34 L962.42,781.96 L962.47,782.58 L962.51,783.21 L962.55,783.84 L962.59,784.48 L962.63,785.11 L962.66,785.75 L962.69,786.40 L962.72,787.04 L962.74,787.69 L962.76,788.34 L962.77,788.99 L962.78,789.64 L962.79,790.29 L962.80,790.95 L962.80,791.60 L962.80,792.25 L962.79,792.91 L962.78,793.56 L962.77,794.21 L962.76,794.86 L962.74,795.51 L962.72,796.16 L962.69,796.80 L962.66,797.45 L962.63,798.09 L962.59,798.72 L962.55,799.36 L962.51,799.99 L962.47,800.62 L962.42,801.24 L962.36,801.86 L962.31,802.48 L962.25,803.09 L962.18,803.69 L962.12,804.29 L962.05,804.88 L961.98,805.47 L961.90,806.05 L961.82,806.63 L961.74,807.20 L961.65,807.76 L961.56,808.32 L961.47,808.87 L961.37,809.41 L961.27,809.94 L961.17,810.46 L961.06,810.98 L960.96,811.49 L960.84,811.99 L960.73,812.48 L960.61,812.96 L960.49,813.43 L960.36,813.89 L960.23,814.34 L960.10,814.79 L959.97,815.22 L959.83,815.64 L959.69,816.05 L959.55,816.45 L959.40,816.84 L959.25,817.22 L959.10,817.59 L958.94,817.94 L958.78,818.29 L958.62,818.62 L958.46,818.94 L958.29,819.25 L958.12,819.55 L957.94,819.83 L957.77,820.10 L957.59,820.36 L957.40,820.61 L957.22,820.84 L957.03,821.06 L956.84,821.27 L956.65,821.47 L956.45,821.65 L956.25,821.82 L956.05,821.98 L955.85,822.12 L955.64,822.25 L955.43,822.36 L955.22,822.47 L955.00,822.55 L954.79,822.63 L954.57,822.69 L954.34,822.74 L954.12,822.77 L953.89,822.79 L953.66,822.80 L953.43,822.79 L953.19,822.77 L952.96,822.74 L952.72,822.69 L952.48,822.63 L952.23,822.55 L951.99,822.47 L951.74,822.36 L951.49,822.25 L951.23,822.12 L950.98,821.98 L950.72,821.82 L950.46,821.65 L950.20,821.47 L949.94,821.27 L949.67,821.06 L949.41,820.84 L949.14,820.61 L948.87,820.36 L948.59,820.10 L948.32,819.83 L948.04,819.55 L947.76,819.25 L947.48,818.94 L947.20,818.62 L946.92,818.29 L946.63,817.94 L946.34,817.59 L946.05,817.22 L945.76,816.84 L945.47,816.45 L945.18,816.05 L944.88,815.64 L944.59,815.22 L944.29,814.79 L943.99,814.34 L943.69,813.89 L943.39,813.43 L943.09,812.96 L942.78,812.48 L942.48,811.99 L942.17,811.49 L941.86,810.98 L941.55,810.46 L941.24,809.94 L940.93,809.41 L940.62,808.87 L940.30,808.32 L939.99,807.76 L939.68,807.20 L939.36,806.63 L939.04,806.05 L938.72,805.47 L938.41,804.88 L938.09,804.29 L937.77,803.69 L937.45,803.09 L937.13,802.48 L936.80,801.86 L936.48,801.24 L936.16,800.62 L935.83,799.99 L935.51,799.36 L935.19,798.72 L934.86,798.09 L934.54,797.45 L934.21,796.80 L933.89,796.16 L933.56,795.51 L933.23,794.86 L932.91,794.21 L932.58,793.56 L932.25,792.91 L931.93,792.25 L931.60,791.60" fill="none" stroke="#ff0000" stroke-width="3"/><circle cx="931" cy="791.8" r="4.6" fill="#ff8000" stroke="#000" stroke-width="1.5"/></svg>
<div class="t" style="left:963.6px;top:399.4px;font-size:12.5px;color:#333;font-family:'Liberation Sans',sans-serif;">z</div>
<div class="t" style="left:995.3px;top:444.1px;font-size:12.5px;color:#333;font-family:'Liberation Sans',sans-serif;">x</div>
<div class="t" style="left:933.4px;top:449.0px;font-size:12.5px;color:#333;font-family:'Liberation Sans',sans-serif;">y</div>
<div class="t" style="left:743.0px;top:542.9px;font-size:12.5px;color:#333;font-family:'Liberation Sans',sans-serif;">z</div>
<div class="t" style="left:713.4px;top:592.9px;font-size:12.5px;color:#333;font-family:'Liberation Sans',sans-serif;">y</div>
<div class="t" style="left:774.4px;top:587.9px;font-size:12.5px;color:#333;font-family:'Liberation Sans',sans-serif;">x</div>
<div class="t" style="left:698.6px;top:347.7px;font-size:13px;color:#333;font-family:'Liberation Sans',sans-serif;">z</div>
<div class="t" style="left:722.7px;top:502.5px;font-size:13px;color:#333;font-family:'Liberation Sans',sans-serif;">y</div>
<div class="t" style="left:769.6px;top:346.7px;font-size:13px;color:#333;font-family:'Liberation Sans',sans-serif;">z</div>
<div class="t" style="left:801.1px;top:517.6px;font-size:13px;color:#333;font-family:'Liberation Sans',sans-serif;">x</div>
<div class="t" style="left:661.4px;top:545.7px;font-size:13px;color:#333;font-family:'Liberation Sans',sans-serif;">z</div>
<div class="t" style="left:551.4px;top:627.7px;font-size:13px;color:#333;font-family:'Liberation Sans',sans-serif;">y</div>
<div class="t" style="left:818.9px;top:541.7px;font-size:13px;color:#333;font-family:'Liberation Sans',sans-serif;">z</div>
<div class="t" style="left:956.9px;top:611.7px;font-size:13px;color:#333;font-family:'Liberation Sans',sans-serif;">x</div>
<div class="t" style="left:735.9px;top:652.7px;font-size:13px;color:#333;font-family:'Liberation Sans',sans-serif;">x</div>
<div class="t" style="left:594.9px;top:689.2px;font-size:13px;color:#333;font-family:'Liberation Sans',sans-serif;">y</div>
<div class="t" style="left:816.9px;top:630.7px;font-size:13px;color:#333;font-family:'Liberation Sans',sans-serif;">y</div>
<div class="t" style="left:929.4px;top:672.7px;font-size:13px;color:#333;font-family:'Liberation Sans',sans-serif;">x</div>
<div class="t" style="left:987.9px;top:576.8px;font-size:15.6px;color:#e0506a;font-family:'Liberation Sans',sans-serif;">Ampliar</div>
<div class="t" style="left:987.5px;top:599.4px;font-size:16.3px;color:#e0506a;font-family:'Liberation Sans',sans-serif;">50%</div>
<div class="t" style="left:527.5px;top:744.6px;font-size:17.6px;color:#777;font-family:'Liberation Sans',sans-serif;">xOz</div>
<div class="t" style="left:758.5px;top:791.0px;font-size:18px;color:#777;font-family:'Liberation Sans',sans-serif;">xOy</div>
<div class="t" style="left:912.6px;top:735.3px;font-size:18px;color:#777;font-family:'Liberation Sans',sans-serif;">yOz</div>
</div></div></body></html>
